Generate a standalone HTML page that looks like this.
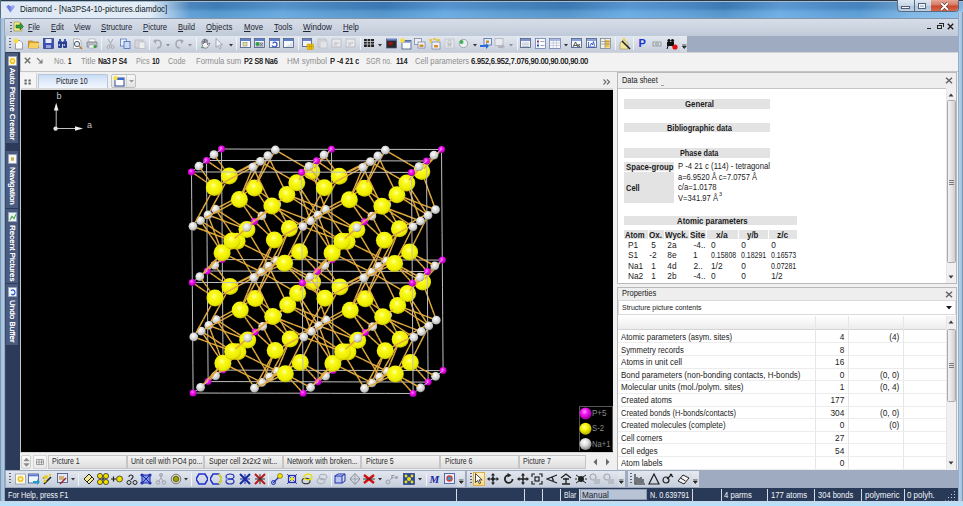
<!DOCTYPE html>
<html><head><meta charset="utf-8">
<style>
*{margin:0;padding:0;box-sizing:border-box}
html,body{width:963px;height:506px;overflow:hidden}
body{position:relative;background:#a6c3e2;font-family:"Liberation Sans",sans-serif;font-size:8px;color:#1a1a1a}
.a{position:absolute}
.t{position:absolute;white-space:nowrap;line-height:1}
/* title bar */
#title{left:0;top:0;width:963px;height:18px;background:
linear-gradient(90deg,rgba(222,233,245,1) 0,rgba(226,236,247,1) 150px,rgba(226,236,247,0) 190px),
linear-gradient(180deg,rgba(20,40,80,.10) 0,rgba(20,40,80,.05) 45%,rgba(140,210,255,.25) 65%,rgba(150,210,250,.35) 100%),
linear-gradient(100deg,#4f8cc4 0,#4f8cc4 190px,#4282bc 215px,#5a9ad2 280px,#4a88c2 330px,#3e7eb8 380px,#5c9cd6 440px,#4c8ac4 500px,#3f7eb8 560px,#5e9ed8 620px,#4f8dc8 680px,#3f7eb8 715px,#62a0da 770px,#4d8cc8 830px,#4a8ac4 850px,#7aaedc 900px,#94c0e8 963px)}
#title:after{content:"";position:absolute;left:0;top:0;right:0;height:1px;background:#4a5866;box-shadow:0 1px 0 #a4bed6}
#frameL{left:0;top:18px;width:5px;height:488px;background:linear-gradient(90deg,#5b6e82 0,#9fbddc 1px,#b3cde8 4px,#6f8196 5px)}
#frameR{left:958px;top:12px;width:5px;height:494px;background:linear-gradient(90deg,#7a8ca0 0,#b4d0ec 1px,#a4c4e4 3.5px,#6a7e94 5px)}
#frameB{left:0;top:500.5px;width:963px;height:5.5px;background:linear-gradient(180deg,#c4d6e8 0,#c2dcf0 1.5px,#b2e2fc 4.5px,#2c6a8a 5.5px)}
#topline{left:0;top:0;width:963px;height:1px;background:#2c3744}
/* menu */
#menu{left:5px;top:18px;width:953px;height:17.5px;background:linear-gradient(180deg,#d6dde8 0,#ccd4e0 55%,#bfc9d8 100%);border-top:1px solid #8494aa}
.mi{font-size:8.2px;color:#1c2533;letter-spacing:-0.15px}
.mi u{text-decoration:underline}
/* toolbar row */
#tbrow{left:5px;top:35.5px;width:953px;height:17px;background:#9eabc0}
#tb{left:6px;top:35.5px;width:681px;height:16.5px;background:linear-gradient(180deg,#e2e7ef 0,#d3dae5 55%,#c5cddb 100%);border-radius:0 2px 2px 0}
.ic{position:absolute;width:11px;height:10px}
.sep{position:absolute;width:1px;height:13px;background:#9aa6b8;border-right:1px solid #f0f3f7}
/* info bar */
#info{left:20px;top:52px;width:938px;height:19px;background:#f2f2f2;border-top:1.5px solid #d0d4da}
.il{top:56.5px;font-size:8px;color:#8c8c8c;letter-spacing:-0.1px}
.iv{color:#1c1c1c}
/* sidebar */
#side{left:5px;top:52px;width:16px;height:418px;background:#2c3b5a;border-left:0.5px solid #3a4a60;border-right:1.5px solid #c0c7d2}
.sb{position:absolute;left:5.5px;width:12.3px;background:#4b5b80}
.sbt{position:absolute;left:17.5px;transform-origin:0 0;transform:rotate(90deg);color:#ffffff;font-size:8.2px;white-space:nowrap;line-height:1;text-shadow:0 0.25px 0 #fff}
/* tab bar */
#tabbar{left:20px;top:70.8px;width:593px;height:19px;background:#f0f0f0;border-top:1px solid #c4c4c4}
#pic{left:20.5px;top:89.5px;width:592.5px;height:362.5px;background:#000;overflow:hidden}
/* right */
#rbg{left:613px;top:70.8px;width:345px;height:400px;background:#f0f0f0;border-top:1px solid #c4c4c4}
.panel{position:absolute;background:#fff;border:1px solid #b9b9b9}
.ph{position:absolute;left:0;top:0;right:0;background:#eeeeee;border-bottom:1px solid #c4c4c4}
.bar{position:absolute;left:624px;height:9.5px;background:#e3e3e3}
.ds{font-size:7.6px;color:#1a1a1a}
.dsb{font-weight:bold;font-size:7.4px}
.pr{position:absolute;left:617px;width:329px;height:12.5px;border-bottom:1px solid #ececec}
.prt{font-size:7.7px;color:#1a1a1a}
/* bottom */
#btabs{left:20px;top:452px;width:593px;height:18px;background:#f0f0f0;border-top:1px solid #d6d6d6}
.bt{position:absolute;top:455px;height:13.5px;background:linear-gradient(180deg,#f4f4f4,#dedede);border:1px solid #c6c6c6;font-size:8px;color:#2a2a2a}
#btrow{left:5px;top:470px;width:953px;height:17.5px;background:#9eabc0}
#btb{left:6px;top:470.5px;width:692px;height:16.5px;background:linear-gradient(180deg,#e2e7ef 0,#d3dae5 55%,#c5cddb 100%)}
#status{left:5px;top:487.5px;width:953px;height:13.5px;background:#293a58}
.st{top:491px;font-size:8px;color:#f4f6fa}
.ssep{position:absolute;top:488.5px;width:1px;height:12px;background:#d6dbe4}
</style></head><body>
<div class="a" id="title"></div>
<div class="a" id="topline"></div><div class="a" style="left:0;top:0;width:1px;height:506px;background:#5a6a7c"></div>
<svg class="a" style="left:5px;top:4px" width="11" height="10" viewBox="0 0 11 10"><path d="M1 2.5 L3.2 1 L5.5 2.3 L7.8 1 L10 2.5 L5.5 8.5 Z" fill="#8a9af0"/><path d="M3.2 1 L5.5 2.3 L5.5 8.5 L2.2 3.2Z" fill="#6a78d8"/><path d="M7.8 1 L5.5 2.3 L8.8 3.2Z" fill="#b8c4f8"/></svg><div class="t" style="left:19.70px;top:4.72px;font-size:8.6px;color:#101820;transform:scaleX(0.9261);transform-origin:0 0;">Diamond - [Na3PS4-10-pictures.diamdoc]</div>
<div class="a" id="menu"></div>
<div class="t" style="left:27.60px;top:22.55px;font-size:8.8px;color:#1c2533;transform:scaleX(0.8388);transform-origin:0 0;"><u style="text-decoration-thickness:0.6px;text-underline-offset:0.5px">F</u>ile</div>
<div class="t" style="left:50.50px;top:22.55px;font-size:8.8px;color:#1c2533;transform:scaleX(0.8437);transform-origin:0 0;"><u style="text-decoration-thickness:0.6px;text-underline-offset:0.5px">E</u>dit</div>
<div class="t" style="left:73.70px;top:22.55px;font-size:8.8px;color:#1c2533;transform:scaleX(0.8773);transform-origin:0 0;"><u style="text-decoration-thickness:0.6px;text-underline-offset:0.5px">V</u>iew</div>
<div class="t" style="left:101.10px;top:22.55px;font-size:8.8px;color:#1c2533;transform:scaleX(0.8739);transform-origin:0 0;"><u style="text-decoration-thickness:0.6px;text-underline-offset:0.5px">S</u>tructure</div>
<div class="t" style="left:143.30px;top:22.55px;font-size:8.8px;color:#1c2533;transform:scaleX(0.8799);transform-origin:0 0;"><u style="text-decoration-thickness:0.6px;text-underline-offset:0.5px">P</u>icture</div>
<div class="t" style="left:178.20px;top:22.55px;font-size:8.8px;color:#1c2533;transform:scaleX(0.8683);transform-origin:0 0;"><u style="text-decoration-thickness:0.6px;text-underline-offset:0.5px">B</u>uild</div>
<div class="t" style="left:206.30px;top:22.55px;font-size:8.8px;color:#1c2533;transform:scaleX(0.8817);transform-origin:0 0;"><u style="text-decoration-thickness:0.6px;text-underline-offset:0.5px">O</u>bjects</div>
<div class="t" style="left:243.50px;top:22.55px;font-size:8.8px;color:#1c2533;transform:scaleX(0.8831);transform-origin:0 0;"><u style="text-decoration-thickness:0.6px;text-underline-offset:0.5px">M</u>ove</div>
<div class="t" style="left:274.00px;top:22.55px;font-size:8.8px;color:#1c2533;transform:scaleX(0.8955);transform-origin:0 0;"><u style="text-decoration-thickness:0.6px;text-underline-offset:0.5px">T</u>ools</div>
<div class="t" style="left:303.00px;top:22.55px;font-size:8.8px;color:#1c2533;transform:scaleX(0.9261);transform-origin:0 0;"><u style="text-decoration-thickness:0.6px;text-underline-offset:0.5px">W</u>indow</div>
<div class="t" style="left:343.30px;top:22.55px;font-size:8.8px;color:#1c2533;transform:scaleX(0.8780);transform-origin:0 0;"><u style="text-decoration-thickness:0.6px;text-underline-offset:0.5px">H</u>elp</div>
<div class="a" style="left:9.5px;top:22px;width:2px;height:10px;background:repeating-linear-gradient(180deg,#5a6678 0 1px,transparent 1px 3px)"></div>
<svg class="a" style="left:13px;top:21px" width="11" height="11" viewBox="0 0 11 11"><path d="M1 1h6l2 2v7H1z" fill="#f4e97a" stroke="#8a8a50" stroke-width=".6"/><path d="M3 4h4v-2l3.5 3.5L7 9V7H3z" fill="#2e9a3a" stroke="#1c5a22" stroke-width=".5"/></svg>
<div class="a" style="left:926.5px;top:28px;width:4.5px;height:1.2px;background:#222"></div>
<div class="a" style="left:936.5px;top:24.5px;width:5.5px;height:4.5px;border:0.8px solid #222;border-top-width:1.3px"></div><div class="a" style="left:938.5px;top:23px;width:5px;height:4px;border:0.8px solid #222;border-top-width:1.3px;border-left:none;border-bottom:none"></div>
<svg class="a" style="left:946.5px;top:23px" width="7" height="7" viewBox="0 0 7 7"><path d="M.8 .8l5.4 5.4M6.2 .8L.8 6.2" stroke="#1a1a1a" stroke-width="1.3"/></svg>
<div class="a" id="tbrow"></div>
<div class="a" id="tb"></div>
<div class="a" style="left:9px;top:38px;width:2px;height:11px;background:repeating-linear-gradient(180deg,#5a6678 0 1px,transparent 1px 3px)"></div>
<svg class="a" style="left:13px;top:37.5px" width="11" height="12" viewBox="0 0 11 12"><path d="M2.5 2.5h4.5l2.5 2.5v6h-7z" fill="#fff" stroke="#7a7a7a" stroke-width=".7"/><circle cx="3" cy="3" r="2.4" fill="#f8e040"/></svg>
<svg class="a" style="left:28px;top:37.5px" width="12" height="11" viewBox="0 0 12 11"><path d="M.5 3h4l1 1h5v6H.5z" fill="#e0a830" stroke="#9a6a10" stroke-width=".6"/><path d="M2 5h9.5l-1.5 5H.5z" fill="#f6d060"/></svg>
<svg class="a" style="left:43px;top:37.5px" width="11" height="11" viewBox="0 0 11 11"><rect x=".5" y=".5" width="10" height="10" fill="#3a4eb8" stroke="#1c2a70" stroke-width=".6"/><rect x="2.5" y="1" width="6" height="4" fill="#e8ecf8"/><rect x="3" y="7" width="5" height="3" fill="#9aa6d8"/></svg>
<svg class="a" style="left:57px;top:37.5px" width="11" height="11" viewBox="0 0 11 11"><rect x="1" y="3" width="4" height="7" rx="1" fill="#2a3e90"/><rect x="6" y="3" width="4" height="7" rx="1" fill="#2a3e90"/><rect x="2" y="1" width="2" height="3" fill="#3a56b0"/><rect x="7" y="1" width="2" height="3" fill="#3a56b0"/><rect x="4" y="4" width="3" height="2" fill="#2a3e90"/><rect x="1.6" y="6" width="1.4" height="2" fill="#9ab0f0"/><rect x="6.6" y="6" width="1.4" height="2" fill="#9ab0f0"/></svg>
<svg class="a" style="left:72px;top:37.5px" width="11" height="12" viewBox="0 0 11 12"><path d="M1.5 1h5.5l2 2v7.5h-7.5z" fill="#fff" stroke="#8a8a8a" stroke-width=".6"/><circle cx="5" cy="6" r="2.6" fill="#e6eef8" stroke="#404a5a" stroke-width=".9"/><path d="M7 8l3 3" stroke="#c07a20" stroke-width="1.4"/></svg>
<svg class="a" style="left:86px;top:37.5px" width="12" height="11" viewBox="0 0 12 11"><path d="M3 1h6v3H3z" fill="#fff" stroke="#888" stroke-width=".5"/><path d="M1 4h10v5H1z" fill="#b8bcc4" stroke="#6a6e78" stroke-width=".6"/><rect x="3" y="7" width="6" height="3" fill="#f4f4f4" stroke="#888" stroke-width=".4"/><circle cx="9" cy="8.5" r="1.6" fill="#30a040"/></svg>
<svg class="a" style="left:105.5px;top:37.5px" width="9" height="11" viewBox="0 0 9 11"><path d="M2 1l4 7M7 1L3 8" stroke="#a8aab0" stroke-width="1"/><circle cx="2.5" cy="9" r="1.5" fill="none" stroke="#a8aab0"/><circle cx="6.5" cy="9" r="1.5" fill="none" stroke="#a8aab0"/></svg>
<svg class="a" style="left:119.5px;top:37.5px" width="11" height="11" viewBox="0 0 11 11"><rect x=".5" y="1" width="6" height="7" fill="#e8f0fc" stroke="#4a6ab8" stroke-width=".7"/><rect x="4" y="3.5" width="6" height="7" fill="#c8dcf8" stroke="#3a5ab0" stroke-width=".7"/></svg>
<svg class="a" style="left:133.5px;top:37.5px" width="12" height="11" viewBox="0 0 12 11"><rect x="1" y="2" width="8" height="8" fill="#d4d6da" stroke="#a8aab0" stroke-width=".6"/><rect x="5" y="4" width="6" height="6.5" fill="#eceef0" stroke="#b0b2b8" stroke-width=".6"/></svg>
<svg class="a" style="left:153px;top:37.5px" width="9" height="11" viewBox="0 0 9 11"><path d="M2 4c2-3 6-2 6 2s-3 4-4 4" fill="none" stroke="#a4a8b0" stroke-width="1.5"/><path d="M0 3l3-2v5z" fill="#a4a8b0"/></svg>
<svg class="a" style="left:175px;top:37.5px" width="9" height="11" viewBox="0 0 9 11"><path d="M7 4c-2-3-6-2-6 2s3 4 4 4" fill="none" stroke="#a4a8b0" stroke-width="1.5"/><path d="M9 3L6 1v5z" fill="#a4a8b0"/></svg>
<svg class="a" style="left:200px;top:37.5px" width="11" height="11" viewBox="0 0 11 11"><path d="M2 6V3h1.2v3V1.5h1.4V5V1h1.4v4V2h1.4v5l1.6-2 1 .6L7 10H3.5z" fill="#f4f4f4" stroke="#4a5060" stroke-width=".6"/><path d="M1 9l2 1" stroke="#30a040"/></svg>
<svg class="a" style="left:214.5px;top:37.5px" width="8" height="11" viewBox="0 0 8 11"><path d="M1 .5v9l2.2-2 1.6 3.2 1.4-.7-1.6-3.1h3z" fill="#f0f2f6" stroke="#8a8e98" stroke-width=".7"/></svg>
<svg class="a" style="left:240px;top:37.5px" width="11" height="11" viewBox="0 0 11 11"><rect x=".5" y=".5" width="10" height="9" fill="#f6f8fc" stroke="#44577e" stroke-width=".8"/><rect x="1" y="1" width="9" height="2" fill="#5a7fd0"/><rect x="3" y="4.5" width="4" height="3.5" fill="#e4dca0" stroke="#8a8460" stroke-width=".5"/></svg>
<svg class="a" style="left:254px;top:37.5px" width="11" height="11" viewBox="0 0 11 11"><rect x=".5" y=".5" width="10" height="9" fill="#f6f8fc" stroke="#44577e" stroke-width=".8"/><rect x="1" y="1" width="9" height="2" fill="#5a7fd0"/><path d="M1.5 4h8v5h-8z" fill="#b8bcc8"/><circle cx="3.5" cy="6" r="2" fill="#30a040"/><path d="M6 5l3 3M9 5L6 8" stroke="#606470" stroke-width=".7"/></svg>
<svg class="a" style="left:269px;top:37.5px" width="11" height="11" viewBox="0 0 11 11"><rect x=".5" y=".5" width="10" height="9" fill="#f6f8fc" stroke="#44577e" stroke-width=".8"/><rect x="1" y="1" width="9" height="2" fill="#5a7fd0"/><path d="M3 7.5c1 2 5 2 5-1s-4-3-4-1" fill="none" stroke="#3a5ac0" stroke-width="1.3"/></svg>
<svg class="a" style="left:283px;top:37.5px" width="11" height="11" viewBox="0 0 11 11"><rect x=".5" y=".5" width="10" height="9" fill="#f6f8fc" stroke="#44577e" stroke-width=".8"/><rect x="1" y="1" width="9" height="2" fill="#5a7fd0"/><path d="M9.5 4l-7 5h7z" fill="#dde2ea"/></svg>
<svg class="a" style="left:301.5px;top:37.5px" width="12" height="12" viewBox="0 0 12 12"><rect x=".5" y=".5" width="9" height="8" fill="#f0f2f8" stroke="#44577e" stroke-width=".8"/><rect x="1" y="1" width="8" height="2" fill="#6a80c8"/><rect x="5" y="6" width="6.5" height="5.5" fill="#f0c400" stroke="#c09000" stroke-width=".4"/><path d="M5 8.5h6.5M7.5 6v5.5M9.5 6v5.5" stroke="#a07800" stroke-width=".4"/></svg>
<svg class="a" style="left:317px;top:37.5px" width="11" height="11" viewBox="0 0 11 11"><rect x="1" y="1" width="8" height="8" fill="#d8dade" stroke="#b4b6bc" stroke-width=".7"/><rect x="3" y="3" width="7" height="7" fill="#e2e4e8" stroke="#b8bac0" stroke-width=".6"/></svg>
<svg class="a" style="left:330.5px;top:37.5px" width="11" height="11" viewBox="0 0 11 11"><rect x="1" y="1" width="9" height="8" fill="#e6e8ec" stroke="#b0b2b8" stroke-width=".7"/><path d="M3 5h5M3 7h3" stroke="#b8bac0"/></svg>
<svg class="a" style="left:344.5px;top:37.5px" width="11" height="11" viewBox="0 0 11 11"><rect x="1" y="1" width="9" height="8" fill="#e6e8ec" stroke="#b0b2b8" stroke-width=".7"/><path d="M3 5h5M3 7h3" stroke="#b8bac0"/></svg>
<svg class="a" style="left:364px;top:37.5px" width="10" height="10" viewBox="0 0 10 10"><rect x="0" y="1" width="10" height="8" fill="#202020"/><path d="M0 3.5h10M0 6h10M3.3 1v8M6.6 1v8" stroke="#d0d4dc" stroke-width=".8"/></svg>
<svg class="a" style="left:385.5px;top:37.5px" width="11" height="11" viewBox="0 0 11 11"><rect x=".5" y="1" width="10" height="9" fill="#2a2a2a" stroke="#4a5a80" stroke-width=".7"/><rect x="1" y="1" width="9" height="1.6" fill="#6a88d0"/><rect x="2.5" y="4" width="4" height="3" fill="#a01010"/></svg>
<svg class="a" style="left:399.5px;top:37.5px" width="12" height="12" viewBox="0 0 12 12"><rect x="2" y="2.5" width="9" height="8.5" fill="#f8fafc" stroke="#44577e" stroke-width=".8"/><rect x="2.5" y="3" width="8" height="1.6" fill="#6a88d0"/><circle cx="2.5" cy="2.5" r="2.3" fill="#f8e040"/></svg>
<svg class="a" style="left:414px;top:37.5px" width="12" height="11" viewBox="0 0 12 11"><rect x=".5" y=".5" width="7" height="6" fill="#eef0f6" stroke="#5a6a90" stroke-width=".6"/><rect x="4" y="4" width="7" height="6" fill="#f4f4f4" stroke="#5a6a90" stroke-width=".6"/><rect x="5.5" y="6.5" width="4" height="2.5" fill="#d09030"/></svg>
<svg class="a" style="left:428.5px;top:37.5px" width="12" height="12" viewBox="0 0 12 12"><rect x="3" y="4" width="8" height="7" fill="#f4f4f4" stroke="#5a6a90" stroke-width=".6"/><path d="M0 2h3M4 1h3M7 2h4M1 4h2" stroke="#e8c020" stroke-width="1.6"/><rect x="5" y="7" width="4" height="2.5" fill="#d09030"/></svg>
<svg class="a" style="left:444px;top:37.5px" width="11" height="11" viewBox="0 0 11 11"><rect x="1" y="1" width="9" height="9" fill="#e4e6ea" stroke="#b8bac0" stroke-width=".6"/><rect x="3.5" y="5" width="4" height="3.5" fill="#c0c2c8"/><path d="M4 5V3.5a1.5 1.5 0 013 0V5" fill="none" stroke="#a8aab0" stroke-width=".7"/></svg>
<svg class="a" style="left:458px;top:37.5px" width="11" height="11" viewBox="0 0 11 11"><circle cx="5.5" cy="5.5" r="4.2" fill="#eceef2" stroke="#9aa0a8" stroke-width=".9"/><circle cx="3.5" cy="4" r="2" fill="#40b050"/></svg>
<svg class="a" style="left:479.5px;top:37.5px" width="12" height="11" viewBox="0 0 12 11"><rect x="4" y=".5" width="7.5" height="6.5" fill="#e8ecf4" stroke="#3a5aa8" stroke-width=".7"/><rect x="6" y="2.5" width="3" height="2.5" fill="#c89030"/><path d="M0 8h6V6l3 3-3 3V10H0z" fill="#2a6ad8" transform="translate(0,-1)"/></svg>
<svg class="a" style="left:493.5px;top:37.5px" width="12" height="11" viewBox="0 0 12 11"><rect x="1" y=".5" width="8" height="7" fill="#e8eaee" stroke="#a8acb4" stroke-width=".7"/><path d="M4 8h4V6l3 2.5-3 2.5V10H4z" fill="#b0b4bc"/></svg>
<svg class="a" style="left:520px;top:37.5px" width="11" height="11" viewBox="0 0 11 11"><rect x=".5" y=".5" width="10" height="9" fill="#f6f8fc" stroke="#44577e" stroke-width=".8"/><rect x="1" y="1" width="9" height="2" fill="#7a90d0"/><path d="M2 5h7M2 6.8h7M2 8.5h7" stroke="#9aa0b0" stroke-width=".6"/></svg>
<svg class="a" style="left:534.5px;top:37.5px" width="11" height="11" viewBox="0 0 11 11"><rect x=".5" y=".5" width="10" height="10" fill="#fafbfe" stroke="#5a70a8" stroke-width=".7"/><path d="M2 3.5h2" stroke="#d02020" stroke-width="1.6"/><path d="M2 7.5h2" stroke="#2040c0" stroke-width="1.6"/><path d="M5.5 3.5h4M5.5 7.5h4" stroke="#8090b0" stroke-width=".8"/><path d="M3 1.5v8" stroke="#3050c0" stroke-width=".6"/></svg>
<svg class="a" style="left:548.5px;top:37.5px" width="12" height="11" viewBox="0 0 12 11"><rect x=".5" y=".5" width="11" height="10" fill="#f6f8fc" stroke="#5a70a8" stroke-width=".7"/><rect x="1" y="1" width="10" height="2" fill="#a8b8e0"/><path d="M1 5h10M1 7.5h10M4.3 3v7M7.6 3v7" stroke="#a8b0c8" stroke-width=".5"/></svg>
<svg class="a" style="left:571px;top:37.5px" width="11" height="11" viewBox="0 0 11 11"><rect x=".5" y=".5" width="10" height="9" fill="#f6f8fc" stroke="#44577e" stroke-width=".8"/><rect x="1" y="1" width="9" height="2" fill="#8aa0d8"/><path d="M2 9l2.5-5 2.5 5M3 7.5h3M6.5 6l2.5 3M9 6l-2.5 3" fill="none" stroke="#303030" stroke-width=".8"/></svg>
<svg class="a" style="left:585.5px;top:37.5px" width="11" height="11" viewBox="0 0 11 11"><rect x=".5" y=".5" width="10" height="9" fill="#f6f8fc" stroke="#44577e" stroke-width=".8"/><rect x="1" y="1" width="9" height="2" fill="#8aa0d8"/><path d="M2 9h7.5M2.5 4v5M4 8l1.5-3 1 2 1-3.5 1 4.5" fill="none" stroke="#2a4ac0" stroke-width=".8"/></svg>
<svg class="a" style="left:600px;top:37.5px" width="11" height="11" viewBox="0 0 11 11"><rect x=".5" y=".5" width="10" height="10" fill="#f0f0ea" stroke="#707880" stroke-width=".7"/><rect x="5" y="2" width="4.5" height="7.5" fill="#f0c440"/><path d="M1 3.5h9M1 6h9M5 1v9" stroke="#808890" stroke-width=".6"/></svg>
<svg class="a" style="left:618.5px;top:37.5px" width="12" height="12" viewBox="0 0 12 12"><path d="M1 11V5l4-3 4 3v6z" fill="#f0e6a0" stroke="#a09040" stroke-width=".6"/><path d="M3 3l8 8" stroke="#202020" stroke-width="1.6"/><circle cx="5" cy="1.5" r="1.2" fill="#f8d020"/></svg>
<svg class="a" style="left:651.5px;top:37.5px" width="10" height="10" viewBox="0 0 10 10"><path d="M1 4h8v4H1z" fill="none" stroke="#9aa4a0" stroke-width="1.1"/><circle cx="5" cy="6" r="1.4" fill="none" stroke="#9aa4a0"/></svg>
<svg class="a" style="left:665.5px;top:37.5px" width="12" height="12" viewBox="0 0 12 12"><circle cx="3" cy="2.5" r="1.6" fill="#101010"/><circle cx="6.5" cy="2.5" r="1.6" fill="#101010"/><rect x="1" y="4" width="7" height="4" fill="#101010"/><path d="M2 8l-1 3M7 8l1 3" stroke="#101010"/><circle cx="9" cy="9" r="2.6" fill="#e01010"/></svg>
<div class="t" style="left:638.5px;top:37.5px;font-size:11px;font-weight:bold;color:#2030d0">P</div>
<svg class="a" style="left:166px;top:43.5px" width="4" height="3" viewBox="0 0 4 3"><path d="M0 0h4L2 2.5z" fill="#8a8e96"/></svg>
<svg class="a" style="left:188px;top:43.5px" width="4" height="3" viewBox="0 0 4 3"><path d="M0 0h4L2 2.5z" fill="#8a8e96"/></svg>
<svg class="a" style="left:228.5px;top:43.5px" width="4" height="3" viewBox="0 0 4 3"><path d="M0 0h4L2 2.5z" fill="#333"/></svg>
<svg class="a" style="left:378px;top:43.5px" width="4" height="3" viewBox="0 0 4 3"><path d="M0 0h4L2 2.5z" fill="#333"/></svg>
<svg class="a" style="left:472.5px;top:43.5px" width="4" height="3" viewBox="0 0 4 3"><path d="M0 0h4L2 2.5z" fill="#333"/></svg>
<svg class="a" style="left:509px;top:43.5px" width="4" height="3" viewBox="0 0 4 3"><path d="M0 0h4L2 2.5z" fill="#8a8e96"/></svg>
<svg class="a" style="left:563.5px;top:43.5px" width="4" height="3" viewBox="0 0 4 3"><path d="M0 0h4L2 2.5z" fill="#333"/></svg>
<div class="sep" style="left:101px;top:37px"></div>
<div class="sep" style="left:148.5px;top:37px"></div>
<div class="sep" style="left:195.5px;top:37px"></div>
<div class="sep" style="left:235.5px;top:37px"></div>
<div class="sep" style="left:297.5px;top:37px"></div>
<div class="sep" style="left:359.5px;top:37px"></div>
<div class="sep" style="left:516.5px;top:37px"></div>
<div class="sep" style="left:614.5px;top:37px"></div>
<div class="sep" style="left:632.5px;top:37px"></div>
<div class="a" style="left:680px;top:35.5px;width:7px;height:16.5px;background:linear-gradient(180deg,#e6eaf0,#cfd6e0)"></div>
<svg class="a" style="left:681.5px;top:44px" width="5" height="6" viewBox="0 0 5 6"><path d="M0 0h4.5M0.3 2h4l-2 2.5z" stroke="#2a2a2a" stroke-width=".8" fill="#2a2a2a"/></svg>
<div class="a" id="info"></div>
<svg class="a" style="left:24px;top:57px" width="7" height="7" viewBox="0 0 7 7"><path d="M.8 .8l5.4 5.4M6.2 .8L.8 6.2" stroke="#6a6a6a" stroke-width="1.3"/></svg>
<svg class="a" style="left:36px;top:57px" width="7" height="7" viewBox="0 0 7 7"><path d="M1 1l5 5M2.5 6H6V2.5" fill="none" stroke="#7a7a7a" stroke-width="1.1"/></svg>
<div class="t" style="left:54.00px;top:57.02px;font-size:8.6px;color:#8e8e8e;transform:scaleX(0.8673);transform-origin:0 0;">No.</div>
<div class="t" style="left:68.10px;top:57.02px;font-size:8.6px;color:#1e1e1e;transform:scaleX(0.6902);transform-origin:0 0;text-shadow:0.2px 0 0 #2a2a2a">1</div>
<div class="t" style="left:80.90px;top:57.02px;font-size:8.6px;color:#8e8e8e;transform:scaleX(0.9170);transform-origin:0 0;">Title</div>
<div class="t" style="left:98.00px;top:57.02px;font-size:8.6px;color:#1e1e1e;transform:scaleX(0.7915);transform-origin:0 0;text-shadow:0.2px 0 0 #2a2a2a">Na3 P S4</div>
<div class="t" style="left:136.20px;top:57.02px;font-size:8.6px;color:#8e8e8e;transform:scaleX(0.8308);transform-origin:0 0;">Pics</div>
<div class="t" style="left:151.70px;top:57.02px;font-size:8.6px;color:#1e1e1e;transform:scaleX(0.7634);transform-origin:0 0;text-shadow:0.2px 0 0 #2a2a2a">10</div>
<div class="t" style="left:168.00px;top:57.02px;font-size:8.6px;color:#8e8e8e;transform:scaleX(0.8614);transform-origin:0 0;">Code</div>
<div class="t" style="left:196.20px;top:57.02px;font-size:8.6px;color:#8e8e8e;transform:scaleX(0.9015);transform-origin:0 0;">Formula sum</div>
<div class="t" style="left:244.40px;top:57.02px;font-size:8.6px;color:#1e1e1e;transform:scaleX(0.8081);transform-origin:0 0;text-shadow:0.2px 0 0 #2a2a2a">P2 S8 Na6</div>
<div class="t" style="left:286.50px;top:57.02px;font-size:8.6px;color:#8e8e8e;transform:scaleX(0.9329);transform-origin:0 0;">HM symbol</div>
<div class="t" style="left:329.60px;top:57.02px;font-size:8.6px;color:#1e1e1e;transform:scaleX(0.8438);transform-origin:0 0;text-shadow:0.2px 0 0 #2a2a2a">P -4 21 c</div>
<div class="t" style="left:366.40px;top:57.02px;font-size:8.6px;color:#8e8e8e;transform:scaleX(0.7826);transform-origin:0 0;">SGR no.</div>
<div class="t" style="left:395.50px;top:57.02px;font-size:8.6px;color:#1e1e1e;transform:scaleX(0.8392);transform-origin:0 0;text-shadow:0.2px 0 0 #2a2a2a">114</div>
<div class="t" style="left:415.40px;top:57.02px;font-size:8.6px;color:#8e8e8e;transform:scaleX(0.8936);transform-origin:0 0;">Cell parameters</div>
<div class="t" style="left:470.80px;top:57.02px;font-size:8.6px;color:#1e1e1e;transform:scaleX(0.8306);transform-origin:0 0;text-shadow:0.2px 0 0 #2a2a2a">6.952,6.952,7.076,90.00,90.00,90.00</div>
<div class="a" id="side"></div>
<div class="sb" style="top:53px;height:90px"></div>
<svg class="a" style="left:7.5px;top:56px" width="9" height="10" viewBox="0 0 9 9" preserveAspectRatio="none"><rect x=".5" y=".5" width="8" height="8" fill="#fffbe0" stroke="#9aa6c0" stroke-width=".6"/><circle cx="4.5" cy="4.5" r="2.8" fill="#f0c020"/><circle cx="4.5" cy="4.5" r="1.3" fill="#fff4a0"/></svg>
<div class="sbt" style="left:16.2px;top:67.8px;font-size:8px;letter-spacing:0.000px">Auto Picture Creator</div>
<div class="sb" style="top:151px;height:56.69999999999999px"></div>
<svg class="a" style="left:7.5px;top:154px" width="9" height="10" viewBox="0 0 9 9" preserveAspectRatio="none"><rect x=".5" y=".5" width="8" height="8" fill="#f8f8f0" stroke="#9aa6c0" stroke-width=".6"/><rect x="3" y="3" width="3" height="3" fill="#c8b060"/></svg>
<div class="sbt" style="left:16.2px;top:167px;font-size:8px;letter-spacing:0.000px">Navigation</div>
<div class="sb" style="top:208.9px;height:74.1px"></div>
<svg class="a" style="left:7.5px;top:211.9px" width="9" height="10" viewBox="0 0 9 9" preserveAspectRatio="none"><rect x=".5" y=".5" width="8" height="8" fill="#f0f4f0" stroke="#9aa6c0" stroke-width=".6"/><path d="M2 7l2-3 2 2 2-4" stroke="#30a040" fill="none"/></svg>
<div class="sbt" style="left:16.2px;top:224.8px;font-size:8px;letter-spacing:0.000px">Recent Pictures</div>
<div class="sb" style="top:284px;height:60.60000000000002px"></div>
<svg class="a" style="left:7.5px;top:287px" width="9" height="10" viewBox="0 0 9 9" preserveAspectRatio="none"><rect x=".5" y=".5" width="8" height="8" fill="#f4f8ff" stroke="#9aa6c0" stroke-width=".6"/><path d="M3 3.5c1.5-1.5 4-1 4 1.5S4 7.5 3.5 6" fill="none" stroke="#2a5ad0" stroke-width="1.2"/></svg>
<div class="sbt" style="left:16.2px;top:299.8px;font-size:8px;letter-spacing:0.000px">Undo Buffer</div>
<div class="a" id="tabbar"></div>
<div class="a" style="left:20.5px;top:72.5px;width:16.5px;height:16px;background:#f5f5f5;border-right:1px solid #d0d0d0;border-bottom:1px solid #d0d0d0"></div>
<svg class="a" style="left:24px;top:78.5px" width="8" height="6" viewBox="0 0 8 6"><path d="M.5 .5h2.2v2H.5zM4.5 .5h2.2v2H4.5zM.5 3.6h2.2v2H.5zM4.5 3.6h2.2v2H4.5z" fill="#5a6068"/></svg>
<div class="a" style="left:37.5px;top:73.5px;width:70px;height:16px;background:linear-gradient(180deg,#c8dcf4 0,#dfeafa 40%,#f8fbff 100%);border:1px solid #b4c6dc;border-bottom:none;border-radius:0 2px 0 0"></div>
<div class="t" style="left:55.60px;top:77.40px;font-size:8.5px;color:#1a1a1a;transform:scaleX(0.8255);transform-origin:0 0;">Picture 10</div>
<div class="a" style="left:111px;top:74px;width:25px;height:14px;background:linear-gradient(180deg,#f8f8f8,#e2e2e2);border:1px solid #c0c0c0;border-radius:2px"></div>
<svg class="a" style="left:113px;top:75px" width="12" height="12" viewBox="0 0 12 12"><rect x="2" y="3" width="9" height="8" fill="#fff" stroke="#2a4a9a" stroke-width="1"/><rect x="2" y="3" width="9" height="2" fill="#3a6ad0"/><circle cx="2.5" cy="3" r="2.2" fill="#f8e040"/></svg>
<div class="a" style="left:125.5px;top:75px;width:1px;height:12px;background:#d0d0d0"></div>
<svg class="a" style="left:128.5px;top:79.5px" width="5" height="3" viewBox="0 0 5 3"><path d="M0 0h5L2.5 2.5z" fill="#9a9a9a"/></svg>
<svg class="a" style="left:603px;top:78.5px" width="8" height="6" viewBox="0 0 8 6"><path d="M.5 .5L3 3 .5 5.5M4 .5L6.5 3 4 5.5" fill="none" stroke="#6a6a6a" stroke-width="1.1"/></svg>
<div class="a" style="left:20.5px;top:88px;width:592.5px;height:1.5px;background:#d8d8d8"></div>
<div class="a" id="pic"><svg width="593" height="363" viewBox="0 0 593 363" style="position:absolute;left:0;top:0">
<defs>
<radialGradient id="gS" cx="0.45" cy="0.38" r="0.62"><stop offset="0" stop-color="#ffffa0"/><stop offset="0.3" stop-color="#fafa18"/><stop offset="0.8" stop-color="#ecec00"/><stop offset="1" stop-color="#c4bc00"/></radialGradient>
<radialGradient id="gNa" cx="0.42" cy="0.36" r="0.62"><stop offset="0" stop-color="#ffffff"/><stop offset="0.4" stop-color="#e4e4e4"/><stop offset="0.85" stop-color="#c4c4c4"/><stop offset="1" stop-color="#8a8a8a"/></radialGradient>
<radialGradient id="gP" cx="0.42" cy="0.36" r="0.62"><stop offset="0" stop-color="#ff90ff"/><stop offset="0.4" stop-color="#f010f0"/><stop offset="0.85" stop-color="#d000d0"/><stop offset="1" stop-color="#900090"/></radialGradient>
</defs>
<style>.b{stroke:#e2aa3c;stroke-width:1.45}.e{stroke:#c0c0c0;stroke-width:1}</style>
<line x1="202.1" y1="280.1" x2="201.9" y2="252.5" class="e"/>
<line x1="202.1" y1="280.1" x2="229.6" y2="280.2" class="e"/>
<line x1="201.9" y1="252.5" x2="201.7" y2="224.8" class="e"/>
<line x1="229.6" y1="280.2" x2="257.1" y2="280.2" class="e"/>
<line x1="201.7" y1="224.8" x2="201.5" y2="197.2" class="e"/>
<line x1="257.1" y1="280.2" x2="284.6" y2="280.3" class="e"/>
<line x1="201.5" y1="197.2" x2="201.3" y2="169.6" class="e"/>
<circle cx="202.1" cy="280.1" r="3.5" fill="url(#gP)"/>
<line x1="203.7" y1="278.1" x2="206.0" y2="275.2" class="b"/>
<line x1="201.3" y1="169.6" x2="201.1" y2="141.9" class="e"/>
<line x1="284.6" y1="280.3" x2="312.1" y2="280.4" class="e"/>
<line x1="201.3" y1="169.6" x2="228.8" y2="169.6" class="e"/>
<line x1="201.1" y1="141.9" x2="200.9" y2="114.3" class="e"/>
<line x1="206.0" y1="275.2" x2="208.3" y2="272.4" class="b"/>
<line x1="312.1" y1="280.4" x2="311.9" y2="252.7" class="e"/>
<line x1="312.1" y1="280.4" x2="339.6" y2="280.4" class="e"/>
<line x1="228.8" y1="169.6" x2="256.3" y2="169.7" class="e"/>
<line x1="200.9" y1="114.3" x2="200.7" y2="86.6" class="e"/>
<line x1="208.3" y1="272.4" x2="210.7" y2="269.5" class="b"/>
<line x1="311.9" y1="252.7" x2="311.7" y2="225.1" class="e"/>
<line x1="339.6" y1="280.4" x2="367.1" y2="280.5" class="e"/>
<line x1="256.3" y1="169.7" x2="283.8" y2="169.7" class="e"/>
<line x1="200.7" y1="86.6" x2="200.5" y2="59.0" class="e"/>
<line x1="311.7" y1="225.1" x2="311.5" y2="197.4" class="e"/>
<circle cx="201.3" cy="169.6" r="3.5" fill="url(#gP)"/>
<line x1="210.7" y1="269.5" x2="213.0" y2="266.6" class="b"/>
<line x1="202.9" y1="167.6" x2="205.2" y2="164.7" class="b"/>
<line x1="367.1" y1="280.5" x2="394.6" y2="280.5" class="e"/>
<line x1="283.8" y1="169.7" x2="311.3" y2="169.8" class="e"/>
<line x1="200.5" y1="59.0" x2="228.0" y2="59.1" class="e"/>
<line x1="245.2" y1="275.7" x2="252.1" y2="279.1" class="b"/>
<line x1="311.5" y1="197.4" x2="311.3" y2="169.8" class="e"/>
<circle cx="256.7" cy="225.0" r="4.4" fill="url(#gNa)"/>
<line x1="238.3" y1="272.3" x2="245.2" y2="275.7" class="b"/>
<circle cx="312.1" cy="280.4" r="3.5" fill="url(#gP)"/>
<line x1="205.2" y1="164.7" x2="207.6" y2="161.8" class="b"/>
<line x1="313.7" y1="278.4" x2="316.0" y2="275.5" class="b"/>
<line x1="231.4" y1="268.9" x2="238.3" y2="272.3" class="b"/>
<line x1="250.5" y1="220.4" x2="254.5" y2="223.4" class="b"/>
<line x1="311.3" y1="169.8" x2="311.1" y2="142.2" class="e"/>
<line x1="260.2" y1="231.6" x2="257.9" y2="227.3" class="b"/>
<circle cx="256.0" cy="281.1" r="4.4" fill="url(#gNa)"/>
<line x1="394.6" y1="280.5" x2="422.1" y2="280.6" class="e"/>
<line x1="311.3" y1="169.8" x2="338.8" y2="169.9" class="e"/>
<line x1="228.0" y1="59.1" x2="255.5" y2="59.1" class="e"/>
<line x1="224.4" y1="265.5" x2="231.4" y2="268.9" class="b"/>
<line x1="259.6" y1="272.3" x2="257.2" y2="278.2" class="b"/>
<line x1="207.6" y1="161.8" x2="209.9" y2="158.9" class="b"/>
<line x1="311.1" y1="142.2" x2="310.9" y2="114.5" class="e"/>
<line x1="316.0" y1="275.5" x2="318.3" y2="272.6" class="b"/>
<line x1="422.1" y1="280.6" x2="421.9" y2="253.0" class="e"/>
<line x1="338.8" y1="169.9" x2="366.3" y2="169.9" class="e"/>
<line x1="255.5" y1="59.1" x2="283.0" y2="59.2" class="e"/>
<line x1="310.9" y1="114.5" x2="310.7" y2="86.9" class="e"/>
<circle cx="200.5" cy="59.0" r="3.5" fill="url(#gP)"/>
<line x1="209.9" y1="158.9" x2="212.2" y2="156.1" class="b"/>
<line x1="318.3" y1="272.6" x2="320.7" y2="269.7" class="b"/>
<line x1="421.9" y1="253.0" x2="421.7" y2="225.3" class="e"/>
<line x1="246.4" y1="217.5" x2="250.5" y2="220.4" class="b"/>
<line x1="262.4" y1="235.9" x2="260.2" y2="231.6" class="b"/>
<line x1="366.3" y1="169.9" x2="393.8" y2="170.0" class="e"/>
<line x1="283.0" y1="59.2" x2="310.5" y2="59.3" class="e"/>
<line x1="244.4" y1="165.2" x2="251.3" y2="168.6" class="b"/>
<line x1="262.1" y1="266.4" x2="259.6" y2="272.3" class="b"/>
<line x1="310.7" y1="86.9" x2="310.5" y2="59.3" class="e"/>
<line x1="309.2" y1="172.2" x2="306.1" y2="175.7" class="b"/>
<circle cx="255.9" cy="114.4" r="4.4" fill="url(#gNa)"/>
<line x1="421.7" y1="225.3" x2="421.5" y2="197.7" class="e"/>
<line x1="265.3" y1="176.4" x2="258.9" y2="172.7" class="b"/>
<line x1="237.5" y1="161.8" x2="244.4" y2="165.2" class="b"/>
<circle cx="311.3" cy="169.8" r="3.5" fill="url(#gP)"/>
<line x1="320.7" y1="269.7" x2="323.0" y2="266.9" class="b"/>
<line x1="312.9" y1="167.8" x2="315.2" y2="164.9" class="b"/>
<line x1="213.1" y1="256.2" x2="209.1" y2="250.3" class="b"/>
<line x1="230.6" y1="158.4" x2="237.5" y2="161.8" class="b"/>
<line x1="249.5" y1="180.9" x2="253.3" y2="173.9" class="b"/>
<line x1="306.1" y1="175.7" x2="303.0" y2="179.1" class="b"/>
<line x1="249.7" y1="109.9" x2="253.8" y2="112.8" class="b"/>
<line x1="259.4" y1="121.0" x2="257.1" y2="116.7" class="b"/>
<circle cx="216.9" cy="261.8" r="8.5" fill="url(#gS)"/>
<circle cx="255.2" cy="170.5" r="4.4" fill="url(#gNa)"/>
<line x1="393.8" y1="170.0" x2="421.3" y2="170.1" class="e"/>
<line x1="212.7" y1="266.3" x2="208.7" y2="270.6" class="b"/>
<line x1="271.7" y1="180.2" x2="265.3" y2="176.4" class="b"/>
<line x1="310.5" y1="59.3" x2="338.0" y2="59.3" class="e"/>
<line x1="355.2" y1="276.0" x2="362.1" y2="279.4" class="b"/>
<line x1="223.7" y1="155.0" x2="230.6" y2="158.4" class="b"/>
<line x1="421.5" y1="197.7" x2="421.3" y2="170.1" class="e"/>
<circle cx="366.7" cy="225.2" r="4.4" fill="url(#gNa)"/>
<line x1="242.4" y1="214.5" x2="246.4" y2="217.5" class="b"/>
<line x1="348.3" y1="272.6" x2="355.2" y2="276.0" class="b"/>
<line x1="258.9" y1="161.7" x2="256.4" y2="167.6" class="b"/>
<line x1="303.0" y1="179.1" x2="299.9" y2="182.6" class="b"/>
<line x1="264.7" y1="240.2" x2="262.4" y2="235.9" class="b"/>
<circle cx="422.1" cy="280.6" r="3.5" fill="url(#gP)"/>
<line x1="278.1" y1="184.0" x2="271.7" y2="180.2" class="b"/>
<line x1="315.2" y1="164.9" x2="317.6" y2="162.1" class="b"/>
<line x1="341.4" y1="269.2" x2="348.3" y2="272.6" class="b"/>
<line x1="264.5" y1="260.5" x2="262.1" y2="266.4" class="b"/>
<line x1="360.5" y1="220.7" x2="364.5" y2="223.6" class="b"/>
<line x1="421.3" y1="170.1" x2="421.1" y2="142.4" class="e"/>
<line x1="370.2" y1="231.8" x2="367.9" y2="227.5" class="b"/>
<circle cx="366.0" cy="281.3" r="4.4" fill="url(#gNa)"/>
<line x1="245.6" y1="187.9" x2="249.5" y2="180.9" class="b"/>
<line x1="299.9" y1="182.6" x2="296.8" y2="186.1" class="b"/>
<line x1="338.0" y1="59.3" x2="365.5" y2="59.4" class="e"/>
<line x1="334.4" y1="265.8" x2="341.4" y2="269.2" class="b"/>
<line x1="209.1" y1="250.3" x2="205.2" y2="244.4" class="b"/>
<line x1="284.5" y1="187.7" x2="278.1" y2="184.0" class="b"/>
<line x1="369.6" y1="272.5" x2="367.2" y2="278.4" class="b"/>
<line x1="208.7" y1="270.6" x2="204.7" y2="274.9" class="b"/>
<line x1="317.6" y1="162.1" x2="319.9" y2="159.2" class="b"/>
<line x1="421.1" y1="142.4" x2="420.9" y2="114.8" class="e"/>
<line x1="245.7" y1="106.9" x2="249.7" y2="109.9" class="b"/>
<line x1="261.6" y1="125.4" x2="259.4" y2="121.0" class="b"/>
<line x1="365.5" y1="59.4" x2="393.0" y2="59.4" class="e"/>
<line x1="241.7" y1="194.9" x2="245.6" y2="187.9" class="b"/>
<line x1="261.3" y1="155.8" x2="258.9" y2="161.7" class="b"/>
<line x1="238.3" y1="211.6" x2="242.4" y2="214.5" class="b"/>
<line x1="266.9" y1="244.6" x2="264.7" y2="240.2" class="b"/>
<line x1="308.4" y1="61.6" x2="305.3" y2="65.1" class="b"/>
<line x1="420.9" y1="114.8" x2="420.7" y2="87.1" class="e"/>
<line x1="264.5" y1="65.9" x2="258.1" y2="62.1" class="b"/>
<line x1="266.9" y1="254.6" x2="264.5" y2="260.5" class="b"/>
<circle cx="310.5" cy="59.3" r="3.5" fill="url(#gP)"/>
<line x1="319.9" y1="159.2" x2="322.2" y2="156.3" class="b"/>
<line x1="356.4" y1="217.7" x2="360.5" y2="220.7" class="b"/>
<line x1="372.4" y1="236.2" x2="370.2" y2="231.8" class="b"/>
<line x1="205.2" y1="244.4" x2="201.2" y2="238.5" class="b"/>
<line x1="212.3" y1="145.7" x2="208.4" y2="139.8" class="b"/>
<line x1="248.7" y1="70.4" x2="252.5" y2="63.4" class="b"/>
<line x1="305.3" y1="65.1" x2="302.2" y2="68.6" class="b"/>
<circle cx="216.1" cy="151.3" r="8.5" fill="url(#gS)"/>
<circle cx="254.4" cy="60.0" r="4.4" fill="url(#gNa)"/>
<line x1="393.0" y1="59.4" x2="420.5" y2="59.5" class="e"/>
<line x1="212.0" y1="155.7" x2="208.0" y2="160.0" class="b"/>
<line x1="270.9" y1="69.6" x2="264.5" y2="65.9" class="b"/>
<line x1="354.4" y1="165.4" x2="361.3" y2="168.8" class="b"/>
<line x1="372.1" y1="266.6" x2="369.6" y2="272.5" class="b"/>
<line x1="204.7" y1="274.9" x2="200.7" y2="279.2" class="b"/>
<line x1="420.7" y1="87.1" x2="420.5" y2="59.5" class="e"/>
<line x1="237.8" y1="201.9" x2="241.7" y2="194.9" class="b"/>
<line x1="419.2" y1="172.4" x2="416.1" y2="175.9" class="b"/>
<circle cx="365.9" cy="114.7" r="4.4" fill="url(#gNa)"/>
<line x1="375.3" y1="176.7" x2="368.9" y2="172.9" class="b"/>
<line x1="241.6" y1="104.0" x2="245.7" y2="106.9" class="b"/>
<line x1="347.5" y1="162.0" x2="354.4" y2="165.4" class="b"/>
<line x1="302.2" y1="68.6" x2="299.1" y2="72.1" class="b"/>
<line x1="263.9" y1="129.7" x2="261.6" y2="125.4" class="b"/>
<circle cx="421.3" cy="170.1" r="3.5" fill="url(#gP)"/>
<line x1="277.3" y1="73.4" x2="270.9" y2="69.6" class="b"/>
<line x1="323.1" y1="256.5" x2="319.1" y2="250.6" class="b"/>
<line x1="340.6" y1="158.6" x2="347.5" y2="162.0" class="b"/>
<line x1="359.5" y1="181.2" x2="363.3" y2="174.2" class="b"/>
<line x1="263.7" y1="150.0" x2="261.3" y2="155.8" class="b"/>
<line x1="416.1" y1="175.9" x2="413.0" y2="179.4" class="b"/>
<line x1="359.7" y1="110.1" x2="363.8" y2="113.1" class="b"/>
<line x1="369.4" y1="121.3" x2="367.1" y2="117.0" class="b"/>
<circle cx="326.9" cy="262.1" r="8.5" fill="url(#gS)"/>
<circle cx="365.2" cy="170.8" r="4.4" fill="url(#gNa)"/>
<line x1="244.8" y1="77.4" x2="248.7" y2="70.4" class="b"/>
<line x1="322.7" y1="266.5" x2="318.7" y2="270.8" class="b"/>
<line x1="381.7" y1="180.4" x2="375.3" y2="176.7" class="b"/>
<line x1="299.1" y1="72.1" x2="296.0" y2="75.5" class="b"/>
<line x1="333.7" y1="155.2" x2="340.6" y2="158.6" class="b"/>
<line x1="201.2" y1="238.5" x2="197.2" y2="232.6" class="b"/>
<line x1="202.1" y1="280.1" x2="187.1" y2="291.6" class="e"/>
<line x1="294.0" y1="198.5" x2="296.5" y2="205.5" class="b"/>
<line x1="208.4" y1="139.8" x2="204.4" y2="133.9" class="b"/>
<line x1="283.8" y1="77.2" x2="277.3" y2="73.4" class="b"/>
<line x1="352.4" y1="214.8" x2="356.4" y2="217.7" class="b"/>
<line x1="368.9" y1="162.0" x2="366.4" y2="167.9" class="b"/>
<line x1="413.0" y1="179.4" x2="409.9" y2="182.9" class="b"/>
<line x1="374.7" y1="240.5" x2="372.4" y2="236.2" class="b"/>
<circle cx="291.6" cy="191.9" r="8.5" fill="url(#gS)"/>
<line x1="208.0" y1="160.0" x2="204.0" y2="164.3" class="b"/>
<line x1="388.1" y1="184.2" x2="381.7" y2="180.4" class="b"/>
<line x1="200.7" y1="279.2" x2="196.7" y2="283.5" class="b"/>
<line x1="374.5" y1="260.8" x2="372.1" y2="266.6" class="b"/>
<line x1="355.6" y1="188.2" x2="359.5" y2="181.2" class="b"/>
<line x1="409.9" y1="182.9" x2="406.8" y2="186.3" class="b"/>
<line x1="226.6" y1="212.6" x2="219.8" y2="216.4" class="b"/>
<line x1="240.9" y1="84.4" x2="244.8" y2="77.4" class="b"/>
<line x1="237.6" y1="101.0" x2="241.6" y2="104.0" class="b"/>
<line x1="219.8" y1="216.4" x2="212.9" y2="220.1" class="b"/>
<line x1="319.1" y1="250.6" x2="315.2" y2="244.7" class="b"/>
<line x1="394.5" y1="188.0" x2="388.1" y2="184.2" class="b"/>
<line x1="266.1" y1="134.0" x2="263.9" y2="129.7" class="b"/>
<line x1="293.9" y1="188.9" x2="296.1" y2="185.9" class="b"/>
<line x1="212.9" y1="220.1" x2="206.1" y2="223.8" class="b"/>
<line x1="206.1" y1="223.8" x2="199.2" y2="227.6" class="b"/>
<line x1="266.1" y1="144.1" x2="263.7" y2="150.0" class="b"/>
<line x1="318.7" y1="270.8" x2="314.7" y2="275.1" class="b"/>
<line x1="296.5" y1="205.5" x2="299.0" y2="212.5" class="b"/>
<line x1="355.7" y1="107.2" x2="359.7" y2="110.1" class="b"/>
<line x1="371.6" y1="125.6" x2="369.4" y2="121.3" class="b"/>
<line x1="204.4" y1="133.9" x2="200.4" y2="128.0" class="b"/>
<line x1="351.7" y1="195.2" x2="355.6" y2="188.2" class="b"/>
<line x1="371.3" y1="156.1" x2="368.9" y2="162.0" class="b"/>
<line x1="348.3" y1="211.8" x2="352.4" y2="214.8" class="b"/>
<line x1="204.0" y1="164.3" x2="200.0" y2="168.7" class="b"/>
<line x1="237.1" y1="91.3" x2="240.9" y2="84.4" class="b"/>
<line x1="376.9" y1="244.8" x2="374.7" y2="240.5" class="b"/>
<line x1="418.4" y1="61.9" x2="415.3" y2="65.4" class="b"/>
<line x1="276.2" y1="245.3" x2="282.6" y2="242.0" class="b"/>
<line x1="374.5" y1="66.1" x2="368.1" y2="62.4" class="b"/>
<line x1="265.5" y1="255.8" x2="261.7" y2="262.7" class="b"/>
<line x1="376.9" y1="254.9" x2="374.5" y2="260.8" class="b"/>
<line x1="240.5" y1="217.8" x2="238.1" y2="214.3" class="b"/>
<circle cx="420.5" cy="59.5" r="3.5" fill="url(#gP)"/>
<line x1="260.8" y1="241.3" x2="264.0" y2="244.2" class="b"/>
<line x1="315.2" y1="244.7" x2="311.2" y2="238.8" class="b"/>
<line x1="322.3" y1="145.9" x2="318.4" y2="140.0" class="b"/>
<line x1="358.7" y1="70.6" x2="362.5" y2="63.6" class="b"/>
<line x1="415.3" y1="65.4" x2="412.2" y2="68.8" class="b"/>
<circle cx="195.3" cy="229.7" r="4.4" fill="url(#gNa)"/>
<line x1="299.0" y1="212.5" x2="301.5" y2="219.5" class="b"/>
<circle cx="326.1" cy="151.5" r="8.5" fill="url(#gS)"/>
<circle cx="364.4" cy="60.2" r="4.4" fill="url(#gNa)"/>
<line x1="322.0" y1="156.0" x2="318.0" y2="160.3" class="b"/>
<line x1="380.9" y1="69.9" x2="374.5" y2="66.1" class="b"/>
<line x1="203.9" y1="235.3" x2="198.2" y2="231.6" class="b"/>
<line x1="314.7" y1="275.1" x2="310.7" y2="279.5" class="b"/>
<line x1="282.6" y1="242.0" x2="288.9" y2="238.6" class="b"/>
<circle cx="234.2" cy="208.5" r="8.5" fill="url(#gS)"/>
<line x1="236.6" y1="202.7" x2="239.1" y2="196.8" class="b"/>
<line x1="347.8" y1="202.1" x2="351.7" y2="195.2" class="b"/>
<line x1="200.4" y1="128.0" x2="196.5" y2="122.1" class="b"/>
<line x1="201.3" y1="169.6" x2="186.3" y2="181.0" class="e"/>
<line x1="293.2" y1="88.0" x2="295.7" y2="95.0" class="b"/>
<line x1="296.1" y1="185.9" x2="298.3" y2="183.0" class="b"/>
<circle cx="269.2" cy="249.0" r="8.5" fill="url(#gS)"/>
<line x1="242.8" y1="221.3" x2="240.5" y2="217.8" class="b"/>
<line x1="257.7" y1="238.4" x2="260.8" y2="241.3" class="b"/>
<line x1="351.6" y1="104.2" x2="355.7" y2="107.2" class="b"/>
<line x1="412.2" y1="68.8" x2="409.1" y2="72.3" class="b"/>
<line x1="261.7" y1="262.7" x2="258.0" y2="269.5" class="b"/>
<line x1="373.9" y1="129.9" x2="371.6" y2="125.6" class="b"/>
<circle cx="194.6" cy="285.8" r="4.4" fill="url(#gNa)"/>
<circle cx="290.8" cy="81.3" r="8.5" fill="url(#gS)"/>
<line x1="387.3" y1="73.7" x2="380.9" y2="69.9" class="b"/>
<line x1="200.0" y1="168.7" x2="196.0" y2="173.0" class="b"/>
<line x1="373.7" y1="150.2" x2="371.3" y2="156.1" class="b"/>
<line x1="288.9" y1="238.6" x2="295.3" y2="235.2" class="b"/>
<line x1="354.8" y1="77.6" x2="358.7" y2="70.6" class="b"/>
<line x1="409.1" y1="72.3" x2="406.0" y2="75.8" class="b"/>
<line x1="225.9" y1="102.1" x2="219.0" y2="105.8" class="b"/>
<line x1="245.2" y1="224.8" x2="242.8" y2="221.3" class="b"/>
<line x1="254.5" y1="235.5" x2="257.7" y2="238.4" class="b"/>
<line x1="311.2" y1="238.8" x2="307.2" y2="232.9" class="b"/>
<line x1="312.1" y1="280.4" x2="297.1" y2="291.8" class="e"/>
<line x1="404.0" y1="198.8" x2="406.5" y2="205.8" class="b"/>
<line x1="219.0" y1="105.8" x2="212.1" y2="109.6" class="b"/>
<line x1="318.4" y1="140.0" x2="314.4" y2="134.1" class="b"/>
<line x1="393.8" y1="77.4" x2="387.3" y2="73.7" class="b"/>
<line x1="301.5" y1="219.5" x2="304.1" y2="226.5" class="b"/>
<line x1="293.1" y1="78.3" x2="295.3" y2="75.4" class="b"/>
<line x1="212.1" y1="109.6" x2="205.3" y2="113.3" class="b"/>
<line x1="258.0" y1="269.5" x2="254.2" y2="276.4" class="b"/>
<line x1="209.7" y1="239.0" x2="203.9" y2="235.3" class="b"/>
<line x1="205.3" y1="113.3" x2="198.4" y2="117.0" class="b"/>
<circle cx="401.6" cy="192.1" r="8.5" fill="url(#gS)"/>
<line x1="318.0" y1="160.3" x2="314.0" y2="164.6" class="b"/>
<line x1="295.7" y1="95.0" x2="298.2" y2="102.0" class="b"/>
<line x1="310.7" y1="279.5" x2="306.7" y2="283.8" class="b"/>
<line x1="239.1" y1="196.8" x2="241.5" y2="191.0" class="b"/>
<line x1="295.3" y1="235.2" x2="301.7" y2="231.9" class="b"/>
<line x1="247.6" y1="228.3" x2="245.2" y2="224.8" class="b"/>
<line x1="251.4" y1="232.7" x2="254.5" y2="235.5" class="b"/>
<line x1="336.6" y1="212.9" x2="329.8" y2="216.6" class="b"/>
<line x1="350.9" y1="84.6" x2="354.8" y2="77.6" class="b"/>
<line x1="347.6" y1="101.3" x2="351.6" y2="104.2" class="b"/>
<line x1="329.8" y1="216.6" x2="322.9" y2="220.4" class="b"/>
<line x1="298.3" y1="183.0" x2="300.4" y2="180.0" class="b"/>
<line x1="376.1" y1="134.3" x2="373.9" y2="129.9" class="b"/>
<line x1="403.9" y1="189.1" x2="406.1" y2="186.2" class="b"/>
<line x1="275.4" y1="134.8" x2="281.8" y2="131.4" class="b"/>
<line x1="322.9" y1="220.4" x2="316.1" y2="224.1" class="b"/>
<line x1="254.2" y1="276.4" x2="250.4" y2="283.3" class="b"/>
<line x1="264.7" y1="145.3" x2="261.0" y2="152.1" class="b"/>
<line x1="316.1" y1="224.1" x2="309.2" y2="227.8" class="b"/>
<line x1="376.1" y1="144.3" x2="373.7" y2="150.2" class="b"/>
<line x1="239.7" y1="107.3" x2="237.3" y2="103.8" class="b"/>
<line x1="406.5" y1="205.8" x2="409.0" y2="212.8" class="b"/>
<line x1="260.0" y1="130.8" x2="263.2" y2="133.7" class="b"/>
<line x1="314.4" y1="134.1" x2="310.4" y2="128.2" class="b"/>
<circle cx="194.5" cy="119.2" r="4.4" fill="url(#gNa)"/>
<line x1="215.4" y1="242.7" x2="209.7" y2="239.0" class="b"/>
<line x1="298.2" y1="102.0" x2="300.8" y2="109.0" class="b"/>
<line x1="203.2" y1="124.7" x2="197.4" y2="121.1" class="b"/>
<line x1="314.0" y1="164.6" x2="310.0" y2="168.9" class="b"/>
<line x1="281.8" y1="131.4" x2="288.2" y2="128.1" class="b"/>
<circle cx="233.4" cy="98.0" r="8.5" fill="url(#gS)"/>
<line x1="235.8" y1="92.2" x2="238.3" y2="86.3" class="b"/>
<line x1="347.1" y1="91.6" x2="350.9" y2="84.6" class="b"/>
<line x1="200.5" y1="59.0" x2="185.5" y2="70.5" class="e"/>
<line x1="386.2" y1="245.6" x2="392.6" y2="242.2" class="b"/>
<line x1="241.5" y1="191.0" x2="244.0" y2="185.1" class="b"/>
<line x1="295.3" y1="75.4" x2="297.5" y2="72.4" class="b"/>
<circle cx="268.4" cy="138.5" r="8.5" fill="url(#gS)"/>
<line x1="242.1" y1="110.8" x2="239.7" y2="107.3" class="b"/>
<line x1="256.9" y1="127.9" x2="260.0" y2="130.8" class="b"/>
<line x1="375.5" y1="256.1" x2="371.7" y2="262.9" class="b"/>
<line x1="261.0" y1="152.1" x2="257.2" y2="159.0" class="b"/>
<line x1="246.8" y1="232.8" x2="243.2" y2="235.8" class="b"/>
<line x1="350.5" y1="218.1" x2="348.1" y2="214.6" class="b"/>
<circle cx="193.8" cy="175.3" r="4.4" fill="url(#gNa)"/>
<line x1="370.8" y1="241.6" x2="374.0" y2="244.5" class="b"/>
<circle cx="249.2" cy="230.7" r="3.5" fill="url(#gP)"/>
<line x1="294.7" y1="225.9" x2="301.7" y2="228.6" class="b"/>
<circle cx="305.3" cy="230.0" r="4.4" fill="url(#gNa)"/>
<line x1="251.1" y1="229.0" x2="253.9" y2="226.6" class="b"/>
<line x1="409.0" y1="212.8" x2="411.5" y2="219.8" class="b"/>
<line x1="288.2" y1="128.1" x2="294.5" y2="124.7" class="b"/>
<line x1="242.5" y1="276.6" x2="246.3" y2="283.1" class="b"/>
<line x1="243.2" y1="235.8" x2="239.7" y2="238.8" class="b"/>
<line x1="313.9" y1="235.5" x2="308.2" y2="231.9" class="b"/>
<line x1="244.4" y1="114.2" x2="242.1" y2="110.8" class="b"/>
<line x1="392.6" y1="242.2" x2="398.9" y2="238.9" class="b"/>
<circle cx="344.2" cy="208.8" r="8.5" fill="url(#gS)"/>
<line x1="346.6" y1="203.0" x2="349.1" y2="197.1" class="b"/>
<line x1="253.7" y1="125.0" x2="256.9" y2="127.9" class="b"/>
<line x1="198.0" y1="181.2" x2="195.3" y2="177.3" class="b"/>
<line x1="310.4" y1="128.2" x2="306.5" y2="122.3" class="b"/>
<line x1="311.3" y1="169.8" x2="296.3" y2="181.2" class="e"/>
<line x1="403.2" y1="88.2" x2="405.7" y2="95.2" class="b"/>
<line x1="300.4" y1="180.0" x2="302.6" y2="177.1" class="b"/>
<line x1="406.1" y1="186.2" x2="408.3" y2="183.2" class="b"/>
<circle cx="379.2" cy="249.3" r="8.5" fill="url(#gS)"/>
<line x1="352.8" y1="221.6" x2="350.5" y2="218.1" class="b"/>
<line x1="300.8" y1="109.0" x2="303.3" y2="116.0" class="b"/>
<line x1="221.1" y1="246.4" x2="215.4" y2="242.7" class="b"/>
<line x1="367.7" y1="238.7" x2="370.8" y2="241.6" class="b"/>
<line x1="371.7" y1="262.9" x2="368.0" y2="269.8" class="b"/>
<line x1="257.2" y1="159.0" x2="253.4" y2="165.9" class="b"/>
<circle cx="304.6" cy="286.1" r="4.4" fill="url(#gNa)"/>
<line x1="208.9" y1="128.4" x2="203.2" y2="124.7" class="b"/>
<line x1="238.6" y1="270.1" x2="242.5" y2="276.6" class="b"/>
<circle cx="400.8" cy="81.6" r="8.5" fill="url(#gS)"/>
<line x1="239.7" y1="238.8" x2="236.2" y2="241.9" class="b"/>
<circle cx="248.5" cy="286.8" r="4.4" fill="url(#gNa)"/>
<line x1="310.0" y1="168.9" x2="306.0" y2="173.2" class="b"/>
<line x1="238.3" y1="86.3" x2="240.8" y2="80.4" class="b"/>
<line x1="294.5" y1="124.7" x2="300.9" y2="121.3" class="b"/>
<line x1="244.0" y1="185.1" x2="246.5" y2="179.2" class="b"/>
<line x1="246.8" y1="117.7" x2="244.4" y2="114.2" class="b"/>
<line x1="253.9" y1="226.6" x2="256.6" y2="224.1" class="b"/>
<line x1="250.6" y1="122.1" x2="253.7" y2="125.0" class="b"/>
<line x1="287.7" y1="223.2" x2="294.7" y2="225.9" class="b"/>
<line x1="398.9" y1="238.9" x2="405.3" y2="235.5" class="b"/>
<line x1="297.6" y1="282.3" x2="302.2" y2="284.8" class="b"/>
<line x1="234.8" y1="263.6" x2="238.6" y2="270.1" class="b"/>
<line x1="335.9" y1="102.3" x2="329.0" y2="106.1" class="b"/>
<line x1="355.2" y1="225.0" x2="352.8" y2="221.6" class="b"/>
<line x1="364.5" y1="235.8" x2="367.7" y2="238.7" class="b"/>
<line x1="257.0" y1="282.8" x2="251.3" y2="285.5" class="b"/>
<line x1="422.1" y1="280.6" x2="407.1" y2="292.1" class="e"/>
<line x1="236.2" y1="241.9" x2="232.6" y2="244.9" class="b"/>
<line x1="329.0" y1="106.1" x2="322.1" y2="109.8" class="b"/>
<line x1="297.5" y1="72.4" x2="299.7" y2="69.5" class="b"/>
<line x1="411.5" y1="219.8" x2="414.1" y2="226.8" class="b"/>
<line x1="403.1" y1="78.6" x2="405.3" y2="75.6" class="b"/>
<line x1="322.1" y1="109.8" x2="315.3" y2="113.5" class="b"/>
<line x1="368.0" y1="269.8" x2="364.2" y2="276.7" class="b"/>
<line x1="253.4" y1="165.9" x2="249.7" y2="172.7" class="b"/>
<line x1="319.7" y1="239.2" x2="313.9" y2="235.5" class="b"/>
<line x1="315.3" y1="113.5" x2="308.4" y2="117.3" class="b"/>
<line x1="405.7" y1="95.2" x2="408.2" y2="102.2" class="b"/>
<line x1="230.9" y1="257.1" x2="234.8" y2="263.6" class="b"/>
<line x1="349.1" y1="197.1" x2="351.5" y2="191.2" class="b"/>
<line x1="405.3" y1="235.5" x2="411.7" y2="232.1" class="b"/>
<line x1="256.6" y1="224.1" x2="259.4" y2="221.7" class="b"/>
<line x1="357.6" y1="228.5" x2="355.2" y2="225.0" class="b"/>
<line x1="361.4" y1="232.9" x2="364.5" y2="235.8" class="b"/>
<line x1="214.6" y1="132.1" x2="208.9" y2="128.4" class="b"/>
<line x1="200.8" y1="185.0" x2="198.0" y2="181.2" class="b"/>
<line x1="280.7" y1="220.5" x2="287.7" y2="223.2" class="b"/>
<line x1="408.3" y1="183.2" x2="410.4" y2="180.3" class="b"/>
<line x1="385.4" y1="135.0" x2="391.8" y2="131.7" class="b"/>
<line x1="240.8" y1="80.4" x2="243.2" y2="74.6" class="b"/>
<line x1="364.2" y1="276.7" x2="360.4" y2="283.5" class="b"/>
<line x1="374.7" y1="145.5" x2="371.0" y2="152.4" class="b"/>
<line x1="246.0" y1="122.2" x2="242.5" y2="125.3" class="b"/>
<line x1="349.7" y1="107.5" x2="347.3" y2="104.0" class="b"/>
<circle cx="193.0" cy="64.7" r="4.4" fill="url(#gNa)"/>
<line x1="370.0" y1="131.0" x2="373.2" y2="133.9" class="b"/>
<line x1="293.1" y1="279.8" x2="297.6" y2="282.3" class="b"/>
<circle cx="248.4" cy="120.1" r="3.5" fill="url(#gP)"/>
<line x1="259.4" y1="221.7" x2="262.1" y2="219.2" class="b"/>
<line x1="293.9" y1="115.3" x2="300.9" y2="118.0" class="b"/>
<circle cx="304.5" cy="119.4" r="4.4" fill="url(#gNa)"/>
<line x1="262.6" y1="280.2" x2="257.0" y2="282.8" class="b"/>
<line x1="253.0" y1="187.0" x2="249.6" y2="180.1" class="b"/>
<line x1="325.4" y1="242.9" x2="319.7" y2="239.2" class="b"/>
<line x1="250.3" y1="118.4" x2="253.1" y2="116.0" class="b"/>
<line x1="408.2" y1="102.2" x2="410.8" y2="109.2" class="b"/>
<line x1="241.7" y1="166.1" x2="245.5" y2="172.5" class="b"/>
<line x1="242.5" y1="125.3" x2="238.9" y2="128.3" class="b"/>
<line x1="313.2" y1="125.0" x2="307.4" y2="121.3" class="b"/>
<line x1="391.8" y1="131.7" x2="398.2" y2="128.3" class="b"/>
<circle cx="343.4" cy="98.2" r="8.5" fill="url(#gS)"/>
<line x1="345.8" y1="92.4" x2="348.3" y2="86.5" class="b"/>
<line x1="273.7" y1="217.8" x2="280.7" y2="220.5" class="b"/>
<line x1="197.2" y1="70.6" x2="194.5" y2="66.8" class="b"/>
<line x1="310.5" y1="59.3" x2="295.5" y2="70.7" class="e"/>
<line x1="299.7" y1="69.5" x2="301.9" y2="66.5" class="b"/>
<line x1="351.5" y1="191.2" x2="354.0" y2="185.4" class="b"/>
<line x1="405.3" y1="75.6" x2="407.5" y2="72.7" class="b"/>
<circle cx="378.4" cy="138.7" r="8.5" fill="url(#gS)"/>
<line x1="352.1" y1="111.0" x2="349.7" y2="107.5" class="b"/>
<line x1="256.3" y1="193.9" x2="253.0" y2="187.0" class="b"/>
<line x1="220.3" y1="135.8" x2="214.6" y2="132.1" class="b"/>
<line x1="366.9" y1="128.1" x2="370.0" y2="131.0" class="b"/>
<line x1="371.0" y1="152.4" x2="367.2" y2="159.2" class="b"/>
<line x1="356.8" y1="233.0" x2="353.2" y2="236.1" class="b"/>
<circle cx="303.8" cy="175.5" r="4.4" fill="url(#gNa)"/>
<line x1="237.1" y1="181.8" x2="244.2" y2="178.1" class="b"/>
<line x1="237.9" y1="159.6" x2="241.7" y2="166.1" class="b"/>
<line x1="238.9" y1="128.3" x2="235.4" y2="131.3" class="b"/>
<circle cx="247.7" cy="176.2" r="4.4" fill="url(#gNa)"/>
<circle cx="359.2" cy="230.9" r="3.5" fill="url(#gP)"/>
<line x1="259.7" y1="200.7" x2="256.3" y2="193.9" class="b"/>
<line x1="404.7" y1="226.1" x2="411.7" y2="228.8" class="b"/>
<line x1="203.5" y1="188.8" x2="200.8" y2="185.0" class="b"/>
<circle cx="415.3" cy="230.2" r="4.4" fill="url(#gNa)"/>
<line x1="243.2" y1="74.6" x2="245.7" y2="68.7" class="b"/>
<line x1="253.1" y1="116.0" x2="255.8" y2="113.6" class="b"/>
<line x1="361.1" y1="229.2" x2="363.9" y2="226.8" class="b"/>
<line x1="286.9" y1="112.6" x2="293.9" y2="115.3" class="b"/>
<line x1="398.2" y1="128.3" x2="404.5" y2="124.9" class="b"/>
<line x1="352.5" y1="276.9" x2="356.3" y2="283.3" class="b"/>
<line x1="353.2" y1="236.1" x2="349.7" y2="239.1" class="b"/>
<line x1="296.9" y1="171.8" x2="301.4" y2="174.2" class="b"/>
<line x1="234.0" y1="153.1" x2="237.9" y2="159.6" class="b"/>
<line x1="354.4" y1="114.5" x2="352.1" y2="111.0" class="b"/>
<line x1="363.7" y1="125.2" x2="366.9" y2="128.1" class="b"/>
<line x1="256.2" y1="172.3" x2="250.5" y2="174.9" class="b"/>
<line x1="308.0" y1="181.4" x2="305.3" y2="177.6" class="b"/>
<line x1="263.0" y1="207.6" x2="259.7" y2="200.7" class="b"/>
<line x1="421.3" y1="170.1" x2="406.3" y2="181.5" class="e"/>
<line x1="235.4" y1="131.3" x2="231.8" y2="134.4" class="b"/>
<line x1="410.4" y1="180.3" x2="412.6" y2="177.3" class="b"/>
<line x1="219.9" y1="247.5" x2="212.8" y2="244.8" class="b"/>
<line x1="410.8" y1="109.2" x2="413.3" y2="116.2" class="b"/>
<line x1="331.1" y1="246.6" x2="325.4" y2="242.9" class="b"/>
<line x1="367.2" y1="159.2" x2="363.4" y2="166.1" class="b"/>
<circle cx="414.6" cy="286.3" r="4.4" fill="url(#gNa)"/>
<line x1="288.6" y1="277.4" x2="293.1" y2="279.8" class="b"/>
<line x1="318.9" y1="128.7" x2="313.2" y2="125.0" class="b"/>
<line x1="348.6" y1="270.4" x2="352.5" y2="276.9" class="b"/>
<line x1="268.3" y1="277.5" x2="262.6" y2="280.2" class="b"/>
<line x1="349.7" y1="239.1" x2="346.2" y2="242.1" class="b"/>
<line x1="230.0" y1="185.6" x2="237.1" y2="181.8" class="b"/>
<line x1="230.2" y1="146.6" x2="234.0" y2="153.1" class="b"/>
<circle cx="358.5" cy="287.0" r="4.4" fill="url(#gNa)"/>
<line x1="348.3" y1="86.5" x2="350.8" y2="80.7" class="b"/>
<circle cx="226.7" cy="250.0" r="8.5" fill="url(#gS)"/>
<line x1="404.5" y1="124.9" x2="410.9" y2="121.6" class="b"/>
<line x1="354.0" y1="185.4" x2="356.5" y2="179.5" class="b"/>
<line x1="255.8" y1="113.6" x2="258.6" y2="111.1" class="b"/>
<line x1="356.8" y1="118.0" x2="354.4" y2="114.5" class="b"/>
<line x1="363.9" y1="226.8" x2="366.6" y2="224.4" class="b"/>
<line x1="360.6" y1="122.4" x2="363.7" y2="125.2" class="b"/>
<line x1="397.7" y1="223.4" x2="404.7" y2="226.1" class="b"/>
<line x1="200.0" y1="74.4" x2="197.2" y2="70.6" class="b"/>
<line x1="407.6" y1="282.6" x2="412.2" y2="285.0" class="b"/>
<line x1="344.8" y1="263.9" x2="348.6" y2="270.4" class="b"/>
<line x1="279.9" y1="110.0" x2="286.9" y2="112.6" class="b"/>
<line x1="367.0" y1="283.1" x2="361.3" y2="285.7" class="b"/>
<line x1="346.2" y1="242.1" x2="342.6" y2="245.2" class="b"/>
<line x1="407.5" y1="72.7" x2="409.7" y2="69.7" class="b"/>
<line x1="363.4" y1="166.1" x2="359.7" y2="173.0" class="b"/>
<line x1="229.5" y1="247.5" x2="232.2" y2="245.0" class="b"/>
<line x1="212.8" y1="244.8" x2="205.6" y2="242.1" class="b"/>
<line x1="340.9" y1="257.4" x2="344.8" y2="263.9" class="b"/>
<line x1="206.2" y1="192.7" x2="203.5" y2="188.8" class="b"/>
<line x1="222.9" y1="189.3" x2="230.0" y2="185.6" class="b"/>
<line x1="292.3" y1="169.3" x2="296.9" y2="171.8" class="b"/>
<line x1="258.6" y1="111.1" x2="261.3" y2="108.7" class="b"/>
<line x1="366.6" y1="224.4" x2="369.4" y2="221.9" class="b"/>
<line x1="261.8" y1="169.6" x2="256.2" y2="172.3" class="b"/>
<line x1="252.2" y1="76.5" x2="248.9" y2="69.6" class="b"/>
<line x1="324.6" y1="132.4" x2="318.9" y2="128.7" class="b"/>
<line x1="310.8" y1="185.2" x2="308.0" y2="181.4" class="b"/>
<line x1="390.7" y1="220.8" x2="397.7" y2="223.4" class="b"/>
<line x1="272.9" y1="107.3" x2="279.9" y2="110.0" class="b"/>
<line x1="284.0" y1="274.9" x2="288.6" y2="277.4" class="b"/>
<line x1="350.8" y1="80.7" x2="353.2" y2="74.8" class="b"/>
<line x1="274.0" y1="274.9" x2="268.3" y2="277.5" class="b"/>
<line x1="255.6" y1="83.3" x2="252.2" y2="76.5" class="b"/>
<line x1="356.0" y1="122.5" x2="352.5" y2="125.5" class="b"/>
<circle cx="303.0" cy="65.0" r="4.4" fill="url(#gNa)"/>
<line x1="236.3" y1="71.3" x2="243.5" y2="67.5" class="b"/>
<circle cx="246.9" cy="65.7" r="4.4" fill="url(#gNa)"/>
<line x1="403.1" y1="280.1" x2="407.6" y2="282.6" class="b"/>
<circle cx="358.4" cy="120.4" r="3.5" fill="url(#gP)"/>
<line x1="258.9" y1="90.2" x2="255.6" y2="83.3" class="b"/>
<line x1="369.4" y1="221.9" x2="372.1" y2="219.5" class="b"/>
<line x1="403.9" y1="115.6" x2="410.9" y2="118.3" class="b"/>
<line x1="215.8" y1="193.1" x2="222.9" y2="189.3" class="b"/>
<line x1="202.7" y1="78.3" x2="200.0" y2="74.4" class="b"/>
<line x1="205.6" y1="242.1" x2="198.5" y2="239.4" class="b"/>
<circle cx="414.5" cy="119.7" r="4.4" fill="url(#gNa)"/>
<line x1="372.6" y1="280.4" x2="367.0" y2="283.1" class="b"/>
<line x1="363.0" y1="187.3" x2="359.6" y2="180.4" class="b"/>
<line x1="360.3" y1="118.7" x2="363.1" y2="116.3" class="b"/>
<line x1="351.7" y1="166.3" x2="355.5" y2="172.8" class="b"/>
<line x1="352.5" y1="125.5" x2="348.9" y2="128.5" class="b"/>
<line x1="272.1" y1="218.7" x2="277.9" y2="222.5" class="b"/>
<line x1="383.7" y1="218.1" x2="390.7" y2="220.8" class="b"/>
<circle cx="266.7" cy="215.1" r="8.5" fill="url(#gS)"/>
<line x1="307.2" y1="70.9" x2="304.5" y2="67.0" class="b"/>
<line x1="262.3" y1="97.1" x2="258.9" y2="90.2" class="b"/>
<line x1="420.5" y1="59.5" x2="405.5" y2="71.0" class="e"/>
<line x1="262.1" y1="219.1" x2="257.6" y2="222.9" class="b"/>
<line x1="409.7" y1="69.7" x2="411.9" y2="66.8" class="b"/>
<line x1="219.2" y1="136.9" x2="212.0" y2="134.2" class="b"/>
<line x1="366.3" y1="194.1" x2="363.0" y2="187.3" class="b"/>
<line x1="330.3" y1="136.1" x2="324.6" y2="132.4" class="b"/>
<line x1="232.2" y1="245.0" x2="234.9" y2="242.6" class="b"/>
<circle cx="413.8" cy="175.8" r="4.4" fill="url(#gNa)"/>
<line x1="347.1" y1="182.1" x2="354.2" y2="178.3" class="b"/>
<line x1="287.8" y1="166.8" x2="292.3" y2="169.3" class="b"/>
<line x1="347.9" y1="159.8" x2="351.7" y2="166.3" class="b"/>
<line x1="267.5" y1="167.0" x2="261.8" y2="169.6" class="b"/>
<line x1="348.9" y1="128.5" x2="345.4" y2="131.6" class="b"/>
<line x1="229.2" y1="75.0" x2="236.3" y2="71.3" class="b"/>
<circle cx="357.7" cy="176.5" r="4.4" fill="url(#gNa)"/>
<line x1="369.7" y1="201.0" x2="366.3" y2="194.1" class="b"/>
<circle cx="225.9" cy="139.5" r="8.5" fill="url(#gS)"/>
<line x1="313.5" y1="189.1" x2="310.8" y2="185.2" class="b"/>
<line x1="353.2" y1="74.8" x2="355.7" y2="68.9" class="b"/>
<line x1="363.1" y1="116.3" x2="365.8" y2="113.8" class="b"/>
<line x1="396.9" y1="112.9" x2="403.9" y2="115.6" class="b"/>
<line x1="406.9" y1="172.0" x2="411.4" y2="174.5" class="b"/>
<line x1="344.0" y1="153.3" x2="347.9" y2="159.8" class="b"/>
<line x1="198.5" y1="239.4" x2="191.3" y2="236.8" class="b"/>
<line x1="366.2" y1="172.5" x2="360.5" y2="175.2" class="b"/>
<line x1="373.0" y1="207.9" x2="369.7" y2="201.0" class="b"/>
<line x1="345.4" y1="131.6" x2="341.8" y2="134.6" class="b"/>
<line x1="329.9" y1="247.7" x2="322.8" y2="245.0" class="b"/>
<line x1="187.1" y1="291.6" x2="186.9" y2="263.9" class="e"/>
<line x1="187.1" y1="291.6" x2="214.6" y2="291.6" class="e"/>
<line x1="398.6" y1="277.6" x2="403.1" y2="280.1" class="b"/>
<line x1="228.7" y1="136.9" x2="231.4" y2="134.5" class="b"/>
<line x1="212.0" y1="134.2" x2="204.8" y2="131.6" class="b"/>
<line x1="378.3" y1="277.8" x2="372.6" y2="280.4" class="b"/>
<line x1="340.0" y1="185.8" x2="347.1" y2="182.1" class="b"/>
<line x1="340.2" y1="146.8" x2="344.0" y2="153.3" class="b"/>
<line x1="205.4" y1="82.1" x2="202.7" y2="78.3" class="b"/>
<line x1="204.9" y1="204.1" x2="201.2" y2="211.0" class="b"/>
<line x1="277.9" y1="222.5" x2="283.6" y2="226.3" class="b"/>
<line x1="222.1" y1="78.8" x2="229.2" y2="75.0" class="b"/>
<circle cx="336.7" cy="250.3" r="8.5" fill="url(#gS)"/>
<line x1="257.6" y1="222.9" x2="253.1" y2="226.7" class="b"/>
<line x1="201.2" y1="211.0" x2="197.4" y2="217.8" class="b"/>
<line x1="365.8" y1="113.8" x2="368.6" y2="111.4" class="b"/>
<line x1="310.0" y1="74.7" x2="307.2" y2="70.9" class="b"/>
<line x1="197.4" y1="217.8" x2="193.7" y2="224.7" class="b"/>
<line x1="389.9" y1="110.2" x2="396.9" y2="112.9" class="b"/>
<line x1="186.9" y1="263.9" x2="186.7" y2="236.3" class="e"/>
<line x1="193.7" y1="224.7" x2="189.9" y2="231.6" class="b"/>
<line x1="283.2" y1="164.4" x2="287.8" y2="166.8" class="b"/>
<line x1="273.2" y1="164.3" x2="267.5" y2="167.0" class="b"/>
<line x1="214.6" y1="291.6" x2="242.1" y2="291.7" class="e"/>
<line x1="234.9" y1="242.6" x2="237.6" y2="240.1" class="b"/>
<line x1="339.5" y1="247.7" x2="342.2" y2="245.3" class="b"/>
<line x1="322.8" y1="245.0" x2="315.6" y2="242.4" class="b"/>
<line x1="316.2" y1="192.9" x2="313.5" y2="189.1" class="b"/>
<line x1="332.9" y1="189.6" x2="340.0" y2="185.8" class="b"/>
<line x1="402.3" y1="169.5" x2="406.9" y2="172.0" class="b"/>
<line x1="368.6" y1="111.4" x2="371.3" y2="108.9" class="b"/>
<line x1="186.7" y1="236.3" x2="186.5" y2="208.6" class="e"/>
<line x1="215.0" y1="82.5" x2="222.1" y2="78.8" class="b"/>
<line x1="204.8" y1="131.6" x2="197.7" y2="128.9" class="b"/>
<line x1="371.8" y1="169.9" x2="366.2" y2="172.5" class="b"/>
<line x1="362.2" y1="76.7" x2="358.9" y2="69.8" class="b"/>
<line x1="199.5" y1="190.1" x2="203.1" y2="192.5" class="b"/>
<line x1="282.9" y1="265.3" x2="286.2" y2="258.8" class="b"/>
<line x1="271.4" y1="108.2" x2="277.1" y2="112.0" class="b"/>
<line x1="382.9" y1="107.5" x2="389.9" y2="110.2" class="b"/>
<circle cx="265.9" cy="104.6" r="8.5" fill="url(#gS)"/>
<line x1="394.0" y1="275.2" x2="398.6" y2="277.6" class="b"/>
<line x1="283.6" y1="226.3" x2="289.3" y2="230.1" class="b"/>
<line x1="261.3" y1="108.5" x2="256.8" y2="112.3" class="b"/>
<line x1="272.4" y1="276.0" x2="265.5" y2="279.7" class="b"/>
<line x1="384.0" y1="275.1" x2="378.3" y2="277.8" class="b"/>
<line x1="365.6" y1="83.6" x2="362.2" y2="76.7" class="b"/>
<line x1="253.1" y1="226.7" x2="248.6" y2="230.5" class="b"/>
<line x1="242.1" y1="291.7" x2="269.6" y2="291.7" class="e"/>
<line x1="231.4" y1="134.5" x2="234.1" y2="132.0" class="b"/>
<circle cx="413.0" cy="65.2" r="4.4" fill="url(#gNa)"/>
<line x1="346.3" y1="71.5" x2="353.5" y2="67.8" class="b"/>
<line x1="186.5" y1="208.6" x2="186.3" y2="181.0" class="e"/>
<circle cx="187.8" cy="235.4" r="4.4" fill="url(#gNa)"/>
<line x1="191.7" y1="245.8" x2="189.1" y2="239.0" class="b"/>
<line x1="286.8" y1="280.5" x2="284.0" y2="277.5" class="b"/>
<circle cx="356.9" cy="65.9" r="4.4" fill="url(#gNa)"/>
<line x1="195.9" y1="187.6" x2="199.5" y2="190.1" class="b"/>
<circle cx="209.0" cy="196.6" r="8.5" fill="url(#gS)"/>
<line x1="368.9" y1="90.4" x2="365.6" y2="83.6" class="b"/>
<line x1="214.7" y1="194.0" x2="220.3" y2="191.3" class="b"/>
<line x1="325.8" y1="193.3" x2="332.9" y2="189.6" class="b"/>
<line x1="312.7" y1="78.5" x2="310.0" y2="74.7" class="b"/>
<line x1="315.6" y1="242.4" x2="308.5" y2="239.7" class="b"/>
<line x1="286.2" y1="258.8" x2="289.4" y2="252.3" class="b"/>
<circle cx="187.1" cy="291.6" r="3.5" fill="url(#gP)"/>
<line x1="382.1" y1="219.0" x2="387.9" y2="222.8" class="b"/>
<line x1="197.7" y1="128.9" x2="190.5" y2="126.2" class="b"/>
<line x1="188.7" y1="289.6" x2="191.0" y2="286.7" class="b"/>
<circle cx="279.3" cy="272.4" r="8.5" fill="url(#gS)"/>
<circle cx="376.7" cy="215.4" r="8.5" fill="url(#gS)"/>
<line x1="372.3" y1="97.3" x2="368.9" y2="90.4" class="b"/>
<line x1="372.1" y1="219.3" x2="367.6" y2="223.1" class="b"/>
<line x1="265.5" y1="279.7" x2="258.5" y2="283.3" class="b"/>
<line x1="329.2" y1="137.2" x2="322.0" y2="134.5" class="b"/>
<line x1="186.3" y1="181.0" x2="186.1" y2="153.4" class="e"/>
<line x1="289.6" y1="283.6" x2="286.8" y2="280.5" class="b"/>
<line x1="269.6" y1="291.7" x2="297.1" y2="291.8" class="e"/>
<line x1="192.4" y1="185.1" x2="195.9" y2="187.6" class="b"/>
<line x1="186.3" y1="181.0" x2="213.8" y2="181.1" class="e"/>
<line x1="237.6" y1="240.1" x2="240.3" y2="237.7" class="b"/>
<line x1="342.2" y1="245.3" x2="344.9" y2="242.8" class="b"/>
<line x1="397.8" y1="167.1" x2="402.3" y2="169.5" class="b"/>
<line x1="377.5" y1="167.2" x2="371.8" y2="169.9" class="b"/>
<line x1="339.2" y1="75.3" x2="346.3" y2="71.5" class="b"/>
<line x1="204.2" y1="93.6" x2="200.4" y2="100.4" class="b"/>
<line x1="277.1" y1="112.0" x2="282.8" y2="115.7" class="b"/>
<line x1="289.4" y1="252.3" x2="292.7" y2="245.8" class="b"/>
<circle cx="335.9" cy="139.7" r="8.5" fill="url(#gS)"/>
<line x1="289.3" y1="230.1" x2="295.0" y2="233.8" class="b"/>
<line x1="194.2" y1="252.7" x2="191.7" y2="245.8" class="b"/>
<line x1="256.8" y1="112.3" x2="252.3" y2="116.2" class="b"/>
<line x1="200.4" y1="100.4" x2="196.7" y2="107.3" class="b"/>
<line x1="248.6" y1="230.5" x2="244.1" y2="234.4" class="b"/>
<line x1="196.7" y1="107.3" x2="192.9" y2="114.1" class="b"/>
<line x1="186.1" y1="153.4" x2="185.9" y2="125.7" class="e"/>
<line x1="191.0" y1="286.7" x2="193.3" y2="283.8" class="b"/>
<line x1="308.5" y1="239.7" x2="301.3" y2="237.0" class="b"/>
<line x1="188.8" y1="182.7" x2="192.4" y2="185.1" class="b"/>
<line x1="192.9" y1="114.1" x2="189.2" y2="121.0" class="b"/>
<line x1="258.5" y1="283.3" x2="251.5" y2="287.0" class="b"/>
<line x1="292.4" y1="286.6" x2="289.6" y2="283.6" class="b"/>
<line x1="297.1" y1="291.8" x2="296.9" y2="264.2" class="e"/>
<line x1="220.3" y1="191.3" x2="226.0" y2="188.7" class="b"/>
<line x1="297.1" y1="291.8" x2="324.6" y2="291.9" class="e"/>
<line x1="213.8" y1="181.1" x2="241.3" y2="181.1" class="e"/>
<line x1="234.1" y1="132.0" x2="236.8" y2="129.6" class="b"/>
<line x1="338.7" y1="137.2" x2="341.4" y2="134.7" class="b"/>
<line x1="292.7" y1="245.8" x2="296.0" y2="239.4" class="b"/>
<line x1="322.0" y1="134.5" x2="314.8" y2="131.8" class="b"/>
<line x1="315.4" y1="82.4" x2="312.7" y2="78.5" class="b"/>
<line x1="314.9" y1="204.4" x2="311.2" y2="211.2" class="b"/>
<line x1="387.9" y1="222.8" x2="393.6" y2="226.5" class="b"/>
<line x1="332.1" y1="79.0" x2="339.2" y2="75.3" class="b"/>
<line x1="367.6" y1="223.1" x2="363.1" y2="227.0" class="b"/>
<line x1="311.2" y1="211.2" x2="307.4" y2="218.1" class="b"/>
<line x1="185.9" y1="125.7" x2="185.7" y2="98.1" class="e"/>
<line x1="198.7" y1="79.5" x2="202.3" y2="82.0" class="b"/>
<line x1="307.4" y1="218.1" x2="303.7" y2="224.9" class="b"/>
<line x1="196.8" y1="259.6" x2="194.2" y2="252.7" class="b"/>
<line x1="295.2" y1="289.7" x2="292.4" y2="286.6" class="b"/>
<line x1="193.3" y1="283.8" x2="195.7" y2="280.9" class="b"/>
<line x1="296.9" y1="264.2" x2="296.7" y2="236.5" class="e"/>
<line x1="282.1" y1="154.7" x2="285.4" y2="148.2" class="b"/>
<line x1="251.5" y1="287.0" x2="244.6" y2="290.6" class="b"/>
<line x1="303.7" y1="224.9" x2="299.9" y2="231.8" class="b"/>
<line x1="393.2" y1="164.6" x2="397.8" y2="167.1" class="b"/>
<line x1="282.8" y1="115.7" x2="288.5" y2="119.5" class="b"/>
<line x1="271.7" y1="165.5" x2="264.7" y2="169.1" class="b"/>
<line x1="383.2" y1="164.6" x2="377.5" y2="167.2" class="b"/>
<line x1="252.3" y1="116.2" x2="247.8" y2="120.0" class="b"/>
<line x1="324.6" y1="291.9" x2="352.1" y2="291.9" class="e"/>
<line x1="241.3" y1="181.1" x2="268.8" y2="181.2" class="e"/>
<line x1="344.9" y1="242.8" x2="347.6" y2="240.4" class="b"/>
<line x1="185.7" y1="98.1" x2="185.5" y2="70.5" class="e"/>
<circle cx="187.0" cy="124.9" r="4.4" fill="url(#gNa)"/>
<line x1="190.9" y1="135.3" x2="188.3" y2="128.4" class="b"/>
<line x1="286.0" y1="170.0" x2="283.2" y2="166.9" class="b"/>
<line x1="195.2" y1="77.1" x2="198.7" y2="79.5" class="b"/>
<circle cx="208.3" cy="86.1" r="8.5" fill="url(#gS)"/>
<line x1="213.9" y1="83.4" x2="219.5" y2="80.8" class="b"/>
<line x1="296.7" y1="236.5" x2="296.5" y2="208.9" class="e"/>
<line x1="325.0" y1="82.8" x2="332.1" y2="79.0" class="b"/>
<line x1="314.8" y1="131.8" x2="307.7" y2="129.1" class="b"/>
<line x1="285.4" y1="148.2" x2="288.7" y2="141.8" class="b"/>
<line x1="226.0" y1="188.7" x2="231.7" y2="186.0" class="b"/>
<line x1="309.5" y1="190.3" x2="313.1" y2="192.8" class="b"/>
<circle cx="186.3" cy="181.0" r="3.5" fill="url(#gP)"/>
<line x1="195.7" y1="280.9" x2="198.0" y2="278.1" class="b"/>
<line x1="392.9" y1="265.5" x2="396.2" y2="259.0" class="b"/>
<line x1="381.4" y1="108.4" x2="387.1" y2="112.2" class="b"/>
<line x1="187.9" y1="179.0" x2="190.2" y2="176.1" class="b"/>
<circle cx="278.6" cy="161.8" r="8.5" fill="url(#gS)"/>
<circle cx="375.9" cy="104.8" r="8.5" fill="url(#gS)"/>
<line x1="393.6" y1="226.5" x2="399.3" y2="230.3" class="b"/>
<line x1="199.3" y1="266.5" x2="196.8" y2="259.6" class="b"/>
<line x1="371.3" y1="108.8" x2="366.8" y2="112.6" class="b"/>
<line x1="264.7" y1="169.1" x2="257.7" y2="172.8" class="b"/>
<line x1="382.4" y1="276.3" x2="375.5" y2="279.9" class="b"/>
<line x1="363.1" y1="227.0" x2="358.6" y2="230.8" class="b"/>
<line x1="352.1" y1="291.9" x2="379.6" y2="292.0" class="e"/>
<line x1="288.8" y1="173.0" x2="286.0" y2="170.0" class="b"/>
<line x1="268.8" y1="181.2" x2="296.3" y2="181.2" class="e"/>
<line x1="191.6" y1="74.6" x2="195.2" y2="77.1" class="b"/>
<line x1="185.5" y1="70.5" x2="213.0" y2="70.5" class="e"/>
<line x1="236.8" y1="129.6" x2="239.5" y2="127.2" class="b"/>
<line x1="341.4" y1="134.7" x2="344.1" y2="132.3" class="b"/>
<line x1="230.2" y1="287.2" x2="237.1" y2="290.6" class="b"/>
<line x1="296.5" y1="208.9" x2="296.3" y2="181.2" class="e"/>
<circle cx="297.8" cy="235.7" r="4.4" fill="url(#gNa)"/>
<line x1="301.7" y1="246.1" x2="299.1" y2="239.2" class="b"/>
<line x1="396.8" y1="280.8" x2="394.0" y2="277.7" class="b"/>
<line x1="305.9" y1="187.9" x2="309.5" y2="190.3" class="b"/>
<circle cx="319.0" cy="196.9" r="8.5" fill="url(#gS)"/>
<line x1="292.0" y1="226.8" x2="295.8" y2="232.7" class="b"/>
<circle cx="241.7" cy="236.4" r="4.4" fill="url(#gNa)"/>
<line x1="288.7" y1="141.8" x2="291.9" y2="135.3" class="b"/>
<line x1="324.7" y1="194.2" x2="330.3" y2="191.6" class="b"/>
<line x1="288.5" y1="119.5" x2="294.2" y2="123.3" class="b"/>
<line x1="193.4" y1="142.2" x2="190.9" y2="135.3" class="b"/>
<line x1="223.3" y1="283.8" x2="230.2" y2="287.2" class="b"/>
<line x1="396.2" y1="259.0" x2="399.4" y2="252.6" class="b"/>
<line x1="247.8" y1="120.0" x2="243.3" y2="123.8" class="b"/>
<circle cx="297.1" cy="291.8" r="3.5" fill="url(#gP)"/>
<line x1="190.2" y1="176.1" x2="192.6" y2="173.3" class="b"/>
<line x1="307.7" y1="129.1" x2="300.5" y2="126.5" class="b"/>
<line x1="298.7" y1="289.8" x2="301.0" y2="286.9" class="b"/>
<circle cx="389.3" cy="272.6" r="8.5" fill="url(#gS)"/>
<line x1="188.0" y1="72.1" x2="191.6" y2="74.6" class="b"/>
<line x1="216.4" y1="280.4" x2="223.3" y2="283.8" class="b"/>
<line x1="257.7" y1="172.8" x2="250.8" y2="176.4" class="b"/>
<line x1="375.5" y1="279.9" x2="368.5" y2="283.6" class="b"/>
<line x1="291.6" y1="176.1" x2="288.8" y2="173.0" class="b"/>
<line x1="235.5" y1="231.9" x2="239.5" y2="234.8" class="b"/>
<line x1="296.3" y1="181.2" x2="296.1" y2="153.6" class="e"/>
<line x1="245.2" y1="243.0" x2="242.9" y2="238.7" class="b"/>
<circle cx="241.0" cy="292.5" r="4.4" fill="url(#gNa)"/>
<line x1="219.5" y1="80.8" x2="225.2" y2="78.1" class="b"/>
<line x1="399.6" y1="283.8" x2="396.8" y2="280.8" class="b"/>
<line x1="379.6" y1="292.0" x2="407.1" y2="292.1" class="e"/>
<line x1="302.4" y1="185.4" x2="305.9" y2="187.9" class="b"/>
<line x1="296.3" y1="181.2" x2="323.8" y2="181.3" class="e"/>
<line x1="347.6" y1="240.4" x2="350.3" y2="238.0" class="b"/>
<line x1="213.0" y1="70.5" x2="240.5" y2="70.6" class="e"/>
<line x1="209.4" y1="277.0" x2="216.4" y2="280.4" class="b"/>
<line x1="291.9" y1="135.3" x2="295.2" y2="128.8" class="b"/>
<line x1="231.7" y1="186.0" x2="237.3" y2="183.3" class="b"/>
<line x1="314.2" y1="93.8" x2="310.4" y2="100.7" class="b"/>
<line x1="387.1" y1="112.2" x2="392.8" y2="116.0" class="b"/>
<line x1="399.4" y1="252.6" x2="402.7" y2="246.1" class="b"/>
<line x1="399.3" y1="230.3" x2="405.0" y2="234.1" class="b"/>
<line x1="304.2" y1="253.0" x2="301.7" y2="246.1" class="b"/>
<line x1="366.8" y1="112.6" x2="362.3" y2="116.4" class="b"/>
<line x1="244.6" y1="283.7" x2="242.2" y2="289.6" class="b"/>
<line x1="310.4" y1="100.7" x2="306.7" y2="107.5" class="b"/>
<line x1="358.6" y1="230.8" x2="354.1" y2="234.6" class="b"/>
<line x1="306.7" y1="107.5" x2="302.9" y2="114.4" class="b"/>
<line x1="288.1" y1="220.9" x2="292.0" y2="226.8" class="b"/>
<line x1="196.0" y1="149.0" x2="193.4" y2="142.2" class="b"/>
<line x1="294.4" y1="179.2" x2="291.6" y2="176.1" class="b"/>
<line x1="192.6" y1="173.3" x2="194.9" y2="170.4" class="b"/>
<line x1="296.1" y1="153.6" x2="295.9" y2="126.0" class="e"/>
<line x1="301.0" y1="286.9" x2="303.3" y2="284.1" class="b"/>
<line x1="298.8" y1="182.9" x2="302.4" y2="185.4" class="b"/>
<line x1="250.8" y1="176.4" x2="243.8" y2="180.1" class="b"/>
<line x1="302.9" y1="114.4" x2="299.2" y2="121.3" class="b"/>
<line x1="368.5" y1="283.6" x2="361.5" y2="287.2" class="b"/>
<line x1="402.4" y1="286.9" x2="399.6" y2="283.8" class="b"/>
<line x1="407.1" y1="292.1" x2="406.9" y2="264.4" class="e"/>
<line x1="330.3" y1="191.6" x2="336.0" y2="188.9" class="b"/>
<line x1="323.8" y1="181.3" x2="351.3" y2="181.4" class="e"/>
<line x1="240.5" y1="70.6" x2="268.0" y2="70.6" class="e"/>
<line x1="344.1" y1="132.3" x2="346.8" y2="129.8" class="b"/>
<line x1="402.7" y1="246.1" x2="406.0" y2="239.6" class="b"/>
<line x1="295.9" y1="126.0" x2="295.7" y2="98.3" class="e"/>
<line x1="225.2" y1="78.1" x2="230.9" y2="75.4" class="b"/>
<line x1="308.7" y1="79.8" x2="312.3" y2="82.2" class="b"/>
<circle cx="185.5" cy="70.5" r="3.5" fill="url(#gP)"/>
<line x1="194.9" y1="170.4" x2="197.2" y2="167.5" class="b"/>
<line x1="306.8" y1="259.8" x2="304.2" y2="253.0" class="b"/>
<line x1="405.2" y1="290.0" x2="402.4" y2="286.9" class="b"/>
<line x1="303.3" y1="284.1" x2="305.7" y2="281.2" class="b"/>
<line x1="406.9" y1="264.4" x2="406.7" y2="236.8" class="e"/>
<line x1="231.4" y1="228.9" x2="235.5" y2="231.9" class="b"/>
<line x1="247.4" y1="247.4" x2="245.2" y2="243.0" class="b"/>
<line x1="392.1" y1="155.0" x2="395.4" y2="148.5" class="b"/>
<line x1="361.5" y1="287.2" x2="354.6" y2="290.9" class="b"/>
<line x1="392.8" y1="116.0" x2="398.5" y2="119.8" class="b"/>
<line x1="198.6" y1="155.9" x2="196.0" y2="149.0" class="b"/>
<line x1="381.7" y1="165.7" x2="374.7" y2="169.4" class="b"/>
<line x1="362.3" y1="116.4" x2="357.8" y2="120.2" class="b"/>
<line x1="284.3" y1="215.0" x2="288.1" y2="220.9" class="b"/>
<line x1="351.3" y1="181.4" x2="378.8" y2="181.4" class="e"/>
<line x1="268.0" y1="70.6" x2="295.5" y2="70.7" class="e"/>
<line x1="229.4" y1="176.6" x2="236.3" y2="180.0" class="b"/>
<line x1="247.1" y1="277.8" x2="244.6" y2="283.7" class="b"/>
<line x1="295.7" y1="98.3" x2="295.5" y2="70.7" class="e"/>
<circle cx="297.0" cy="125.1" r="4.4" fill="url(#gNa)"/>
<line x1="300.9" y1="135.5" x2="298.3" y2="128.7" class="b"/>
<line x1="396.0" y1="170.2" x2="393.2" y2="167.2" class="b"/>
<line x1="294.2" y1="183.6" x2="291.1" y2="187.1" class="b"/>
<line x1="305.2" y1="77.3" x2="308.7" y2="79.8" class="b"/>
<circle cx="318.3" cy="86.3" r="8.5" fill="url(#gS)"/>
<line x1="291.2" y1="116.2" x2="295.0" y2="122.1" class="b"/>
<circle cx="240.9" cy="125.9" r="4.4" fill="url(#gNa)"/>
<line x1="323.9" y1="83.7" x2="329.5" y2="81.0" class="b"/>
<line x1="406.7" y1="236.8" x2="406.5" y2="209.1" class="e"/>
<line x1="250.3" y1="187.9" x2="243.9" y2="184.1" class="b"/>
<line x1="222.5" y1="173.2" x2="229.4" y2="176.6" class="b"/>
<line x1="395.4" y1="148.5" x2="398.7" y2="142.0" class="b"/>
<line x1="336.0" y1="188.9" x2="341.7" y2="186.2" class="b"/>
<circle cx="296.3" cy="181.2" r="3.5" fill="url(#gP)"/>
<line x1="305.7" y1="281.2" x2="308.0" y2="278.3" class="b"/>
<line x1="297.9" y1="179.3" x2="300.2" y2="176.4" class="b"/>
<circle cx="388.6" cy="162.1" r="8.5" fill="url(#gS)"/>
<line x1="198.1" y1="267.7" x2="194.1" y2="261.8" class="b"/>
<line x1="215.6" y1="169.8" x2="222.5" y2="173.2" class="b"/>
<line x1="309.3" y1="266.7" x2="306.8" y2="259.8" class="b"/>
<line x1="374.7" y1="169.4" x2="367.7" y2="173.0" class="b"/>
<line x1="234.5" y1="192.4" x2="238.3" y2="185.4" class="b"/>
<line x1="291.1" y1="187.1" x2="288.0" y2="190.6" class="b"/>
<line x1="234.7" y1="121.3" x2="238.8" y2="124.3" class="b"/>
<line x1="244.4" y1="132.5" x2="242.1" y2="128.2" class="b"/>
<circle cx="201.9" cy="273.3" r="8.5" fill="url(#gS)"/>
<circle cx="240.2" cy="182.0" r="4.4" fill="url(#gNa)"/>
<line x1="398.8" y1="173.3" x2="396.0" y2="170.2" class="b"/>
<line x1="378.8" y1="181.4" x2="406.3" y2="181.5" class="e"/>
<line x1="301.6" y1="74.8" x2="305.2" y2="77.3" class="b"/>
<line x1="197.7" y1="277.7" x2="193.7" y2="282.0" class="b"/>
<line x1="256.7" y1="191.6" x2="250.3" y2="187.9" class="b"/>
<line x1="295.5" y1="70.7" x2="323.0" y2="70.8" class="e"/>
<line x1="346.8" y1="129.8" x2="349.5" y2="127.4" class="b"/>
<line x1="340.2" y1="287.4" x2="347.1" y2="290.8" class="b"/>
<line x1="208.7" y1="166.4" x2="215.6" y2="169.8" class="b"/>
<line x1="406.5" y1="209.1" x2="406.3" y2="181.5" class="e"/>
<circle cx="407.8" cy="235.9" r="4.4" fill="url(#gNa)"/>
<line x1="230.9" y1="75.4" x2="236.5" y2="72.8" class="b"/>
<line x1="402.0" y1="227.0" x2="405.8" y2="232.9" class="b"/>
<circle cx="351.7" cy="236.7" r="4.4" fill="url(#gNa)"/>
<line x1="280.4" y1="209.2" x2="284.3" y2="215.0" class="b"/>
<line x1="398.7" y1="142.0" x2="401.9" y2="135.5" class="b"/>
<line x1="398.5" y1="119.8" x2="404.2" y2="123.5" class="b"/>
<line x1="303.4" y1="142.4" x2="300.9" y2="135.5" class="b"/>
<line x1="227.4" y1="226.0" x2="231.4" y2="228.9" class="b"/>
<line x1="333.3" y1="284.0" x2="340.2" y2="287.4" class="b"/>
<line x1="243.9" y1="173.2" x2="241.4" y2="179.1" class="b"/>
<line x1="288.0" y1="190.6" x2="284.9" y2="194.1" class="b"/>
<line x1="357.8" y1="120.2" x2="353.3" y2="124.1" class="b"/>
<line x1="249.7" y1="251.7" x2="247.4" y2="247.4" class="b"/>
<circle cx="407.1" cy="292.1" r="3.5" fill="url(#gP)"/>
<line x1="287.3" y1="110.4" x2="291.2" y2="116.2" class="b"/>
<line x1="263.1" y1="195.4" x2="256.7" y2="191.6" class="b"/>
<line x1="300.2" y1="176.4" x2="302.6" y2="173.5" class="b"/>
<line x1="298.0" y1="72.4" x2="301.6" y2="74.8" class="b"/>
<line x1="326.4" y1="280.6" x2="333.3" y2="284.0" class="b"/>
<line x1="367.7" y1="173.0" x2="360.8" y2="176.7" class="b"/>
<line x1="401.6" y1="176.3" x2="398.8" y2="173.3" class="b"/>
<line x1="249.5" y1="272.0" x2="247.1" y2="277.8" class="b"/>
<line x1="345.5" y1="232.1" x2="349.5" y2="235.1" class="b"/>
<line x1="406.3" y1="181.5" x2="406.1" y2="153.9" class="e"/>
<line x1="355.2" y1="243.3" x2="352.9" y2="239.0" class="b"/>
<circle cx="351.0" cy="292.8" r="4.4" fill="url(#gNa)"/>
<line x1="329.5" y1="81.0" x2="335.2" y2="78.4" class="b"/>
<line x1="230.6" y1="199.4" x2="234.5" y2="192.4" class="b"/>
<line x1="284.9" y1="194.1" x2="281.8" y2="197.5" class="b"/>
<line x1="323.0" y1="70.8" x2="350.5" y2="70.8" class="e"/>
<line x1="319.4" y1="277.2" x2="326.4" y2="280.6" class="b"/>
<line x1="401.9" y1="135.5" x2="405.2" y2="129.1" class="b"/>
<line x1="341.7" y1="186.2" x2="347.3" y2="183.6" class="b"/>
<line x1="194.1" y1="261.8" x2="190.2" y2="255.9" class="b"/>
<line x1="269.5" y1="199.2" x2="263.1" y2="195.4" class="b"/>
<line x1="354.6" y1="284.0" x2="352.2" y2="289.9" class="b"/>
<line x1="193.7" y1="282.0" x2="189.7" y2="286.3" class="b"/>
<line x1="398.1" y1="221.2" x2="402.0" y2="227.0" class="b"/>
<line x1="306.0" y1="149.3" x2="303.4" y2="142.4" class="b"/>
<line x1="404.4" y1="179.4" x2="401.6" y2="176.3" class="b"/>
<line x1="302.6" y1="173.5" x2="304.9" y2="170.6" class="b"/>
<line x1="406.1" y1="153.9" x2="405.9" y2="126.2" class="e"/>
<line x1="230.7" y1="118.4" x2="234.7" y2="121.3" class="b"/>
<line x1="246.6" y1="136.8" x2="244.4" y2="132.5" class="b"/>
<line x1="360.8" y1="176.7" x2="353.8" y2="180.3" class="b"/>
<line x1="283.5" y1="104.5" x2="287.3" y2="110.4" class="b"/>
<line x1="350.5" y1="70.8" x2="378.0" y2="70.9" class="e"/>
<line x1="226.7" y1="206.4" x2="230.6" y2="199.4" class="b"/>
<line x1="246.3" y1="167.3" x2="243.9" y2="173.2" class="b"/>
<line x1="223.3" y1="223.0" x2="227.4" y2="226.0" class="b"/>
<line x1="251.9" y1="256.0" x2="249.7" y2="251.7" class="b"/>
<line x1="293.4" y1="73.1" x2="290.3" y2="76.6" class="b"/>
<line x1="405.9" y1="126.2" x2="405.7" y2="98.6" class="e"/>
<line x1="249.5" y1="77.3" x2="243.1" y2="73.6" class="b"/>
<line x1="251.9" y1="266.1" x2="249.5" y2="272.0" class="b"/>
<line x1="335.2" y1="78.4" x2="340.9" y2="75.7" class="b"/>
<circle cx="295.5" cy="70.7" r="3.5" fill="url(#gP)"/>
<line x1="304.9" y1="170.6" x2="307.2" y2="167.8" class="b"/>
<line x1="341.4" y1="229.2" x2="345.5" y2="232.1" class="b"/>
<line x1="357.4" y1="247.6" x2="355.2" y2="243.3" class="b"/>
<line x1="190.2" y1="255.9" x2="186.2" y2="250.0" class="b"/>
<line x1="197.3" y1="157.1" x2="193.4" y2="151.2" class="b"/>
<line x1="308.6" y1="156.2" x2="306.0" y2="149.3" class="b"/>
<line x1="233.7" y1="81.8" x2="237.5" y2="74.8" class="b"/>
<line x1="290.3" y1="76.6" x2="287.2" y2="80.0" class="b"/>
<line x1="394.3" y1="215.3" x2="398.1" y2="221.2" class="b"/>
<circle cx="201.1" cy="162.7" r="8.5" fill="url(#gS)"/>
<circle cx="239.4" cy="71.4" r="4.4" fill="url(#gNa)"/>
<line x1="378.0" y1="70.9" x2="405.5" y2="71.0" class="e"/>
<line x1="197.0" y1="167.2" x2="193.0" y2="171.5" class="b"/>
<line x1="255.9" y1="81.1" x2="249.5" y2="77.3" class="b"/>
<line x1="339.4" y1="176.9" x2="346.3" y2="180.3" class="b"/>
<line x1="357.1" y1="278.1" x2="354.6" y2="284.0" class="b"/>
<line x1="189.7" y1="286.3" x2="185.7" y2="290.7" class="b"/>
<line x1="405.7" y1="98.6" x2="405.5" y2="71.0" class="e"/>
<circle cx="407.0" cy="125.4" r="4.4" fill="url(#gNa)"/>
<line x1="222.8" y1="213.3" x2="226.7" y2="206.4" class="b"/>
<line x1="404.2" y1="183.9" x2="401.1" y2="187.4" class="b"/>
<line x1="401.2" y1="116.5" x2="405.0" y2="122.4" class="b"/>
<circle cx="350.9" cy="126.1" r="4.4" fill="url(#gNa)"/>
<line x1="279.6" y1="98.6" x2="283.5" y2="104.5" class="b"/>
<line x1="360.3" y1="188.1" x2="353.9" y2="184.4" class="b"/>
<line x1="226.6" y1="115.4" x2="230.7" y2="118.4" class="b"/>
<line x1="332.5" y1="173.5" x2="339.4" y2="176.9" class="b"/>
<line x1="287.2" y1="80.0" x2="284.1" y2="83.5" class="b"/>
<line x1="248.9" y1="141.1" x2="246.6" y2="136.8" class="b"/>
<circle cx="406.3" cy="181.5" r="3.5" fill="url(#gP)"/>
<line x1="262.3" y1="84.9" x2="255.9" y2="81.1" class="b"/>
<line x1="308.1" y1="267.9" x2="304.1" y2="262.0" class="b"/>
<line x1="325.6" y1="170.1" x2="332.5" y2="173.5" class="b"/>
<line x1="344.5" y1="192.6" x2="348.3" y2="185.6" class="b"/>
<line x1="248.7" y1="161.4" x2="246.3" y2="167.3" class="b"/>
<line x1="401.1" y1="187.4" x2="398.0" y2="190.8" class="b"/>
<line x1="344.7" y1="121.6" x2="348.8" y2="124.5" class="b"/>
<line x1="354.4" y1="132.7" x2="352.1" y2="128.4" class="b"/>
<circle cx="311.9" cy="273.5" r="8.5" fill="url(#gS)"/>
<circle cx="350.2" cy="182.2" r="4.4" fill="url(#gNa)"/>
<line x1="229.8" y1="88.8" x2="233.7" y2="81.8" class="b"/>
<line x1="307.7" y1="278.0" x2="303.7" y2="282.3" class="b"/>
<line x1="366.7" y1="191.9" x2="360.3" y2="188.1" class="b"/>
<line x1="284.1" y1="83.5" x2="281.0" y2="87.0" class="b"/>
<line x1="318.7" y1="166.7" x2="325.6" y2="170.1" class="b"/>
<line x1="340.9" y1="75.7" x2="346.5" y2="73.0" class="b"/>
<line x1="186.2" y1="250.0" x2="182.2" y2="244.1" class="b"/>
<line x1="187.1" y1="291.6" x2="172.1" y2="303.0" class="e"/>
<line x1="279.0" y1="210.0" x2="281.5" y2="217.0" class="b"/>
<line x1="193.4" y1="151.2" x2="189.4" y2="145.3" class="b"/>
<line x1="390.4" y1="209.4" x2="394.3" y2="215.3" class="b"/>
<line x1="268.8" y1="88.6" x2="262.3" y2="84.9" class="b"/>
<line x1="337.4" y1="226.2" x2="341.4" y2="229.2" class="b"/>
<line x1="353.9" y1="173.4" x2="351.4" y2="179.3" class="b"/>
<line x1="398.0" y1="190.8" x2="394.9" y2="194.3" class="b"/>
<line x1="359.7" y1="251.9" x2="357.4" y2="247.6" class="b"/>
<circle cx="276.6" cy="203.3" r="8.5" fill="url(#gS)"/>
<line x1="193.0" y1="171.5" x2="189.0" y2="175.8" class="b"/>
<line x1="397.3" y1="110.6" x2="401.2" y2="116.5" class="b"/>
<line x1="373.1" y1="195.7" x2="366.7" y2="191.9" class="b"/>
<line x1="185.7" y1="290.7" x2="181.7" y2="295.0" class="b"/>
<line x1="359.5" y1="272.2" x2="357.1" y2="278.1" class="b"/>
<line x1="340.6" y1="199.6" x2="344.5" y2="192.6" class="b"/>
<line x1="394.9" y1="194.3" x2="391.8" y2="197.8" class="b"/>
<line x1="211.6" y1="224.1" x2="204.8" y2="227.8" class="b"/>
<line x1="225.9" y1="95.8" x2="229.8" y2="88.8" class="b"/>
<line x1="222.6" y1="112.5" x2="226.6" y2="115.4" class="b"/>
<line x1="204.8" y1="227.8" x2="197.9" y2="231.6" class="b"/>
<line x1="304.1" y1="262.0" x2="300.2" y2="256.1" class="b"/>
<line x1="379.5" y1="199.4" x2="373.1" y2="195.7" class="b"/>
<line x1="251.1" y1="145.5" x2="248.9" y2="141.1" class="b"/>
<line x1="278.9" y1="200.3" x2="281.1" y2="197.4" class="b"/>
<line x1="197.9" y1="231.6" x2="191.1" y2="235.3" class="b"/>
<line x1="191.1" y1="235.3" x2="184.2" y2="239.0" class="b"/>
<line x1="251.1" y1="155.5" x2="248.7" y2="161.4" class="b"/>
<line x1="303.7" y1="282.3" x2="299.7" y2="286.6" class="b"/>
<line x1="281.5" y1="217.0" x2="284.0" y2="224.0" class="b"/>
<line x1="340.7" y1="118.6" x2="344.7" y2="121.6" class="b"/>
<line x1="356.6" y1="137.1" x2="354.4" y2="132.7" class="b"/>
<line x1="189.4" y1="145.3" x2="185.4" y2="139.4" class="b"/>
<line x1="393.5" y1="104.7" x2="397.3" y2="110.6" class="b"/>
<line x1="336.7" y1="206.6" x2="340.6" y2="199.6" class="b"/>
<line x1="356.3" y1="167.5" x2="353.9" y2="173.4" class="b"/>
<line x1="333.3" y1="223.3" x2="337.4" y2="226.2" class="b"/>
<line x1="189.0" y1="175.8" x2="185.0" y2="180.1" class="b"/>
<line x1="222.1" y1="102.8" x2="225.9" y2="95.8" class="b"/>
<line x1="361.9" y1="256.3" x2="359.7" y2="251.9" class="b"/>
<line x1="403.4" y1="73.3" x2="400.3" y2="76.8" class="b"/>
<line x1="261.2" y1="256.8" x2="267.6" y2="253.4" class="b"/>
<line x1="359.5" y1="77.6" x2="353.1" y2="73.8" class="b"/>
<line x1="250.5" y1="267.3" x2="246.7" y2="274.1" class="b"/>
<line x1="361.9" y1="266.3" x2="359.5" y2="272.2" class="b"/>
<line x1="225.5" y1="229.3" x2="223.1" y2="225.8" class="b"/>
<circle cx="405.5" cy="71.0" r="3.5" fill="url(#gP)"/>
<line x1="245.8" y1="252.8" x2="249.0" y2="255.7" class="b"/>
<line x1="300.2" y1="256.1" x2="296.2" y2="250.2" class="b"/>
<line x1="307.3" y1="157.4" x2="303.4" y2="151.5" class="b"/>
<line x1="343.7" y1="82.1" x2="347.5" y2="75.1" class="b"/>
<line x1="400.3" y1="76.8" x2="397.2" y2="80.3" class="b"/>
<circle cx="180.3" cy="241.2" r="4.4" fill="url(#gNa)"/>
<line x1="284.0" y1="224.0" x2="286.5" y2="231.0" class="b"/>
<circle cx="311.1" cy="163.0" r="8.5" fill="url(#gS)"/>
<circle cx="349.4" cy="71.7" r="4.4" fill="url(#gNa)"/>
<line x1="307.0" y1="167.4" x2="303.0" y2="171.7" class="b"/>
<line x1="365.9" y1="81.3" x2="359.5" y2="77.6" class="b"/>
<line x1="188.9" y1="246.7" x2="183.2" y2="243.1" class="b"/>
<line x1="299.7" y1="286.6" x2="295.7" y2="290.9" class="b"/>
<line x1="267.6" y1="253.4" x2="273.9" y2="250.1" class="b"/>
<circle cx="219.2" cy="220.0" r="8.5" fill="url(#gS)"/>
<line x1="221.6" y1="214.2" x2="224.1" y2="208.3" class="b"/>
<line x1="332.8" y1="213.6" x2="336.7" y2="206.6" class="b"/>
<line x1="185.4" y1="139.4" x2="181.5" y2="133.5" class="b"/>
<line x1="186.3" y1="181.0" x2="171.3" y2="192.4" class="e"/>
<line x1="278.2" y1="99.4" x2="280.7" y2="106.4" class="b"/>
<line x1="281.1" y1="197.4" x2="283.3" y2="194.4" class="b"/>
<line x1="389.6" y1="98.9" x2="393.5" y2="104.7" class="b"/>
<circle cx="254.2" cy="260.5" r="8.5" fill="url(#gS)"/>
<line x1="227.8" y1="232.8" x2="225.5" y2="229.3" class="b"/>
<line x1="242.7" y1="249.9" x2="245.8" y2="252.8" class="b"/>
<line x1="336.6" y1="115.7" x2="340.7" y2="118.6" class="b"/>
<line x1="397.2" y1="80.3" x2="394.1" y2="83.8" class="b"/>
<line x1="246.7" y1="274.1" x2="243.0" y2="281.0" class="b"/>
<line x1="358.9" y1="141.4" x2="356.6" y2="137.1" class="b"/>
<circle cx="179.6" cy="297.3" r="4.4" fill="url(#gNa)"/>
<circle cx="275.8" cy="92.8" r="8.5" fill="url(#gS)"/>
<line x1="372.3" y1="85.1" x2="365.9" y2="81.3" class="b"/>
<line x1="185.0" y1="180.1" x2="181.0" y2="184.4" class="b"/>
<line x1="358.7" y1="161.7" x2="356.3" y2="167.5" class="b"/>
<line x1="273.9" y1="250.1" x2="280.3" y2="246.7" class="b"/>
<line x1="339.8" y1="89.1" x2="343.7" y2="82.1" class="b"/>
<line x1="394.1" y1="83.8" x2="391.0" y2="87.2" class="b"/>
<line x1="210.9" y1="113.5" x2="204.0" y2="117.3" class="b"/>
<line x1="230.2" y1="236.2" x2="227.8" y2="232.8" class="b"/>
<line x1="239.5" y1="247.0" x2="242.7" y2="249.9" class="b"/>
<line x1="296.2" y1="250.2" x2="292.2" y2="244.3" class="b"/>
<line x1="297.1" y1="291.8" x2="282.1" y2="303.2" class="e"/>
<line x1="389.0" y1="210.2" x2="391.5" y2="217.2" class="b"/>
<line x1="204.0" y1="117.3" x2="197.1" y2="121.0" class="b"/>
<line x1="303.4" y1="151.5" x2="299.4" y2="145.6" class="b"/>
<line x1="378.8" y1="88.9" x2="372.3" y2="85.1" class="b"/>
<line x1="286.5" y1="231.0" x2="289.1" y2="238.0" class="b"/>
<line x1="278.1" y1="89.8" x2="280.3" y2="86.8" class="b"/>
<line x1="197.1" y1="121.0" x2="190.3" y2="124.7" class="b"/>
<line x1="243.0" y1="281.0" x2="239.2" y2="287.9" class="b"/>
<line x1="194.7" y1="250.4" x2="188.9" y2="246.7" class="b"/>
<line x1="190.3" y1="124.7" x2="183.4" y2="128.5" class="b"/>
<circle cx="386.6" cy="203.6" r="8.5" fill="url(#gS)"/>
<line x1="303.0" y1="171.7" x2="299.0" y2="176.0" class="b"/>
<line x1="280.7" y1="106.4" x2="283.2" y2="113.4" class="b"/>
<line x1="295.7" y1="290.9" x2="291.7" y2="295.2" class="b"/>
<line x1="224.1" y1="208.3" x2="226.5" y2="202.4" class="b"/>
<line x1="280.3" y1="246.7" x2="286.7" y2="243.3" class="b"/>
<line x1="232.6" y1="239.7" x2="230.2" y2="236.2" class="b"/>
<line x1="236.4" y1="244.1" x2="239.5" y2="247.0" class="b"/>
<line x1="321.6" y1="224.3" x2="314.8" y2="228.1" class="b"/>
<line x1="335.9" y1="96.1" x2="339.8" y2="89.1" class="b"/>
<line x1="332.6" y1="112.7" x2="336.6" y2="115.7" class="b"/>
<line x1="314.8" y1="228.1" x2="307.9" y2="231.8" class="b"/>
<line x1="283.3" y1="194.4" x2="285.4" y2="191.5" class="b"/>
<line x1="361.1" y1="145.7" x2="358.9" y2="141.4" class="b"/>
<line x1="388.9" y1="200.6" x2="391.1" y2="197.6" class="b"/>
<line x1="260.4" y1="146.2" x2="266.8" y2="142.9" class="b"/>
<line x1="307.9" y1="231.8" x2="301.1" y2="235.5" class="b"/>
<line x1="239.2" y1="287.9" x2="235.4" y2="294.7" class="b"/>
<line x1="249.7" y1="156.7" x2="246.0" y2="163.6" class="b"/>
<line x1="301.1" y1="235.5" x2="294.2" y2="239.3" class="b"/>
<line x1="361.1" y1="155.8" x2="358.7" y2="161.7" class="b"/>
<line x1="224.7" y1="118.7" x2="222.3" y2="115.2" class="b"/>
<line x1="391.5" y1="217.2" x2="394.0" y2="224.2" class="b"/>
<line x1="245.0" y1="142.2" x2="248.2" y2="145.1" class="b"/>
<line x1="299.4" y1="145.6" x2="295.4" y2="139.7" class="b"/>
<circle cx="179.5" cy="130.6" r="4.4" fill="url(#gNa)"/>
<line x1="200.4" y1="254.1" x2="194.7" y2="250.4" class="b"/>
<line x1="283.2" y1="113.4" x2="285.8" y2="120.4" class="b"/>
<line x1="188.2" y1="136.2" x2="182.4" y2="132.5" class="b"/>
<line x1="299.0" y1="176.0" x2="295.0" y2="180.4" class="b"/>
<line x1="266.8" y1="142.9" x2="273.2" y2="139.5" class="b"/>
<circle cx="218.4" cy="109.4" r="8.5" fill="url(#gS)"/>
<line x1="220.8" y1="103.6" x2="223.3" y2="97.7" class="b"/>
<line x1="332.1" y1="103.0" x2="335.9" y2="96.1" class="b"/>
<line x1="185.5" y1="70.5" x2="170.5" y2="81.9" class="e"/>
<line x1="371.2" y1="257.0" x2="377.6" y2="253.7" class="b"/>
<line x1="226.5" y1="202.4" x2="229.0" y2="196.6" class="b"/>
<line x1="280.3" y1="86.8" x2="282.5" y2="83.9" class="b"/>
<circle cx="253.4" cy="149.9" r="8.5" fill="url(#gS)"/>
<line x1="227.1" y1="122.2" x2="224.7" y2="118.7" class="b"/>
<line x1="241.9" y1="139.3" x2="245.0" y2="142.2" class="b"/>
<line x1="360.5" y1="267.5" x2="356.7" y2="274.4" class="b"/>
<line x1="246.0" y1="163.6" x2="242.2" y2="170.4" class="b"/>
<line x1="231.8" y1="244.2" x2="228.2" y2="247.3" class="b"/>
<line x1="335.5" y1="229.5" x2="333.1" y2="226.0" class="b"/>
<circle cx="178.8" cy="186.7" r="4.4" fill="url(#gNa)"/>
<line x1="355.8" y1="253.0" x2="359.0" y2="255.9" class="b"/>
<circle cx="234.2" cy="242.1" r="3.5" fill="url(#gP)"/>
<line x1="279.7" y1="237.3" x2="286.7" y2="240.0" class="b"/>
<circle cx="290.3" cy="241.4" r="4.4" fill="url(#gNa)"/>
<line x1="236.1" y1="240.4" x2="238.9" y2="238.0" class="b"/>
<line x1="394.0" y1="224.2" x2="396.5" y2="231.2" class="b"/>
<line x1="273.2" y1="139.5" x2="279.5" y2="136.1" class="b"/>
<line x1="227.5" y1="288.1" x2="231.3" y2="294.5" class="b"/>
<line x1="228.2" y1="247.3" x2="224.7" y2="250.3" class="b"/>
<line x1="298.9" y1="247.0" x2="293.2" y2="243.3" class="b"/>
<line x1="229.4" y1="125.7" x2="227.1" y2="122.2" class="b"/>
<line x1="377.6" y1="253.7" x2="383.9" y2="250.3" class="b"/>
<circle cx="329.2" cy="220.2" r="8.5" fill="url(#gS)"/>
<line x1="331.6" y1="214.4" x2="334.1" y2="208.5" class="b"/>
<line x1="238.7" y1="136.4" x2="241.9" y2="139.3" class="b"/>
<line x1="183.0" y1="192.6" x2="180.3" y2="188.8" class="b"/>
<line x1="295.4" y1="139.7" x2="291.5" y2="133.8" class="b"/>
<line x1="296.3" y1="181.2" x2="281.3" y2="192.7" class="e"/>
<line x1="388.2" y1="99.7" x2="390.7" y2="106.7" class="b"/>
<line x1="285.4" y1="191.5" x2="287.6" y2="188.5" class="b"/>
<line x1="391.1" y1="197.6" x2="393.3" y2="194.7" class="b"/>
<circle cx="364.2" cy="260.7" r="8.5" fill="url(#gS)"/>
<line x1="337.8" y1="233.0" x2="335.5" y2="229.5" class="b"/>
<line x1="285.8" y1="120.4" x2="288.3" y2="127.4" class="b"/>
<line x1="206.1" y1="257.8" x2="200.4" y2="254.1" class="b"/>
<line x1="352.7" y1="250.1" x2="355.8" y2="253.0" class="b"/>
<line x1="356.7" y1="274.4" x2="353.0" y2="281.2" class="b"/>
<line x1="242.2" y1="170.4" x2="238.4" y2="177.3" class="b"/>
<circle cx="289.6" cy="297.5" r="4.4" fill="url(#gNa)"/>
<line x1="193.9" y1="139.9" x2="188.2" y2="136.2" class="b"/>
<line x1="223.6" y1="281.6" x2="227.5" y2="288.1" class="b"/>
<circle cx="385.8" cy="93.0" r="8.5" fill="url(#gS)"/>
<line x1="224.7" y1="250.3" x2="221.2" y2="253.3" class="b"/>
<circle cx="233.5" cy="298.2" r="4.4" fill="url(#gNa)"/>
<line x1="295.0" y1="180.4" x2="291.0" y2="184.7" class="b"/>
<line x1="223.3" y1="97.7" x2="225.8" y2="91.9" class="b"/>
<line x1="279.5" y1="136.1" x2="285.9" y2="132.8" class="b"/>
<line x1="229.0" y1="196.6" x2="231.5" y2="190.7" class="b"/>
<line x1="231.8" y1="129.2" x2="229.4" y2="125.7" class="b"/>
<line x1="238.9" y1="238.0" x2="241.6" y2="235.6" class="b"/>
<line x1="235.6" y1="133.6" x2="238.7" y2="136.4" class="b"/>
<line x1="272.7" y1="234.6" x2="279.7" y2="237.3" class="b"/>
<line x1="383.9" y1="250.3" x2="390.3" y2="246.9" class="b"/>
<line x1="282.6" y1="293.8" x2="287.2" y2="296.2" class="b"/>
<line x1="219.8" y1="275.1" x2="223.6" y2="281.6" class="b"/>
<line x1="320.9" y1="113.8" x2="314.0" y2="117.5" class="b"/>
<line x1="340.2" y1="236.5" x2="337.8" y2="233.0" class="b"/>
<line x1="349.5" y1="247.2" x2="352.7" y2="250.1" class="b"/>
<line x1="242.0" y1="294.3" x2="236.3" y2="296.9" class="b"/>
<line x1="407.1" y1="292.1" x2="392.1" y2="303.5" class="e"/>
<line x1="221.2" y1="253.3" x2="217.6" y2="256.4" class="b"/>
<line x1="314.0" y1="117.5" x2="307.1" y2="121.3" class="b"/>
<line x1="282.5" y1="83.9" x2="284.7" y2="80.9" class="b"/>
<line x1="396.5" y1="231.2" x2="399.1" y2="238.2" class="b"/>
<line x1="388.1" y1="90.0" x2="390.3" y2="87.1" class="b"/>
<line x1="307.1" y1="121.3" x2="300.3" y2="125.0" class="b"/>
<line x1="353.0" y1="281.2" x2="349.2" y2="288.1" class="b"/>
<line x1="238.4" y1="177.3" x2="234.7" y2="184.2" class="b"/>
<line x1="304.7" y1="250.7" x2="298.9" y2="247.0" class="b"/>
<line x1="300.3" y1="125.0" x2="293.4" y2="128.7" class="b"/>
<line x1="390.7" y1="106.7" x2="393.2" y2="113.7" class="b"/>
<line x1="215.9" y1="268.6" x2="219.8" y2="275.1" class="b"/>
<line x1="334.1" y1="208.5" x2="336.5" y2="202.7" class="b"/>
<line x1="390.3" y1="246.9" x2="396.7" y2="243.6" class="b"/>
<line x1="241.6" y1="235.6" x2="244.4" y2="233.1" class="b"/>
<line x1="342.6" y1="240.0" x2="340.2" y2="236.5" class="b"/>
<line x1="346.4" y1="244.4" x2="349.5" y2="247.2" class="b"/>
<line x1="199.6" y1="143.6" x2="193.9" y2="139.9" class="b"/>
<line x1="185.8" y1="196.4" x2="183.0" y2="192.6" class="b"/>
<line x1="265.7" y1="232.0" x2="272.7" y2="234.6" class="b"/>
<line x1="393.3" y1="194.7" x2="395.4" y2="191.7" class="b"/>
<line x1="370.4" y1="146.5" x2="376.8" y2="143.1" class="b"/>
<line x1="225.8" y1="91.9" x2="228.2" y2="86.0" class="b"/>
<line x1="349.2" y1="288.1" x2="345.4" y2="295.0" class="b"/>
<line x1="359.7" y1="157.0" x2="356.0" y2="163.8" class="b"/>
<line x1="231.0" y1="133.7" x2="227.5" y2="136.7" class="b"/>
<line x1="334.7" y1="119.0" x2="332.3" y2="115.5" class="b"/>
<circle cx="178.0" cy="76.2" r="4.4" fill="url(#gNa)"/>
<line x1="355.0" y1="142.5" x2="358.2" y2="145.4" class="b"/>
<line x1="278.1" y1="291.3" x2="282.6" y2="293.8" class="b"/>
<circle cx="233.4" cy="131.6" r="3.5" fill="url(#gP)"/>
<line x1="244.4" y1="233.1" x2="247.1" y2="230.7" class="b"/>
<line x1="278.9" y1="126.8" x2="285.9" y2="129.5" class="b"/>
<circle cx="289.5" cy="130.9" r="4.4" fill="url(#gNa)"/>
<line x1="247.6" y1="291.6" x2="242.0" y2="294.3" class="b"/>
<line x1="238.0" y1="198.5" x2="234.6" y2="191.6" class="b"/>
<line x1="310.4" y1="254.4" x2="304.7" y2="250.7" class="b"/>
<line x1="235.3" y1="129.9" x2="238.1" y2="127.5" class="b"/>
<line x1="393.2" y1="113.7" x2="395.8" y2="120.7" class="b"/>
<line x1="226.7" y1="177.5" x2="230.5" y2="184.0" class="b"/>
<line x1="227.5" y1="136.7" x2="223.9" y2="139.7" class="b"/>
<line x1="298.2" y1="136.4" x2="292.4" y2="132.8" class="b"/>
<line x1="376.8" y1="143.1" x2="383.2" y2="139.8" class="b"/>
<circle cx="328.4" cy="109.7" r="8.5" fill="url(#gS)"/>
<line x1="330.8" y1="103.9" x2="333.3" y2="98.0" class="b"/>
<line x1="258.7" y1="229.3" x2="265.7" y2="232.0" class="b"/>
<line x1="182.2" y1="82.1" x2="179.5" y2="78.2" class="b"/>
<line x1="295.5" y1="70.7" x2="280.5" y2="82.2" class="e"/>
<line x1="284.7" y1="80.9" x2="286.9" y2="78.0" class="b"/>
<line x1="336.5" y1="202.7" x2="339.0" y2="196.8" class="b"/>
<line x1="390.3" y1="87.1" x2="392.5" y2="84.1" class="b"/>
<circle cx="363.4" cy="150.2" r="8.5" fill="url(#gS)"/>
<line x1="337.1" y1="122.5" x2="334.7" y2="119.0" class="b"/>
<line x1="241.3" y1="205.3" x2="238.0" y2="198.5" class="b"/>
<line x1="205.3" y1="147.3" x2="199.6" y2="143.6" class="b"/>
<line x1="351.9" y1="139.6" x2="355.0" y2="142.5" class="b"/>
<line x1="356.0" y1="163.8" x2="352.2" y2="170.7" class="b"/>
<line x1="341.8" y1="244.5" x2="338.2" y2="247.5" class="b"/>
<circle cx="288.8" cy="187.0" r="4.4" fill="url(#gNa)"/>
<line x1="222.1" y1="193.3" x2="229.2" y2="189.5" class="b"/>
<line x1="222.9" y1="171.0" x2="226.7" y2="177.5" class="b"/>
<line x1="223.9" y1="139.7" x2="220.4" y2="142.8" class="b"/>
<circle cx="232.7" cy="187.7" r="4.4" fill="url(#gNa)"/>
<circle cx="344.2" cy="242.4" r="3.5" fill="url(#gP)"/>
<line x1="244.7" y1="212.2" x2="241.3" y2="205.3" class="b"/>
<line x1="389.7" y1="237.6" x2="396.7" y2="240.3" class="b"/>
<line x1="188.5" y1="200.3" x2="185.8" y2="196.4" class="b"/>
<circle cx="400.3" cy="241.7" r="4.4" fill="url(#gNa)"/>
<line x1="228.2" y1="86.0" x2="230.7" y2="80.1" class="b"/>
<line x1="238.1" y1="127.5" x2="240.8" y2="125.0" class="b"/>
<line x1="346.1" y1="240.7" x2="348.9" y2="238.3" class="b"/>
<line x1="271.9" y1="124.1" x2="278.9" y2="126.8" class="b"/>
<line x1="383.2" y1="139.8" x2="389.5" y2="136.4" class="b"/>
<line x1="337.5" y1="288.3" x2="341.3" y2="294.8" class="b"/>
<line x1="338.2" y1="247.5" x2="334.7" y2="250.5" class="b"/>
<line x1="281.9" y1="183.2" x2="286.4" y2="185.7" class="b"/>
<line x1="219.0" y1="164.5" x2="222.9" y2="171.0" class="b"/>
<line x1="339.4" y1="125.9" x2="337.1" y2="122.5" class="b"/>
<line x1="348.7" y1="136.7" x2="351.9" y2="139.6" class="b"/>
<line x1="241.2" y1="183.7" x2="235.5" y2="186.4" class="b"/>
<line x1="293.0" y1="192.9" x2="290.3" y2="189.0" class="b"/>
<line x1="248.0" y1="219.1" x2="244.7" y2="212.2" class="b"/>
<line x1="406.3" y1="181.5" x2="391.3" y2="192.9" class="e"/>
<line x1="220.4" y1="142.8" x2="216.8" y2="145.8" class="b"/>
<line x1="395.4" y1="191.7" x2="397.6" y2="188.8" class="b"/>
<line x1="204.9" y1="258.9" x2="197.8" y2="256.2" class="b"/>
<line x1="395.8" y1="120.7" x2="398.3" y2="127.7" class="b"/>
<line x1="316.1" y1="258.1" x2="310.4" y2="254.4" class="b"/>
<line x1="352.2" y1="170.7" x2="348.4" y2="177.6" class="b"/>
<circle cx="399.6" cy="297.8" r="4.4" fill="url(#gNa)"/>
<line x1="273.6" y1="288.8" x2="278.1" y2="291.3" class="b"/>
<line x1="303.9" y1="140.1" x2="298.2" y2="136.4" class="b"/>
<line x1="333.6" y1="281.8" x2="337.5" y2="288.3" class="b"/>
<line x1="253.3" y1="289.0" x2="247.6" y2="291.6" class="b"/>
<line x1="334.7" y1="250.5" x2="331.2" y2="253.6" class="b"/>
<line x1="215.0" y1="197.0" x2="222.1" y2="193.3" class="b"/>
<line x1="215.2" y1="158.0" x2="219.0" y2="164.5" class="b"/>
<circle cx="343.5" cy="298.5" r="4.4" fill="url(#gNa)"/>
<line x1="333.3" y1="98.0" x2="335.8" y2="92.1" class="b"/>
<circle cx="211.7" cy="261.5" r="8.5" fill="url(#gS)"/>
<line x1="389.5" y1="136.4" x2="395.9" y2="133.0" class="b"/>
<line x1="339.0" y1="196.8" x2="341.5" y2="190.9" class="b"/>
<line x1="240.8" y1="125.0" x2="243.6" y2="122.6" class="b"/>
<line x1="341.8" y1="129.4" x2="339.4" y2="125.9" class="b"/>
<line x1="348.9" y1="238.3" x2="351.6" y2="235.8" class="b"/>
<line x1="345.6" y1="133.8" x2="348.7" y2="136.7" class="b"/>
<line x1="382.7" y1="234.9" x2="389.7" y2="237.6" class="b"/>
<line x1="185.0" y1="85.9" x2="182.2" y2="82.1" class="b"/>
<line x1="392.6" y1="294.0" x2="397.2" y2="296.5" class="b"/>
<line x1="329.8" y1="275.3" x2="333.6" y2="281.8" class="b"/>
<line x1="264.9" y1="121.4" x2="271.9" y2="124.1" class="b"/>
<line x1="352.0" y1="294.5" x2="346.3" y2="297.2" class="b"/>
<line x1="331.2" y1="253.6" x2="327.6" y2="256.6" class="b"/>
<line x1="392.5" y1="84.1" x2="394.7" y2="81.2" class="b"/>
<line x1="348.4" y1="177.6" x2="344.7" y2="184.4" class="b"/>
<line x1="214.5" y1="258.9" x2="217.2" y2="256.5" class="b"/>
<line x1="197.8" y1="256.2" x2="190.6" y2="253.6" class="b"/>
<line x1="325.9" y1="268.8" x2="329.8" y2="275.3" class="b"/>
<line x1="191.2" y1="204.1" x2="188.5" y2="200.3" class="b"/>
<line x1="207.9" y1="200.8" x2="215.0" y2="197.0" class="b"/>
<line x1="277.3" y1="180.7" x2="281.9" y2="183.2" class="b"/>
<line x1="243.6" y1="122.6" x2="246.3" y2="120.1" class="b"/>
<line x1="351.6" y1="235.8" x2="354.4" y2="233.4" class="b"/>
<line x1="246.8" y1="181.1" x2="241.2" y2="183.7" class="b"/>
<line x1="237.2" y1="87.9" x2="233.9" y2="81.0" class="b"/>
<line x1="309.6" y1="143.8" x2="303.9" y2="140.1" class="b"/>
<line x1="295.8" y1="196.7" x2="293.0" y2="192.9" class="b"/>
<line x1="375.7" y1="232.2" x2="382.7" y2="234.9" class="b"/>
<line x1="257.9" y1="118.7" x2="264.9" y2="121.4" class="b"/>
<line x1="269.0" y1="286.4" x2="273.6" y2="288.8" class="b"/>
<line x1="335.8" y1="92.1" x2="338.2" y2="86.3" class="b"/>
<line x1="259.0" y1="286.3" x2="253.3" y2="289.0" class="b"/>
<line x1="240.6" y1="94.8" x2="237.2" y2="87.9" class="b"/>
<line x1="341.0" y1="133.9" x2="337.5" y2="137.0" class="b"/>
<circle cx="288.0" cy="76.4" r="4.4" fill="url(#gNa)"/>
<line x1="221.3" y1="82.7" x2="228.5" y2="79.0" class="b"/>
<circle cx="231.9" cy="77.1" r="4.4" fill="url(#gNa)"/>
<line x1="388.1" y1="291.5" x2="392.6" y2="294.0" class="b"/>
<circle cx="343.4" cy="131.8" r="3.5" fill="url(#gP)"/>
<line x1="243.9" y1="101.6" x2="240.6" y2="94.8" class="b"/>
<line x1="354.4" y1="233.4" x2="357.1" y2="230.9" class="b"/>
<line x1="388.9" y1="127.0" x2="395.9" y2="129.7" class="b"/>
<line x1="200.8" y1="204.5" x2="207.9" y2="200.8" class="b"/>
<line x1="187.7" y1="89.7" x2="185.0" y2="85.9" class="b"/>
<line x1="190.6" y1="253.6" x2="183.5" y2="250.9" class="b"/>
<circle cx="399.5" cy="131.1" r="4.4" fill="url(#gNa)"/>
<line x1="357.6" y1="291.9" x2="352.0" y2="294.5" class="b"/>
<line x1="348.0" y1="198.7" x2="344.6" y2="191.8" class="b"/>
<line x1="345.3" y1="130.1" x2="348.1" y2="127.7" class="b"/>
<line x1="336.7" y1="177.8" x2="340.5" y2="184.2" class="b"/>
<line x1="337.5" y1="137.0" x2="333.9" y2="140.0" class="b"/>
<line x1="257.1" y1="230.2" x2="262.9" y2="234.0" class="b"/>
<line x1="368.7" y1="229.5" x2="375.7" y2="232.2" class="b"/>
<circle cx="251.7" cy="226.6" r="8.5" fill="url(#gS)"/>
<line x1="292.2" y1="82.3" x2="289.5" y2="78.5" class="b"/>
<line x1="247.3" y1="108.5" x2="243.9" y2="101.6" class="b"/>
<line x1="405.5" y1="71.0" x2="390.5" y2="82.4" class="e"/>
<line x1="247.1" y1="230.5" x2="242.6" y2="234.3" class="b"/>
<line x1="394.7" y1="81.2" x2="396.9" y2="78.2" class="b"/>
<line x1="204.2" y1="148.4" x2="197.0" y2="145.7" class="b"/>
<line x1="351.3" y1="205.6" x2="348.0" y2="198.7" class="b"/>
<line x1="315.3" y1="147.5" x2="309.6" y2="143.8" class="b"/>
<line x1="217.2" y1="256.5" x2="219.9" y2="254.0" class="b"/>
<circle cx="398.8" cy="187.2" r="4.4" fill="url(#gNa)"/>
<line x1="332.1" y1="193.5" x2="339.2" y2="189.8" class="b"/>
<line x1="272.8" y1="178.3" x2="277.3" y2="180.7" class="b"/>
<line x1="332.9" y1="171.3" x2="336.7" y2="177.8" class="b"/>
<line x1="252.5" y1="178.4" x2="246.8" y2="181.1" class="b"/>
<line x1="333.9" y1="140.0" x2="330.4" y2="143.0" class="b"/>
<line x1="214.2" y1="86.5" x2="221.3" y2="82.7" class="b"/>
<circle cx="342.7" cy="187.9" r="4.4" fill="url(#gNa)"/>
<line x1="354.7" y1="212.4" x2="351.3" y2="205.6" class="b"/>
<circle cx="210.9" cy="150.9" r="8.5" fill="url(#gS)"/>
<line x1="298.5" y1="200.5" x2="295.8" y2="196.7" class="b"/>
<line x1="338.2" y1="86.3" x2="340.7" y2="80.4" class="b"/>
<line x1="348.1" y1="127.7" x2="350.8" y2="125.3" class="b"/>
<line x1="381.9" y1="124.3" x2="388.9" y2="127.0" class="b"/>
<line x1="391.9" y1="183.5" x2="396.4" y2="185.9" class="b"/>
<line x1="329.0" y1="164.8" x2="332.9" y2="171.3" class="b"/>
<line x1="183.5" y1="250.9" x2="176.3" y2="248.2" class="b"/>
<line x1="351.2" y1="184.0" x2="345.5" y2="186.6" class="b"/>
<line x1="358.0" y1="219.3" x2="354.7" y2="212.4" class="b"/>
<line x1="330.4" y1="143.0" x2="326.8" y2="146.1" class="b"/>
<line x1="314.9" y1="259.2" x2="307.8" y2="256.5" class="b"/>
<line x1="172.1" y1="303.0" x2="171.9" y2="275.4" class="e"/>
<line x1="172.1" y1="303.0" x2="199.6" y2="303.1" class="e"/>
<line x1="383.6" y1="289.1" x2="388.1" y2="291.5" class="b"/>
<line x1="213.7" y1="148.4" x2="216.4" y2="145.9" class="b"/>
<line x1="197.0" y1="145.7" x2="189.8" y2="143.0" class="b"/>
<line x1="363.3" y1="289.2" x2="357.6" y2="291.9" class="b"/>
<line x1="325.0" y1="197.3" x2="332.1" y2="193.5" class="b"/>
<line x1="325.2" y1="158.3" x2="329.0" y2="164.8" class="b"/>
<line x1="190.4" y1="93.6" x2="187.7" y2="89.7" class="b"/>
<line x1="189.9" y1="215.6" x2="186.2" y2="222.4" class="b"/>
<line x1="262.9" y1="234.0" x2="268.6" y2="237.7" class="b"/>
<line x1="207.1" y1="90.2" x2="214.2" y2="86.5" class="b"/>
<circle cx="321.7" cy="261.7" r="8.5" fill="url(#gS)"/>
<line x1="242.6" y1="234.3" x2="238.1" y2="238.2" class="b"/>
<line x1="186.2" y1="222.4" x2="182.4" y2="229.3" class="b"/>
<line x1="350.8" y1="125.3" x2="353.6" y2="122.8" class="b"/>
<line x1="295.0" y1="86.1" x2="292.2" y2="82.3" class="b"/>
<line x1="182.4" y1="229.3" x2="178.7" y2="236.1" class="b"/>
<line x1="374.9" y1="121.7" x2="381.9" y2="124.3" class="b"/>
<line x1="171.9" y1="275.4" x2="171.7" y2="247.7" class="e"/>
<line x1="178.7" y1="236.1" x2="174.9" y2="243.0" class="b"/>
<line x1="268.2" y1="175.8" x2="272.8" y2="178.3" class="b"/>
<line x1="258.2" y1="175.8" x2="252.5" y2="178.4" class="b"/>
<line x1="199.6" y1="303.1" x2="227.1" y2="303.1" class="e"/>
<line x1="219.9" y1="254.0" x2="222.6" y2="251.6" class="b"/>
<line x1="324.5" y1="259.2" x2="327.2" y2="256.7" class="b"/>
<line x1="307.8" y1="256.5" x2="300.6" y2="253.8" class="b"/>
<line x1="301.2" y1="204.4" x2="298.5" y2="200.5" class="b"/>
<line x1="317.9" y1="201.0" x2="325.0" y2="197.3" class="b"/>
<line x1="387.3" y1="181.0" x2="391.9" y2="183.5" class="b"/>
<line x1="353.6" y1="122.8" x2="356.3" y2="120.4" class="b"/>
<line x1="171.7" y1="247.7" x2="171.5" y2="220.1" class="e"/>
<line x1="200.0" y1="94.0" x2="207.1" y2="90.2" class="b"/>
<line x1="189.8" y1="143.0" x2="182.7" y2="140.3" class="b"/>
<line x1="356.8" y1="181.3" x2="351.2" y2="184.0" class="b"/>
<line x1="347.2" y1="88.2" x2="343.9" y2="81.3" class="b"/>
<line x1="184.5" y1="201.5" x2="188.1" y2="204.0" class="b"/>
<line x1="267.9" y1="276.7" x2="271.2" y2="270.2" class="b"/>
<line x1="256.4" y1="119.6" x2="262.1" y2="123.4" class="b"/>
<line x1="367.9" y1="119.0" x2="374.9" y2="121.7" class="b"/>
<circle cx="250.9" cy="116.0" r="8.5" fill="url(#gS)"/>
<line x1="379.0" y1="286.6" x2="383.6" y2="289.1" class="b"/>
<line x1="268.6" y1="237.7" x2="274.3" y2="241.5" class="b"/>
<line x1="246.3" y1="120.0" x2="241.8" y2="123.8" class="b"/>
<line x1="369.0" y1="286.6" x2="363.3" y2="289.2" class="b"/>
<line x1="350.6" y1="95.0" x2="347.2" y2="88.2" class="b"/>
<line x1="238.1" y1="238.2" x2="233.6" y2="242.0" class="b"/>
<line x1="227.1" y1="303.1" x2="254.6" y2="303.2" class="e"/>
<line x1="216.4" y1="145.9" x2="219.1" y2="143.5" class="b"/>
<circle cx="398.0" cy="76.7" r="4.4" fill="url(#gNa)"/>
<line x1="331.3" y1="83.0" x2="338.5" y2="79.2" class="b"/>
<line x1="171.5" y1="220.1" x2="171.3" y2="192.4" class="e"/>
<circle cx="172.8" cy="246.9" r="4.4" fill="url(#gNa)"/>
<line x1="271.8" y1="292.0" x2="269.0" y2="288.9" class="b"/>
<circle cx="341.9" cy="77.4" r="4.4" fill="url(#gNa)"/>
<line x1="180.9" y1="199.1" x2="184.5" y2="201.5" class="b"/>
<circle cx="194.0" cy="208.1" r="8.5" fill="url(#gS)"/>
<line x1="353.9" y1="101.9" x2="350.6" y2="95.0" class="b"/>
<line x1="310.8" y1="204.8" x2="317.9" y2="201.0" class="b"/>
<line x1="297.7" y1="90.0" x2="295.0" y2="86.1" class="b"/>
<line x1="300.6" y1="253.8" x2="293.5" y2="251.1" class="b"/>
<line x1="271.2" y1="270.2" x2="274.4" y2="263.8" class="b"/>
<circle cx="172.1" cy="303.0" r="3.5" fill="url(#gP)"/>
<line x1="367.1" y1="230.4" x2="372.9" y2="234.2" class="b"/>
<line x1="182.7" y1="140.3" x2="175.5" y2="137.7" class="b"/>
<circle cx="264.3" cy="283.8" r="8.5" fill="url(#gS)"/>
<circle cx="361.7" cy="226.8" r="8.5" fill="url(#gS)"/>
<line x1="357.3" y1="108.8" x2="353.9" y2="101.9" class="b"/>
<line x1="357.1" y1="230.8" x2="352.6" y2="234.6" class="b"/>
<line x1="314.2" y1="148.6" x2="307.0" y2="145.9" class="b"/>
<line x1="171.3" y1="192.4" x2="171.1" y2="164.8" class="e"/>
<line x1="274.6" y1="295.0" x2="271.8" y2="292.0" class="b"/>
<line x1="254.6" y1="303.2" x2="282.1" y2="303.2" class="e"/>
<line x1="177.4" y1="196.6" x2="180.9" y2="199.1" class="b"/>
<line x1="171.3" y1="192.4" x2="198.8" y2="192.5" class="e"/>
<line x1="222.6" y1="251.6" x2="225.3" y2="249.2" class="b"/>
<line x1="327.2" y1="256.7" x2="329.9" y2="254.3" class="b"/>
<line x1="382.8" y1="178.5" x2="387.3" y2="181.0" class="b"/>
<line x1="362.5" y1="178.7" x2="356.8" y2="181.3" class="b"/>
<line x1="324.2" y1="86.7" x2="331.3" y2="83.0" class="b"/>
<line x1="189.2" y1="105.0" x2="185.4" y2="111.9" class="b"/>
<line x1="262.1" y1="123.4" x2="267.8" y2="127.2" class="b"/>
<line x1="274.4" y1="263.8" x2="277.7" y2="257.3" class="b"/>
<circle cx="320.9" cy="151.2" r="8.5" fill="url(#gS)"/>
<line x1="274.3" y1="241.5" x2="280.0" y2="245.3" class="b"/>
<line x1="241.8" y1="123.8" x2="237.3" y2="127.6" class="b"/>
<line x1="185.4" y1="111.9" x2="181.7" y2="118.7" class="b"/>
<line x1="233.6" y1="242.0" x2="229.1" y2="245.8" class="b"/>
<line x1="181.7" y1="118.7" x2="177.9" y2="125.6" class="b"/>
<line x1="171.1" y1="164.8" x2="170.9" y2="137.2" class="e"/>
<line x1="293.5" y1="251.1" x2="286.3" y2="248.5" class="b"/>
<line x1="173.8" y1="194.1" x2="177.4" y2="196.6" class="b"/>
<line x1="177.9" y1="125.6" x2="174.2" y2="132.5" class="b"/>
<line x1="277.4" y1="298.1" x2="274.6" y2="295.0" class="b"/>
<line x1="282.1" y1="303.2" x2="281.9" y2="275.6" class="e"/>
<line x1="282.1" y1="303.2" x2="309.6" y2="303.3" class="e"/>
<line x1="198.8" y1="192.5" x2="226.3" y2="192.6" class="e"/>
<line x1="219.1" y1="143.5" x2="221.8" y2="141.0" class="b"/>
<line x1="323.7" y1="148.6" x2="326.4" y2="146.2" class="b"/>
<line x1="277.7" y1="257.3" x2="281.0" y2="250.8" class="b"/>
<line x1="307.0" y1="145.9" x2="299.8" y2="143.3" class="b"/>
<line x1="300.4" y1="93.8" x2="297.7" y2="90.0" class="b"/>
<line x1="299.9" y1="215.8" x2="296.2" y2="222.7" class="b"/>
<line x1="372.9" y1="234.2" x2="378.6" y2="238.0" class="b"/>
<line x1="317.1" y1="90.5" x2="324.2" y2="86.7" class="b"/>
<line x1="352.6" y1="234.6" x2="348.1" y2="238.4" class="b"/>
<line x1="296.2" y1="222.7" x2="292.4" y2="229.5" class="b"/>
<line x1="170.9" y1="137.2" x2="170.7" y2="109.5" class="e"/>
<line x1="183.7" y1="91.0" x2="187.3" y2="93.4" class="b"/>
<line x1="292.4" y1="229.5" x2="288.7" y2="236.4" class="b"/>
<line x1="280.2" y1="301.2" x2="277.4" y2="298.1" class="b"/>
<line x1="281.9" y1="275.6" x2="281.7" y2="248.0" class="e"/>
<line x1="267.1" y1="166.2" x2="270.4" y2="159.7" class="b"/>
<line x1="288.7" y1="236.4" x2="284.9" y2="243.3" class="b"/>
<line x1="378.2" y1="176.1" x2="382.8" y2="178.5" class="b"/>
<line x1="267.8" y1="127.2" x2="273.5" y2="131.0" class="b"/>
<line x1="368.2" y1="176.0" x2="362.5" y2="178.7" class="b"/>
<line x1="237.3" y1="127.6" x2="232.8" y2="131.4" class="b"/>
<line x1="309.6" y1="303.3" x2="337.1" y2="303.4" class="e"/>
<line x1="226.3" y1="192.6" x2="253.8" y2="192.6" class="e"/>
<line x1="329.9" y1="254.3" x2="332.6" y2="251.8" class="b"/>
<line x1="170.7" y1="109.5" x2="170.5" y2="81.9" class="e"/>
<circle cx="172.0" cy="136.3" r="4.4" fill="url(#gNa)"/>
<line x1="271.0" y1="181.4" x2="268.2" y2="178.4" class="b"/>
<line x1="180.2" y1="88.5" x2="183.7" y2="91.0" class="b"/>
<circle cx="193.3" cy="97.5" r="8.5" fill="url(#gS)"/>
<line x1="281.7" y1="248.0" x2="281.5" y2="220.3" class="e"/>
<line x1="310.0" y1="94.2" x2="317.1" y2="90.5" class="b"/>
<line x1="299.8" y1="143.3" x2="292.7" y2="140.6" class="b"/>
<line x1="270.4" y1="159.7" x2="273.7" y2="153.2" class="b"/>
<line x1="294.5" y1="201.8" x2="298.1" y2="204.2" class="b"/>
<circle cx="171.3" cy="192.4" r="3.5" fill="url(#gP)"/>
<line x1="377.9" y1="277.0" x2="381.2" y2="270.5" class="b"/>
<line x1="366.4" y1="119.9" x2="372.1" y2="123.7" class="b"/>
<circle cx="263.6" cy="173.3" r="8.5" fill="url(#gS)"/>
<circle cx="360.9" cy="116.3" r="8.5" fill="url(#gS)"/>
<line x1="378.6" y1="238.0" x2="384.3" y2="241.8" class="b"/>
<line x1="356.3" y1="120.2" x2="351.8" y2="124.0" class="b"/>
<line x1="348.1" y1="238.4" x2="343.6" y2="242.2" class="b"/>
<line x1="337.1" y1="303.4" x2="364.6" y2="303.4" class="e"/>
<line x1="273.8" y1="184.5" x2="271.0" y2="181.4" class="b"/>
<line x1="253.8" y1="192.6" x2="281.3" y2="192.7" class="e"/>
<line x1="176.6" y1="86.0" x2="180.2" y2="88.5" class="b"/>
<line x1="170.5" y1="81.9" x2="198.0" y2="82.0" class="e"/>
<line x1="221.8" y1="141.0" x2="224.5" y2="138.6" class="b"/>
<line x1="326.4" y1="146.2" x2="329.1" y2="143.7" class="b"/>
<line x1="281.5" y1="220.3" x2="281.3" y2="192.7" class="e"/>
<circle cx="282.8" cy="247.1" r="4.4" fill="url(#gNa)"/>
<line x1="381.8" y1="292.2" x2="379.0" y2="289.2" class="b"/>
<line x1="290.9" y1="199.3" x2="294.5" y2="201.8" class="b"/>
<circle cx="304.0" cy="208.3" r="8.5" fill="url(#gS)"/>
<circle cx="226.7" cy="247.9" r="4.4" fill="url(#gNa)"/>
<line x1="273.7" y1="153.2" x2="276.9" y2="146.7" class="b"/>
<line x1="273.5" y1="131.0" x2="279.2" y2="134.7" class="b"/>
<line x1="381.2" y1="270.5" x2="384.4" y2="264.0" class="b"/>
<line x1="232.8" y1="131.4" x2="228.3" y2="135.3" class="b"/>
<circle cx="282.1" cy="303.2" r="3.5" fill="url(#gP)"/>
<line x1="292.7" y1="140.6" x2="285.5" y2="137.9" class="b"/>
<circle cx="374.3" cy="284.1" r="8.5" fill="url(#gS)"/>
<line x1="173.0" y1="83.6" x2="176.6" y2="86.0" class="b"/>
<line x1="276.6" y1="187.5" x2="273.8" y2="184.5" class="b"/>
<line x1="281.3" y1="192.7" x2="281.1" y2="165.1" class="e"/>
<line x1="384.6" y1="295.3" x2="381.8" y2="292.2" class="b"/>
<line x1="364.6" y1="303.4" x2="392.1" y2="303.5" class="e"/>
<line x1="287.4" y1="196.8" x2="290.9" y2="199.3" class="b"/>
<line x1="281.3" y1="192.7" x2="308.8" y2="192.8" class="e"/>
<line x1="332.6" y1="251.8" x2="335.3" y2="249.4" class="b"/>
<line x1="198.0" y1="82.0" x2="225.5" y2="82.0" class="e"/>
<line x1="276.9" y1="146.7" x2="280.2" y2="140.3" class="b"/>
<line x1="299.2" y1="105.3" x2="295.4" y2="112.1" class="b"/>
<line x1="372.1" y1="123.7" x2="377.8" y2="127.4" class="b"/>
<line x1="384.4" y1="264.0" x2="387.7" y2="257.5" class="b"/>
<line x1="384.3" y1="241.8" x2="390.0" y2="245.5" class="b"/>
<line x1="351.8" y1="124.0" x2="347.3" y2="127.9" class="b"/>
<line x1="295.4" y1="112.1" x2="291.7" y2="119.0" class="b"/>
<line x1="343.6" y1="242.2" x2="339.1" y2="246.1" class="b"/>
<line x1="291.7" y1="119.0" x2="287.9" y2="125.8" class="b"/>
<line x1="279.4" y1="190.6" x2="276.6" y2="187.5" class="b"/>
<line x1="281.1" y1="165.1" x2="280.9" y2="137.4" class="e"/>
<line x1="283.8" y1="194.4" x2="287.4" y2="196.8" class="b"/>
<line x1="287.9" y1="125.8" x2="284.2" y2="132.7" class="b"/>
<line x1="387.4" y1="298.3" x2="384.6" y2="295.3" class="b"/>
<line x1="392.1" y1="303.5" x2="391.9" y2="275.9" class="e"/>
<line x1="308.8" y1="192.8" x2="336.3" y2="192.8" class="e"/>
<line x1="225.5" y1="82.0" x2="253.0" y2="82.1" class="e"/>
<line x1="329.1" y1="143.7" x2="331.8" y2="141.3" class="b"/>
<line x1="387.7" y1="257.5" x2="391.0" y2="251.1" class="b"/>
<line x1="280.9" y1="137.4" x2="280.7" y2="109.8" class="e"/>
<line x1="293.7" y1="91.2" x2="297.3" y2="93.7" class="b"/>
<circle cx="170.5" cy="81.9" r="3.5" fill="url(#gP)"/>
<line x1="390.2" y1="301.4" x2="387.4" y2="298.3" class="b"/>
<line x1="391.9" y1="275.9" x2="391.7" y2="248.2" class="e"/>
<line x1="377.1" y1="166.4" x2="380.4" y2="159.9" class="b"/>
<line x1="377.8" y1="127.4" x2="383.5" y2="131.2" class="b"/>
<line x1="347.3" y1="127.9" x2="342.8" y2="131.7" class="b"/>
<line x1="336.3" y1="192.8" x2="363.8" y2="192.9" class="e"/>
<line x1="253.0" y1="82.1" x2="280.5" y2="82.2" class="e"/>
<line x1="280.7" y1="109.8" x2="280.5" y2="82.2" class="e"/>
<circle cx="282.0" cy="136.6" r="4.4" fill="url(#gNa)"/>
<line x1="381.0" y1="181.7" x2="378.2" y2="178.6" class="b"/>
<line x1="290.2" y1="88.8" x2="293.7" y2="91.2" class="b"/>
<circle cx="303.3" cy="97.8" r="8.5" fill="url(#gS)"/>
<circle cx="225.9" cy="137.3" r="4.4" fill="url(#gNa)"/>
<line x1="391.7" y1="248.2" x2="391.5" y2="220.6" class="e"/>
<line x1="380.4" y1="159.9" x2="383.7" y2="153.5" class="b"/>
<circle cx="281.3" cy="192.7" r="3.5" fill="url(#gP)"/>
<circle cx="373.6" cy="173.5" r="8.5" fill="url(#gS)"/>
<line x1="383.8" y1="184.7" x2="381.0" y2="181.7" class="b"/>
<line x1="363.8" y1="192.9" x2="391.3" y2="192.9" class="e"/>
<line x1="286.6" y1="86.3" x2="290.2" y2="88.8" class="b"/>
<line x1="280.5" y1="82.2" x2="308.0" y2="82.2" class="e"/>
<line x1="331.8" y1="141.3" x2="334.5" y2="138.9" class="b"/>
<line x1="391.5" y1="220.6" x2="391.3" y2="192.9" class="e"/>
<circle cx="392.8" cy="247.4" r="4.4" fill="url(#gNa)"/>
<circle cx="336.7" cy="248.1" r="4.4" fill="url(#gNa)"/>
<line x1="383.7" y1="153.5" x2="386.9" y2="147.0" class="b"/>
<line x1="383.5" y1="131.2" x2="389.2" y2="135.0" class="b"/>
<line x1="342.8" y1="131.7" x2="338.3" y2="135.5" class="b"/>
<circle cx="392.1" cy="303.5" r="3.5" fill="url(#gP)"/>
<line x1="283.0" y1="83.8" x2="286.6" y2="86.3" class="b"/>
<line x1="386.6" y1="187.8" x2="383.8" y2="184.7" class="b"/>
<line x1="391.3" y1="192.9" x2="391.1" y2="165.3" class="e"/>
<line x1="308.0" y1="82.2" x2="335.5" y2="82.3" class="e"/>
<line x1="386.9" y1="147.0" x2="390.2" y2="140.5" class="b"/>
<line x1="389.4" y1="190.9" x2="386.6" y2="187.8" class="b"/>
<line x1="391.1" y1="165.3" x2="390.9" y2="137.7" class="e"/>
<line x1="335.5" y1="82.3" x2="363.0" y2="82.3" class="e"/>
<line x1="390.9" y1="137.7" x2="390.7" y2="110.0" class="e"/>
<circle cx="280.5" cy="82.2" r="3.5" fill="url(#gP)"/>
<line x1="363.0" y1="82.3" x2="390.5" y2="82.4" class="e"/>
<line x1="390.7" y1="110.0" x2="390.5" y2="82.4" class="e"/>
<circle cx="392.0" cy="136.8" r="4.4" fill="url(#gNa)"/>
<circle cx="335.9" cy="137.6" r="4.4" fill="url(#gNa)"/>
<circle cx="391.3" cy="192.9" r="3.5" fill="url(#gP)"/>
<circle cx="390.5" cy="82.4" r="3.5" fill="url(#gP)"/>
</svg></div>
<svg class="a" style="left:40px;top:90px" width="70" height="50" viewBox="40 90 70 50"><path d="M56.2 128.5V109M56.2 128.5H76" stroke="#d8d8d8" stroke-width="0.9"/><path d="M53.9 110.5L56.2 102.8 58.5 110.5z" fill="#f0f0f0"/><path d="M75 126.2L83 128.5 75 130.8z" fill="#f0f0f0"/><circle cx="55.6" cy="128.6" r="2.2" fill="#e4e4e4"/></svg>
<div class="t" style="left:56.60px;top:91.78px;font-size:9px;color:#c4c4c4;">b</div>
<div class="t" style="left:87.00px;top:120.78px;font-size:9px;color:#c4c4c4;">a</div>
<div class="a" style="left:579.3px;top:406.3px;width:33.5px;height:45px;border:1px solid #555;border-bottom:none"></div>
<svg class="a" style="left:578px;top:405px" width="16" height="46" viewBox="0 0 16 46"><defs><radialGradient id="lp" cx=".42" cy=".36" r=".62"><stop offset="0" stop-color="#ff90ff"/><stop offset=".45" stop-color="#f010f0"/><stop offset="1" stop-color="#a000a0"/></radialGradient><radialGradient id="ly" cx=".42" cy=".36" r=".62"><stop offset="0" stop-color="#ffffa0"/><stop offset=".45" stop-color="#f4f400"/><stop offset="1" stop-color="#b8b000"/></radialGradient><radialGradient id="lw" cx=".42" cy=".36" r=".62"><stop offset="0" stop-color="#fff"/><stop offset=".45" stop-color="#e0e0e0"/><stop offset="1" stop-color="#909090"/></radialGradient></defs><circle cx="7.5" cy="8.4" r="6" fill="url(#lp)"/><circle cx="7.5" cy="23.8" r="6" fill="url(#ly)"/><circle cx="7.5" cy="38.9" r="6" fill="url(#lw)"/></svg>
<div class="t" style="left:592.00px;top:409.49px;font-size:8.4px;color:#8c8c8c;transform:scaleX(0.9577);transform-origin:0 0;">P+5</div>
<div class="t" style="left:592.00px;top:424.49px;font-size:8.4px;color:#8c8c8c;transform:scaleX(0.9198);transform-origin:0 0;">S-2</div>
<div class="t" style="left:592.00px;top:439.69px;font-size:8.4px;color:#8c8c8c;transform:scaleX(0.9079);transform-origin:0 0;">Na+1</div>
<div class="a" id="rbg"></div>
<div class="panel" style="left:616.5px;top:71.5px;width:340px;height:212.5px"><div class="ph" style="height:16px"></div></div>
<div class="t" style="left:621.50px;top:75.72px;font-size:8.6px;color:#1a1a1a;transform:scaleX(0.8586);transform-origin:0 0;">Data sheet</div>
<div class="a" style="left:661px;top:84.5px;width:3px;height:1px;background:#a0a0a0"></div>
<svg class="a" style="left:945.3px;top:76.9px" width="8" height="7" viewBox="0 0 8 7"><path d="M1 .8l6 5.4M7 .8L1 6.2" stroke="#606060" stroke-width="1.4"/></svg>
<div class="a" style="left:946px;top:88px;width:10px;height:195px;background:#f0f0f0;border-left:1px solid #e6e6e6"></div><svg class="a" style="left:948.3px;top:92.5px" width="6" height="4" viewBox="0 0 6 4"><path d="M.5 3.5L3 .5 5.5 3.5z" fill="#3a3a3a"/></svg><svg class="a" style="left:948.3px;top:274.5px" width="6" height="4" viewBox="0 0 6 4"><path d="M.5 .5L3 3.5 5.5 .5z" fill="#3a3a3a"/></svg><div class="a" style="left:946.5px;top:100px;width:9px;height:163px;background:linear-gradient(90deg,#f2f2f2 0,#e4e4e4 50%,#cfcfcf 100%);border:1px solid #a9a9a9;border-radius:1.5px"></div><div class="a" style="left:948.5px;top:179.5px;width:5px;height:5px;background:repeating-linear-gradient(180deg,#7a7a7a 0 1px,transparent 1px 2px)"></div>
<div class="bar" style="top:99px;height:10px;width:146.29999999999995px"></div>
<div class="bar" style="top:123.3px;height:9.200000000000003px;width:146.29999999999995px"></div>
<div class="bar" style="top:148px;height:9.599999999999994px;width:146.29999999999995px"></div>
<div class="bar" style="top:215.8px;height:9.599999999999994px;width:173.39999999999998px"></div>
<div class="bar" style="top:161.8px;height:9px;width:49.8px"></div>
<div class="bar" style="top:172px;height:31.3px;width:49.8px"></div>
<div class="t" style="left:684.70px;top:99.67px;font-size:8.3px;color:#1a1a1a;transform:scaleX(0.9383);transform-origin:0 0;font-weight:bold;">General</div>
<div class="t" style="left:667.20px;top:124.07px;font-size:8.3px;color:#1a1a1a;transform:scaleX(0.8953);transform-origin:0 0;font-weight:bold;">Bibliographic data</div>
<div class="t" style="left:680.40px;top:148.57px;font-size:8.3px;color:#1a1a1a;transform:scaleX(0.8765);transform-origin:0 0;font-weight:bold;">Phase data</div>
<div class="t" style="left:625.80px;top:162.67px;font-size:8.3px;color:#1a1a1a;transform:scaleX(0.9346);transform-origin:0 0;font-weight:bold;">Space-group</div>
<div class="t" style="left:625.80px;top:183.87px;font-size:8.3px;color:#1a1a1a;transform:scaleX(0.9002);transform-origin:0 0;font-weight:bold;">Cell</div>
<div class="t" style="left:678.30px;top:162.47px;font-size:8.3px;color:#1a1a1a;transform:scaleX(0.9350);transform-origin:0 0;">P -4 21 c (114) - tetragonal</div>
<div class="t" style="left:678.30px;top:172.87px;font-size:8.3px;color:#1a1a1a;transform:scaleX(0.9059);transform-origin:0 0;">a=6.9520 &#197; c=7.0757 &#197;</div>
<div class="t" style="left:678.30px;top:182.77px;font-size:8.3px;color:#1a1a1a;transform:scaleX(0.9323);transform-origin:0 0;">c/a=1.0178</div>
<div class="t" style="left:678.30px;top:194.27px;font-size:8.3px;color:#1a1a1a;transform:scaleX(0.9172);transform-origin:0 0;">V=341.97 &#197;</div>
<div class="t" style="left:719.00px;top:191.84px;font-size:5.5px;color:#1a1a1a;">3</div>
<div class="t" style="left:677.30px;top:216.67px;font-size:8.3px;color:#1a1a1a;transform:scaleX(0.9392);transform-origin:0 0;font-weight:bold;">Atomic parameters</div>
<div class="bar" style="left:624px;top:229.5px;height:9.8px;width:23.5px"></div>
<div class="bar" style="left:648.5px;top:229.5px;height:9.8px;width:15.0px"></div>
<div class="bar" style="left:664.5px;top:229.5px;height:9.8px;width:24.5px"></div>
<div class="bar" style="left:690px;top:229.5px;height:9.8px;width:16px"></div>
<div class="bar" style="left:707px;top:229.5px;height:9.8px;width:30.5px"></div>
<div class="bar" style="left:738.5px;top:229.5px;height:9.8px;width:29.299999999999955px"></div>
<div class="bar" style="left:768.8px;top:229.5px;height:9.8px;width:28.600000000000023px"></div>
<div class="t" style="left:625.40px;top:230.77px;font-size:8.3px;color:#1a1a1a;transform:scaleX(0.9244);transform-origin:0 0;font-weight:bold;">Atom</div>
<div class="t" style="left:648.60px;top:230.77px;font-size:8.3px;color:#1a1a1a;transform:scaleX(0.9794);transform-origin:0 0;font-weight:bold;">Ox.</div>
<div class="t" style="left:664.80px;top:230.77px;font-size:8.3px;color:#1a1a1a;transform:scaleX(0.9604);transform-origin:0 0;font-weight:bold;">Wyck.</div>
<div class="t" style="left:690.20px;top:230.77px;font-size:8.3px;color:#1a1a1a;transform:scaleX(0.9922);transform-origin:0 0;font-weight:bold;">Site</div>
<div class="t" style="left:716.40px;top:230.77px;font-size:8.3px;color:#1a1a1a;transform:scaleX(1.0219);transform-origin:0 0;font-weight:bold;">x/a</div>
<div class="t" style="left:746.90px;top:230.77px;font-size:8.3px;color:#1a1a1a;transform:scaleX(0.9500);transform-origin:0 0;font-weight:bold;">y/b</div>
<div class="t" style="left:776.60px;top:230.77px;font-size:8.3px;color:#1a1a1a;transform:scaleX(1.0110);transform-origin:0 0;font-weight:bold;">z/c</div>
<div class="t" style="left:627.90px;top:240.57px;font-size:8.3px;color:#1a1a1a;">P1</div>
<div class="t" style="left:651.30px;top:240.57px;font-size:8.3px;color:#1a1a1a;">5</div>
<div class="t" style="left:667.30px;top:240.57px;font-size:8.3px;color:#1a1a1a;">2a</div>
<div class="t" style="left:693.50px;top:240.57px;font-size:8.3px;color:#1a1a1a;">-4..</div>
<div class="t" style="left:711.00px;top:240.57px;font-size:8.3px;color:#1a1a1a;">0</div>
<div class="t" style="left:741.30px;top:240.57px;font-size:8.3px;color:#1a1a1a;">0</div>
<div class="t" style="left:771.20px;top:240.57px;font-size:8.3px;color:#1a1a1a;">0</div>
<div class="t" style="left:627.90px;top:251.14px;font-size:8.3px;color:#1a1a1a;">S1</div>
<div class="t" style="left:649.30px;top:251.14px;font-size:8.3px;color:#1a1a1a;">-2</div>
<div class="t" style="left:667.30px;top:251.14px;font-size:8.3px;color:#1a1a1a;">8e</div>
<div class="t" style="left:692.90px;top:251.14px;font-size:8.3px;color:#1a1a1a;">1</div>
<div class="t" style="left:711.00px;top:251.14px;font-size:8.3px;color:#1a1a1a;transform:scaleX(0.8400);transform-origin:0 0;">0.15808</div>
<div class="t" style="left:741.30px;top:251.14px;font-size:8.3px;color:#1a1a1a;transform:scaleX(0.8400);transform-origin:0 0;">0.18291</div>
<div class="t" style="left:771.20px;top:251.14px;font-size:8.3px;color:#1a1a1a;transform:scaleX(0.8400);transform-origin:0 0;">0.16573</div>
<div class="t" style="left:627.90px;top:261.71px;font-size:8.3px;color:#1a1a1a;">Na1</div>
<div class="t" style="left:651.30px;top:261.71px;font-size:8.3px;color:#1a1a1a;">1</div>
<div class="t" style="left:667.30px;top:261.71px;font-size:8.3px;color:#1a1a1a;">4d</div>
<div class="t" style="left:693.50px;top:261.71px;font-size:8.3px;color:#1a1a1a;">2..</div>
<div class="t" style="left:711.00px;top:261.71px;font-size:8.3px;color:#1a1a1a;">1/2</div>
<div class="t" style="left:741.30px;top:261.71px;font-size:8.3px;color:#1a1a1a;">0</div>
<div class="t" style="left:771.20px;top:261.71px;font-size:8.3px;color:#1a1a1a;transform:scaleX(0.8400);transform-origin:0 0;">0.07281</div>
<div class="t" style="left:627.90px;top:272.28px;font-size:8.3px;color:#1a1a1a;">Na2</div>
<div class="t" style="left:651.30px;top:272.28px;font-size:8.3px;color:#1a1a1a;">1</div>
<div class="t" style="left:667.30px;top:272.28px;font-size:8.3px;color:#1a1a1a;">2b</div>
<div class="t" style="left:693.50px;top:272.28px;font-size:8.3px;color:#1a1a1a;">-4..</div>
<div class="t" style="left:711.00px;top:272.28px;font-size:8.3px;color:#1a1a1a;">0</div>
<div class="t" style="left:741.30px;top:272.28px;font-size:8.3px;color:#1a1a1a;">0</div>
<div class="t" style="left:771.20px;top:272.28px;font-size:8.3px;color:#1a1a1a;">1/2</div>
<div class="panel" style="left:616.5px;top:286.5px;width:340px;height:184px"><div class="ph" style="height:13px"></div></div>
<div class="t" style="left:621.60px;top:289.12px;font-size:8.6px;color:#1a1a1a;transform:scaleX(0.8731);transform-origin:0 0;">Properties</div>
<svg class="a" style="left:945.3px;top:290.9px" width="8" height="7" viewBox="0 0 8 7"><path d="M1 .8l6 5.4M7 .8L1 6.2" stroke="#606060" stroke-width="1.4"/></svg>
<div class="a" style="left:618px;top:300px;width:338px;height:15px;background:#fff;border:1px solid #dadada"></div>
<div class="t" style="left:621.60px;top:303.70px;font-size:7.8px;color:#1a1a1a;transform:scaleX(0.8960);transform-origin:0 0;">Structure picture contents</div>
<svg class="a" style="left:945.5px;top:306px" width="6" height="4" viewBox="0 0 6 4"><path d="M0 0h6L3 3.5z" fill="#1a1a1a"/></svg>
<div class="a" style="left:617.5px;top:315.5px;width:328.5px;height:14.2px;background:linear-gradient(180deg,#ffffff 0,#f6f6f6 50%,#ececec 100%);border-bottom:1px solid #d4d4d4"></div>
<div class="a" style="left:814.7px;top:316px;width:1px;height:154px;background:#e6e6e6"></div>
<div class="a" style="left:848px;top:316px;width:1px;height:154px;background:#e6e6e6"></div>
<div class="a" style="left:903px;top:316px;width:1px;height:154px;background:#e6e6e6"></div>
<div class="a" style="left:617.5px;top:342.40px;width:328.5px;height:1px;background:#ececec"></div>
<div class="t" style="left:621.00px;top:332.97px;font-size:8.3px;color:#1a1a1a;transform:scaleX(0.9340);transform-origin:0 0;">Atomic parameters (asym. sites)</div>
<div class="t" style="left:839.67px;top:332.97px;font-size:8.3px;color:#1a1a1a;">4</div>
<div class="t" style="left:889.16px;top:332.97px;font-size:8.3px;color:#1a1a1a;">(4)</div>
<div class="a" style="left:617.5px;top:355.02px;width:328.5px;height:1px;background:#ececec"></div>
<div class="t" style="left:621.00px;top:345.59px;font-size:8.3px;color:#1a1a1a;transform:scaleX(0.9330);transform-origin:0 0;">Symmetry records</div>
<div class="t" style="left:839.67px;top:345.59px;font-size:8.3px;color:#1a1a1a;">8</div>
<div class="a" style="left:617.5px;top:367.64px;width:328.5px;height:1px;background:#ececec"></div>
<div class="t" style="left:621.00px;top:358.21px;font-size:8.3px;color:#1a1a1a;transform:scaleX(0.9726);transform-origin:0 0;">Atoms in unit cell</div>
<div class="t" style="left:835.07px;top:358.21px;font-size:8.3px;color:#1a1a1a;">16</div>
<div class="a" style="left:617.5px;top:380.26px;width:328.5px;height:1px;background:#ececec"></div>
<div class="t" style="left:621.00px;top:370.83px;font-size:8.3px;color:#1a1a1a;transform:scaleX(0.9609);transform-origin:0 0;">Bond parameters (non-bonding contacts, H-bonds)</div>
<div class="t" style="left:839.67px;top:370.83px;font-size:8.3px;color:#1a1a1a;">0</div>
<div class="t" style="left:879.92px;top:370.83px;font-size:8.3px;color:#1a1a1a;">(0, 0)</div>
<div class="a" style="left:617.5px;top:392.88px;width:328.5px;height:1px;background:#ececec"></div>
<div class="t" style="left:621.00px;top:383.45px;font-size:8.3px;color:#1a1a1a;transform:scaleX(0.9767);transform-origin:0 0;">Molecular units (mol./polym. sites)</div>
<div class="t" style="left:839.67px;top:383.45px;font-size:8.3px;color:#1a1a1a;">1</div>
<div class="t" style="left:879.92px;top:383.45px;font-size:8.3px;color:#1a1a1a;">(0, 4)</div>
<div class="a" style="left:617.5px;top:405.50px;width:328.5px;height:1px;background:#ececec"></div>
<div class="t" style="left:621.00px;top:396.07px;font-size:8.3px;color:#1a1a1a;transform:scaleX(0.9371);transform-origin:0 0;">Created atoms</div>
<div class="t" style="left:830.46px;top:396.07px;font-size:8.3px;color:#1a1a1a;">177</div>
<div class="a" style="left:617.5px;top:418.12px;width:328.5px;height:1px;background:#ececec"></div>
<div class="t" style="left:621.00px;top:408.69px;font-size:8.3px;color:#1a1a1a;transform:scaleX(0.9067);transform-origin:0 0;">Created bonds (H-bonds/contacts)</div>
<div class="t" style="left:830.46px;top:408.69px;font-size:8.3px;color:#1a1a1a;">304</div>
<div class="t" style="left:879.92px;top:408.69px;font-size:8.3px;color:#1a1a1a;">(0, 0)</div>
<div class="a" style="left:617.5px;top:430.74px;width:328.5px;height:1px;background:#ececec"></div>
<div class="t" style="left:621.00px;top:421.31px;font-size:8.3px;color:#1a1a1a;transform:scaleX(0.9442);transform-origin:0 0;">Created molecules (complete)</div>
<div class="t" style="left:839.67px;top:421.31px;font-size:8.3px;color:#1a1a1a;">0</div>
<div class="t" style="left:889.16px;top:421.31px;font-size:8.3px;color:#1a1a1a;">(0)</div>
<div class="a" style="left:617.5px;top:443.36px;width:328.5px;height:1px;background:#ececec"></div>
<div class="t" style="left:621.00px;top:433.93px;font-size:8.3px;color:#1a1a1a;transform:scaleX(0.9375);transform-origin:0 0;">Cell corners</div>
<div class="t" style="left:835.07px;top:433.93px;font-size:8.3px;color:#1a1a1a;">27</div>
<div class="a" style="left:617.5px;top:455.98px;width:328.5px;height:1px;background:#ececec"></div>
<div class="t" style="left:621.00px;top:446.55px;font-size:8.3px;color:#1a1a1a;transform:scaleX(0.9307);transform-origin:0 0;">Cell edges</div>
<div class="t" style="left:835.07px;top:446.55px;font-size:8.3px;color:#1a1a1a;">54</div>
<div class="a" style="left:617.5px;top:468.60px;width:328.5px;height:1px;background:#ececec"></div>
<div class="t" style="left:621.00px;top:459.17px;font-size:8.3px;color:#1a1a1a;transform:scaleX(0.9594);transform-origin:0 0;">Atom labels</div>
<div class="t" style="left:839.67px;top:459.17px;font-size:8.3px;color:#1a1a1a;">0</div>
<div class="a" style="left:946px;top:315.5px;width:10px;height:154.0px;background:#f0f0f0;border-left:1px solid #e6e6e6"></div><svg class="a" style="left:948.3px;top:320.0px" width="6" height="4" viewBox="0 0 6 4"><path d="M.5 3.5L3 .5 5.5 3.5z" fill="#3a3a3a"/></svg><svg class="a" style="left:948.3px;top:461.0px" width="6" height="4" viewBox="0 0 6 4"><path d="M.5 .5L3 3.5 5.5 .5z" fill="#3a3a3a"/></svg><div class="a" style="left:946.5px;top:328.6px;width:9px;height:73.0px;background:linear-gradient(90deg,#f2f2f2 0,#e4e4e4 50%,#cfcfcf 100%);border:1px solid #a9a9a9;border-radius:1.5px"></div><div class="a" style="left:948.5px;top:363.1px;width:5px;height:5px;background:repeating-linear-gradient(180deg,#7a7a7a 0 1px,transparent 1px 2px)"></div>
<div class="a" id="btabs"></div>
<div class="a" style="left:21px;top:454.5px;width:10px;height:14.5px;background:linear-gradient(180deg,#fafafa,#e8e8e8);border:1px solid #cfcfcf;border-radius:2px"></div>
<svg class="a" style="left:22.5px;top:456.5px" width="7" height="11" viewBox="0 0 7 11"><path d="M.3 4.3L3.5 .8 6.7 4.3zM.3 6.2L3.5 9.7 6.7 6.2z" fill="#8a8a8a"/></svg>
<div class="a" style="left:33px;top:454.5px;width:13.5px;height:14.5px;background:linear-gradient(180deg,#fafafa,#e8e8e8);border:1px solid #d6d6d6"></div>
<svg class="a" style="left:35.5px;top:459px" width="8" height="6" viewBox="0 0 8 6"><path d="M.5 .5h7v5h-7zM3 .5v5M5.5 .5v5M.5 3h7" fill="none" stroke="#8a8a8a" stroke-width=".8"/></svg>
<div class="bt" style="left:48px;width:79px"></div>
<div class="t" style="left:52.00px;top:457.49px;font-size:8.4px;color:#2a2a2a;transform:scaleX(0.8378);transform-origin:0 0;">Picture 1</div>
<div class="bt" style="left:127px;width:77px"></div>
<div class="t" style="left:131.00px;top:457.49px;font-size:8.4px;color:#2a2a2a;transform:scaleX(0.8416);transform-origin:0 0;">Unit cell with PO4 po...</div>
<div class="bt" style="left:204px;width:79px"></div>
<div class="t" style="left:208.70px;top:457.49px;font-size:8.4px;color:#2a2a2a;transform:scaleX(0.8384);transform-origin:0 0;">Super cell 2x2x2 wit...</div>
<div class="bt" style="left:283px;width:77.69999999999999px"></div>
<div class="t" style="left:287.20px;top:457.49px;font-size:8.4px;color:#2a2a2a;transform:scaleX(0.8520);transform-origin:0 0;">Network with broken...</div>
<div class="bt" style="left:360.7px;width:79.30000000000001px"></div>
<div class="t" style="left:365.60px;top:457.49px;font-size:8.4px;color:#2a2a2a;transform:scaleX(0.8378);transform-origin:0 0;">Picture 5</div>
<div class="bt" style="left:440px;width:79px"></div>
<div class="t" style="left:445.00px;top:457.49px;font-size:8.4px;color:#2a2a2a;transform:scaleX(0.8287);transform-origin:0 0;">Picture 6</div>
<div class="bt" style="left:519px;width:67px"></div>
<div class="t" style="left:522.60px;top:457.49px;font-size:8.4px;color:#2a2a2a;transform:scaleX(0.8439);transform-origin:0 0;">Picture 7</div>
<svg class="a" style="left:591.5px;top:457.5px" width="20" height="8" viewBox="0 0 20 8"><path d="M5 .5L1.5 4 5 7.5z" fill="#6a6a6a"/><path d="M14 .5L17.5 4 14 7.5z" fill="#6a6a6a"/></svg>
<div class="a" id="btrow"></div>
<div class="a" id="btb"></div>
<div class="a" style="left:9px;top:473px;width:2px;height:11px;background:repeating-linear-gradient(180deg,#5a6678 0 1px,transparent 1px 3px)"></div>
<svg class="a" style="left:15px;top:472.5px" width="12" height="12" viewBox="0 0 12 12"><rect x=".5" y="1" width="10" height="10" fill="#fdfbe8" stroke="#8a90a8" stroke-width=".7"/><circle cx="5.5" cy="6" r="3" fill="#f0c020"/><circle cx="5.5" cy="6" r="1.4" fill="#fff8c0"/></svg>
<svg class="a" style="left:28px;top:472.5px" width="12" height="12" viewBox="0 0 12 12"><rect x=".5" y="1" width="10" height="9" fill="#f0f4fc" stroke="#3a4e88" stroke-width=".8"/><rect x="1" y="1.5" width="9" height="1.8" fill="#5a7ad0"/><path d="M5 8h4V6l3 3-3 3v-2H5z" fill="#20a0c8"/></svg>
<svg class="a" style="left:41.5px;top:472.5px" width="12" height="12" viewBox="0 0 12 12"><path d="M2 11l7-7" stroke="#202020" stroke-width="1.6"/><circle cx="4" cy="4" r="2" fill="#e8d020"/><circle cx="3" cy="8" r="1.5" fill="#e8d020"/><circle cx="8" cy="2" r="1.2" fill="#e8d020"/><circle cx="1.5" cy="5" r="1" fill="#c0a010"/></svg>
<svg class="a" style="left:56.5px;top:472.5px" width="12" height="12" viewBox="0 0 12 12"><rect x=".5" y=".5" width="10" height="9" fill="#e4e8f0" stroke="#3a4e88" stroke-width=".8"/><rect x="2" y="3" width="5" height="4" fill="#d0b080"/><path d="M3 11l6-6" stroke="#a02020" stroke-width="1.5"/></svg>
<svg class="a" style="left:70.5px;top:478px" width="4" height="3" viewBox="0 0 4 3"><path d="M0 0h4L2 2.5z" fill="#333"/></svg>
<div class="sep" style="left:77.5px;top:472.5px"></div>
<svg class="a" style="left:83px;top:472.5px" width="12" height="12" viewBox="0 0 12 12"><path d="M1 6l5-5 5 5-5 5z" fill="#f4e890" stroke="#202020" stroke-width="1"/><path d="M4 9l5-5" stroke="#202020" stroke-width="1"/></svg>
<svg class="a" style="left:96.5px;top:472.5px" width="12" height="12" viewBox="0 0 12 12"><circle cx="3" cy="3" r="2.6" fill="#f0e000" stroke="#202020" stroke-width=".7"/><circle cx="9" cy="3" r="2.6" fill="#f0e000" stroke="#202020" stroke-width=".7"/><circle cx="3" cy="9" r="2.6" fill="#f0e000" stroke="#202020" stroke-width=".7"/><circle cx="9" cy="9" r="2.6" fill="#f0e000" stroke="#202020" stroke-width=".7"/><path d="M4.5 6h3M6 4.5v3" stroke="#202020"/></svg>
<svg class="a" style="left:111px;top:472.5px" width="12" height="12" viewBox="0 0 12 12"><path d="M0 6h5M2.5 3.5v5" stroke="#202020" stroke-width="1.2"/><circle cx="8.5" cy="6" r="3" fill="#f0e000" stroke="#202020" stroke-width=".7"/></svg>
<svg class="a" style="left:125.5px;top:472.5px" width="12" height="12" viewBox="0 0 12 12"><path d="M3 4a2 2 0 114 0c0 1.5-2 1.5-2 3" fill="none" stroke="#202020" stroke-width="1.1"/><circle cx="3" cy="9.5" r="2" fill="none" stroke="#202020"/><circle cx="9" cy="9.5" r="2" fill="none" stroke="#202020"/></svg>
<svg class="a" style="left:140px;top:472.5px" width="12" height="12" viewBox="0 0 12 12"><rect x="2" y="2" width="8" height="8" fill="#8090e0" stroke="#2030b0" stroke-width="1"/><path d="M2 2l8 8M10 2l-8 8" stroke="#2030b0"/><circle cx="2" cy="2" r="1.6" fill="#2030b0"/><circle cx="10" cy="2" r="1.6" fill="#2030b0"/><circle cx="2" cy="10" r="1.6" fill="#2030b0"/><circle cx="10" cy="10" r="1.6" fill="#2030b0"/></svg>
<svg class="a" style="left:154.5px;top:472.5px" width="12" height="12" viewBox="0 0 12 12"><path d="M6 1v4M3 9l3-4 3 4" fill="none" stroke="#a0a4ac"/><circle cx="6" cy="2" r="1.5" fill="none" stroke="#a0a4ac"/><circle cx="3" cy="9.5" r="1.8" fill="none" stroke="#a0a4ac"/><circle cx="9" cy="9.5" r="1.8" fill="none" stroke="#a0a4ac"/></svg>
<svg class="a" style="left:169.5px;top:472.5px" width="12" height="12" viewBox="0 0 12 12"><circle cx="6" cy="6" r="4.8" fill="#d8d8c8" stroke="#606060" stroke-width=".8"/><circle cx="6" cy="6" r="2.8" fill="#a0a000" stroke="#303000" stroke-width=".6"/></svg>
<svg class="a" style="left:183.5px;top:478px" width="4" height="3" viewBox="0 0 4 3"><path d="M0 0h4L2 2.5z" fill="#333"/></svg>
<div class="sep" style="left:191px;top:472.5px"></div>
<svg class="a" style="left:195.5px;top:472.5px" width="12" height="12" viewBox="0 0 12 12"><path d="M3 1h6l3 5-3 5H3L0 6z" fill="none" stroke="#2030d0" stroke-width="1.5"/></svg>
<svg class="a" style="left:209.5px;top:472.5px" width="12" height="12" viewBox="0 0 12 12"><path d="M3 1h6l3 5-3 5H3L0 6z" fill="none" stroke="#2030d0" stroke-width="1.5"/><path d="M9 1l3 5-3 5" fill="none" stroke="#e8e000" stroke-width="1.6"/></svg>
<svg class="a" style="left:224px;top:472.5px" width="12" height="12" viewBox="0 0 12 12"><ellipse cx="6" cy="3.5" rx="4" ry="2.5" fill="none" stroke="#2030b0" stroke-width="1.2"/><ellipse cx="6" cy="8.5" rx="4" ry="2.5" fill="none" stroke="#2030b0" stroke-width="1.2"/><circle cx="3" cy="6" r="1.5" fill="#8090e0"/></svg>
<svg class="a" style="left:239px;top:472.5px" width="12" height="12" viewBox="0 0 12 12"><path d="M1 1l10 10M11 1L1 11" stroke="#1a2aa0" stroke-width="2"/><path d="M1 6h10M6 1v10" stroke="#1a2aa0" stroke-width="1"/></svg>
<svg class="a" style="left:253.5px;top:472.5px" width="12" height="12" viewBox="0 0 12 12"><path d="M1 1l10 10M11 1L1 11" stroke="#c01818" stroke-width="2"/><path d="M1 6h10M6 1v10" stroke="#303030" stroke-width="1"/></svg>
<div class="sep" style="left:268px;top:472.5px"></div>
<svg class="a" style="left:271px;top:472.5px" width="12" height="12" viewBox="0 0 12 12"><path d="M2 10l7-7" stroke="#2030b0" stroke-width="1.3"/><circle cx="9" cy="3" r="2.5" fill="#f0e000" stroke="#404000" stroke-width=".5"/><circle cx="2.5" cy="9.5" r="2" fill="none" stroke="#2030b0"/></svg>
<svg class="a" style="left:286px;top:472.5px" width="12" height="12" viewBox="0 0 12 12"><rect x="2.5" y="2.5" width="7" height="7" fill="none" stroke="#2030b0" stroke-width="1.2"/><path d="M1 1l10 10M11 1L1 11" stroke="#2030b0" stroke-width=".8"/><circle cx="6" cy="6" r="1.8" fill="#f0e000"/></svg>
<svg class="a" style="left:301px;top:472.5px" width="12" height="12" viewBox="0 0 12 12"><ellipse cx="5" cy="8" rx="4" ry="2.8" fill="none" stroke="#303030" stroke-width="1.1"/><ellipse cx="7" cy="4" rx="4" ry="2.8" fill="none" stroke="#e8e000" stroke-width="1.3"/></svg>
<svg class="a" style="left:315.5px;top:472.5px" width="12" height="12" viewBox="0 0 12 12"><ellipse cx="5" cy="8" rx="4" ry="2.8" fill="none" stroke="#a8acb4" stroke-width="1"/><ellipse cx="7" cy="4" rx="4" ry="2.8" fill="none" stroke="#a8acb4" stroke-width="1"/></svg>
<div class="sep" style="left:330.5px;top:472.5px"></div>
<svg class="a" style="left:334px;top:472.5px" width="12" height="12" viewBox="0 0 12 12"><rect x="1" y="3" width="7" height="7" fill="#b8c4f0" stroke="#2030b0" stroke-width="1"/><path d="M1 3l3-2h7v7l-3 2M8 3l3-2" fill="none" stroke="#2030b0" stroke-width="1"/></svg>
<svg class="a" style="left:349px;top:472.5px" width="12" height="12" viewBox="0 0 12 12"><path d="M6 .5l5 5.5-5 5.5-5-5.5z" fill="none" stroke="#8a8e96" stroke-width="1"/><path d="M6 1v10M1 6h10" stroke="#8a8e96" stroke-width=".7"/></svg>
<svg class="a" style="left:363px;top:472.5px" width="12" height="12" viewBox="0 0 12 12"><path d="M1 2l10 8M11 2L1 10" stroke="#d01010" stroke-width="2.4"/><path d="M0 6h12" stroke="#202020" stroke-width=".8"/></svg>
<svg class="a" style="left:378px;top:478px" width="4" height="3" viewBox="0 0 4 3"><path d="M0 0h4L2 2.5z" fill="#333"/></svg>
<svg class="a" style="left:384.5px;top:472.5px" width="14" height="12" viewBox="0 0 14 12"><circle cx="3" cy="9" r="2" fill="none" stroke="#9a9ea6"/><path d="M4.5 7.5l3-3" stroke="#9a9ea6"/><text x="6" y="6" font-size="6" font-family="Liberation Sans" fill="#8a8e96" font-weight="bold">Fe</text></svg>
<svg class="a" style="left:403px;top:472.5px" width="12" height="12" viewBox="0 0 12 12"><rect x=".5" y=".5" width="11" height="11" fill="#2a4aa0" stroke="#1a2a70" stroke-width=".6"/><circle cx="6" cy="6" r="2" fill="#f0e000"/><circle cx="3" cy="3" r="1.4" fill="#f0e000"/><circle cx="9" cy="3" r="1.4" fill="#f0e000"/><circle cx="3" cy="9" r="1.4" fill="#f0e000"/><circle cx="9" cy="9" r="1.4" fill="#f0e000"/></svg>
<svg class="a" style="left:417.5px;top:478px" width="4" height="3" viewBox="0 0 4 3"><path d="M0 0h4L2 2.5z" fill="#333"/></svg>
<div class="sep" style="left:426px;top:472.5px"></div>
<div class="t" style="left:429.5px;top:473.5px;font-family:'Liberation Serif',serif;font-style:italic;font-weight:bold;font-size:11px;color:#1a2aa8;line-height:1">M</div>
<svg class="a" style="left:443.5px;top:472.5px" width="12" height="12" viewBox="0 0 12 12"><rect x=".5" y=".5" width="10" height="10" fill="#e8ecf8" stroke="#3a4e98" stroke-width=".8"/><circle cx="5.5" cy="5.5" r="3.2" fill="#d04040"/><circle cx="5.5" cy="5.5" r="1.8" fill="#30a0c0"/></svg>
<div class="a" style="left:457px;top:470.5px;width:7px;height:16.5px;background:linear-gradient(180deg,#e6eaf0,#cfd6e0)"></div>
<svg class="a" style="left:458.5px;top:479px" width="5" height="6" viewBox="0 0 5 6"><path d="M0 0h4.5M0.3 2h4l-2 2.5z" stroke="#2a2a2a" stroke-width=".8" fill="#2a2a2a"/></svg>
<div class="a" style="left:465px;top:470.5px;width:2px;height:16.5px;background:#9eabc0"></div>
<div class="a" style="left:469.5px;top:473px;width:2px;height:11px;background:repeating-linear-gradient(180deg,#5a6678 0 1px,transparent 1px 3px)"></div>
<div class="a" style="left:472.5px;top:471.5px;width:12.5px;height:14.5px;background:linear-gradient(180deg,#fff4c8,#f8d880);border:1px solid #e0b050"></div>
<svg class="a" style="left:474px;top:472.5px" width="10" height="12" viewBox="0 0 10 12"><path d="M1.5 .5v9l2.2-2 1.6 3.2 1.4-.7-1.6-3.1h3z" fill="#fafafa" stroke="#202020" stroke-width=".8"/></svg>
<svg class="a" style="left:487px;top:472.5px" width="12" height="12" viewBox="0 0 12 12"><path d="M6 0l2 2.5H4zM6 12l2-2.5H4zM0 6l2.5-2v4zM12 6l-2.5-2v4z" fill="#202020"/><path d="M6 2v8M2 6h8" stroke="#202020" stroke-width="1.2"/><circle cx="6" cy="6" r="1.8" fill="#202020"/></svg>
<svg class="a" style="left:502.5px;top:472.5px" width="12" height="12" viewBox="0 0 12 12"><path d="M9.5 6A3.8 3.8 0 115.5 2.2" fill="none" stroke="#202020" stroke-width="1.8"/><path d="M4.5 0l4 2.2-4 2.2z" fill="#202020"/></svg>
<svg class="a" style="left:516.5px;top:472.5px" width="12" height="12" viewBox="0 0 12 12"><path d="M6 0l2 2.5H4zM6 12l2-2.5H4zM0 6l2.5-2v4zM12 6l-2.5-2v4z" fill="#202020"/><path d="M6 2v8M2 6h8" stroke="#202020" stroke-width="1.4"/></svg>
<svg class="a" style="left:531px;top:472.5px" width="12" height="12" viewBox="0 0 12 12"><path d="M1 4V1h3M8 1h3v3M11 8v3H8M4 11H1V8" fill="none" stroke="#202020" stroke-width="1.2"/><rect x="4" y="4" width="4" height="4" fill="none" stroke="#202020" stroke-width="1.2"/></svg>
<svg class="a" style="left:545.5px;top:472.5px" width="12" height="12" viewBox="0 0 12 12"><path d="M11 2L1 6l10 4M6 4l1.5 4" fill="none" stroke="#202020" stroke-width="1.3"/></svg>
<svg class="a" style="left:560px;top:472.5px" width="12" height="12" viewBox="0 0 12 12"><path d="M1 5l5-4 5 4M3 6h6M2 11h8M6 5v6" fill="none" stroke="#202020" stroke-width="1.3"/></svg>
<svg class="a" style="left:574.5px;top:472.5px" width="12" height="12" viewBox="0 0 12 12"><circle cx="6" cy="6" r="3" fill="#202020"/><path d="M1 2l3 2M11 2L8 4M1 10l3-2M11 10L8 8M0 6h2M10 6h2" stroke="#202020"/></svg>
<svg class="a" style="left:588.5px;top:472.5px" width="12" height="12" viewBox="0 0 12 12"><circle cx="4" cy="4" r="3" fill="none" stroke="#a4a8b0" stroke-width="1.2"/><rect x="5" y="6" width="6" height="5" fill="#b8bcc4"/></svg>
<svg class="a" style="left:602.5px;top:472.5px" width="12" height="12" viewBox="0 0 12 12"><circle cx="4" cy="4" r="3" fill="none" stroke="#a4a8b0" stroke-width="1.2"/><rect x="5" y="6" width="6" height="5" fill="#b8bcc4"/></svg>
<div class="a" style="left:617.5px;top:470.5px;width:7px;height:16.5px;background:linear-gradient(180deg,#e6eaf0,#cfd6e0)"></div>
<svg class="a" style="left:619px;top:479px" width="5" height="6" viewBox="0 0 5 6"><path d="M0 0h4.5M0.3 2h4l-2 2.5z" stroke="#2a2a2a" stroke-width=".8" fill="#2a2a2a"/></svg>
<div class="a" style="left:625px;top:470.5px;width:3px;height:16.5px;background:#9eabc0"></div>
<div class="a" style="left:630px;top:473px;width:2px;height:11px;background:repeating-linear-gradient(180deg,#5a6678 0 1px,transparent 1px 3px)"></div>
<svg class="a" style="left:633.5px;top:472.5px" width="12" height="12" viewBox="0 0 12 12"><path d="M1 1v10h10M3 4v6M5 5v5M7 4v6M9 6v4" fill="none" stroke="#202020" stroke-width="1.1"/></svg>
<svg class="a" style="left:647.5px;top:472.5px" width="12" height="12" viewBox="0 0 12 12"><path d="M6 1L1 11h10z" fill="none" stroke="#202020" stroke-width="1.2"/></svg>
<svg class="a" style="left:661.5px;top:472.5px" width="12" height="12" viewBox="0 0 12 12"><circle cx="4" cy="7" r="3" fill="none" stroke="#202020" stroke-width="1.2"/><path d="M5 6l5-5M8 1l3 3" stroke="#202020" stroke-width="1.2"/></svg>
<svg class="a" style="left:677px;top:472.5px" width="12" height="12" viewBox="0 0 12 12"><path d="M1 8l5-6 6 3-5 6z" fill="#f4f4f4" stroke="#202020" stroke-width="1"/><path d="M3.5 5l5 3" stroke="#202020"/></svg>
<div class="a" style="left:691.5px;top:470.5px;width:7px;height:16.5px;background:linear-gradient(180deg,#e6eaf0,#cfd6e0)"></div>
<svg class="a" style="left:692.5px;top:479px" width="5" height="6" viewBox="0 0 5 6"><path d="M0 0h4.5M0.3 2h4l-2 2.5z" stroke="#2a2a2a" stroke-width=".8" fill="#2a2a2a"/></svg>
<div class="a" id="status"></div>
<div class="t" style="left:7.50px;top:490.89px;font-size:8.4px;color:#f2f4f8;transform:scaleX(0.8694);transform-origin:0 0;">For Help, press F1</div>
<div class="ssep" style="left:455.8px"></div>
<div class="ssep" style="left:523.9px"></div>
<div class="ssep" style="left:541.7px"></div>
<div class="ssep" style="left:559.6px"></div>
<div class="ssep" style="left:692px"></div>
<div class="ssep" style="left:721px"></div>
<div class="ssep" style="left:767.4px"></div>
<div class="ssep" style="left:814px"></div>
<div class="ssep" style="left:861px"></div>
<div class="ssep" style="left:903.5px"></div>
<div class="a" style="left:578.5px;top:488.5px;width:1px;height:12px;background:#d6dbe4"></div>
<div class="a" style="left:580px;top:489px;width:67px;height:11px;background:#b8c3d5;border:1px solid #8e9ab0"></div>
<div class="t" style="left:563.70px;top:490.89px;font-size:8.4px;color:#e8ecf2;transform:scaleX(0.8252);transform-origin:0 0;">Blar</div>
<div class="t" style="left:581.50px;top:490.89px;font-size:8.4px;color:#1a2230;transform:scaleX(0.9757);transform-origin:0 0;">Manual</div>
<div class="t" style="left:649.70px;top:490.89px;font-size:8.4px;color:#f2f4f8;transform:scaleX(0.8611);transform-origin:0 0;">N. 0.639791</div>
<div class="t" style="left:724.00px;top:490.89px;font-size:8.4px;color:#f2f4f8;transform:scaleX(0.9185);transform-origin:0 0;">4 parms</div>
<div class="t" style="left:770.50px;top:490.89px;font-size:8.4px;color:#f2f4f8;transform:scaleX(0.9205);transform-origin:0 0;">177 atoms</div>
<div class="t" style="left:818.00px;top:490.89px;font-size:8.4px;color:#f2f4f8;transform:scaleX(0.8997);transform-origin:0 0;">304 bonds</div>
<div class="t" style="left:864.60px;top:490.89px;font-size:8.4px;color:#f2f4f8;transform:scaleX(0.9653);transform-origin:0 0;">polymeric</div>
<div class="t" style="left:906.70px;top:490.89px;font-size:8.4px;color:#f2f4f8;transform:scaleX(0.9474);transform-origin:0 0;">0 polyh.</div>
<div class="a" style="left:944px;top:489.5px;width:12px;height:11px;background:radial-gradient(circle,#c8d0dc 0.8px,transparent 1px) 0 0/3px 3px;clip-path:polygon(100% 0,100% 100%,0 100%)"></div>
<div class="a" id="frameL"></div>
<div class="a" id="frameR"></div>
<div class="a" id="frameB"></div>
<div class="a" style="left:896.5px;top:0;width:62px;height:12px;border:1px solid #5a6a80;border-top:none;border-radius:0 0 4px 4px;overflow:hidden;background:linear-gradient(180deg,#dfe8f2,#c6d6e6 50%,#aec4da 51%,#bcd0e4)"></div>
<div class="a" style="left:913.5px;top:0;width:1px;height:11px;background:#5a6a80"></div>
<div class="a" style="left:930.5px;top:0;width:27.5px;height:11px;border-radius:0 0 4px 0;background:linear-gradient(180deg,#e6a898 0,#d87a62 45%,#c8482e 55%,#d8684a 100%)"></div>
<div class="a" style="left:900.5px;top:6px;width:9px;height:2.5px;background:#f4f6fa;border:1px solid #50607a"></div>
<div class="a" style="left:918px;top:2.5px;width:8px;height:6.5px;background:transparent;border:1px solid #50607a;box-shadow:inset 0 0 0 1px #f4f6fa"></div>
<svg class="a" style="left:939px;top:1.5px" width="11" height="9" viewBox="0 0 11 9"><path d="M2 1l7 7M9 1L2 8" stroke="#5a2a20" stroke-width="3"/><path d="M2 1l7 7M9 1L2 8" stroke="#fff" stroke-width="1.8"/></svg>
</body></html>
